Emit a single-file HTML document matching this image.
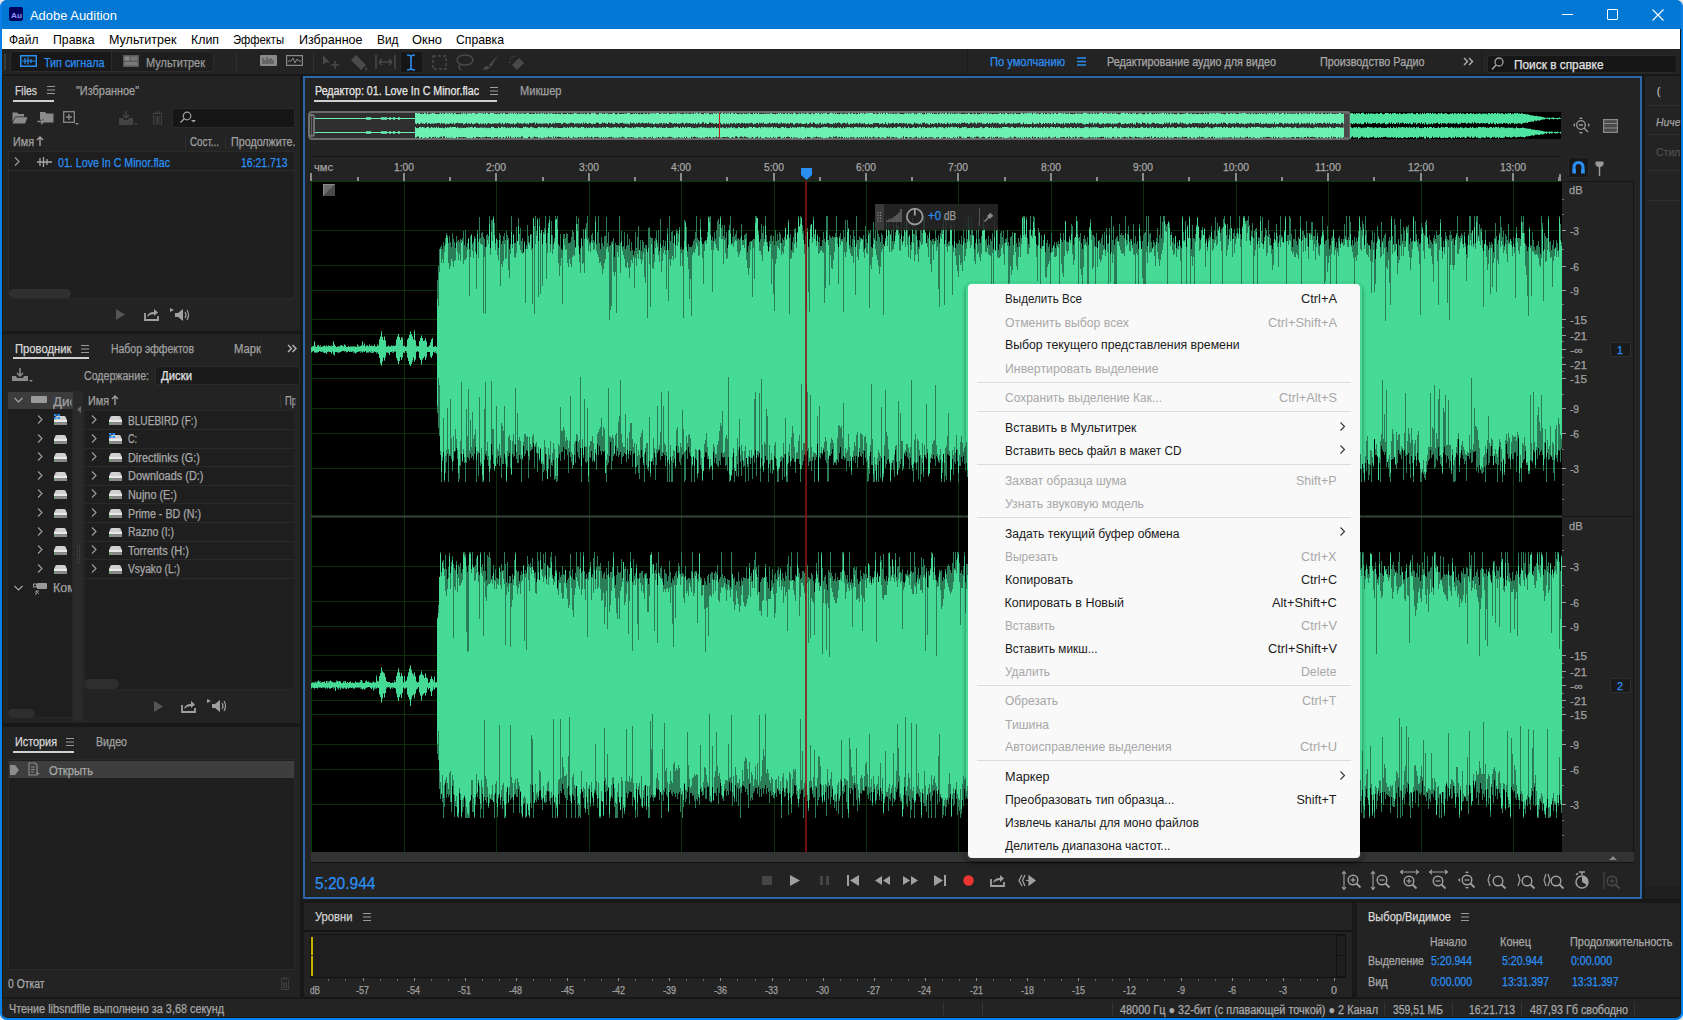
<!DOCTYPE html><html><head><meta charset="utf-8"><style>
*{margin:0;padding:0;box-sizing:border-box}
html,body{width:1683px;height:1020px;overflow:hidden;background:#e6e6e6}
body{font-family:"Liberation Sans",sans-serif;position:relative}
.ab{position:absolute}
.t{position:absolute;white-space:nowrap;line-height:1}
.pan{position:absolute;background:#232323}
.g{color:#a3a3a3}
.w{color:#d4d4d4}
.bl{color:#2b8ff2}
svg{position:absolute;overflow:visible}
</style></head><body>
<div class="ab" style="left:0;top:0;width:1683px;height:1020px;background:#181818;border-radius:7px;overflow:hidden;border:2px solid #0a7fe8">
</div>
<div class="ab" style="left:0;top:0;width:1683px;height:29px;background:#0078d4;border-radius:7px 7px 0 0"></div>
<div class="ab" style="left:2px;top:29px;width:1678px;height:20px;background:#fff"></div>
<div class="ab" style="left:2px;top:49px;width:1678px;height:25px;background:#232323"></div>
<div class="pan" style="left:3px;top:76px;width:297px;height:255px;background:#232323"></div>
<div class="pan" style="left:3px;top:334px;width:297px;height:389px;background:#232323"></div>
<div class="pan" style="left:3px;top:727px;width:297px;height:270px;background:#232323"></div>
<div class="pan" style="left:305px;top:78px;width:1335px;height:820px;background:#232323"></div>
<div class="pan" style="left:1645px;top:76px;width:35px;height:809px;background:#232323"></div>
<div class="pan" style="left:304px;top:903px;width:1048px;height:94px;background:#232323"></div>
<div class="pan" style="left:1357px;top:903px;width:323px;height:94px;background:#232323"></div>
<div class="pan" style="left:2px;top:999px;width:1678px;height:18px;background:#232323"></div>
<div class="ab" style="left:9px;top:7px;width:14px;height:14px;background:#00005b;border-radius:2px"></div>
<div class="t" style="left:10.5px;top:11px;font-size:8px;line-height:9.20px;color:#9999ff;font-weight:bold;transform:scaleX(1.0315);transform-origin:0 0;">Au</div>
<div class="t" style="left:30px;top:8px;font-size:13.5px;line-height:15.52px;color:#ffffff;transform:scaleX(0.9578);transform-origin:0 0;">Adobe Audition</div>
<div class="ab" style="left:1562px;top:14px;width:11px;height:1px;background:#fff"></div>
<div class="ab" style="left:1607px;top:9px;width:11px;height:11px;border:1px solid #fff;border-radius:1px"></div>
<svg style="left:1652px;top:9px" width="12" height="12"><path d="M0.5 0.5L11.5 11.5M11.5 0.5L0.5 11.5" stroke="#fff" stroke-width="1.1"/></svg>
<div class="t" style="left:8.5px;top:33px;font-size:13px;line-height:14.95px;color:#000000;transform:scaleX(0.9230);transform-origin:0 0;">Файл</div>
<div class="t" style="left:52.5px;top:33px;font-size:13px;line-height:14.95px;color:#000000;transform:scaleX(0.9450);transform-origin:0 0;">Правка</div>
<div class="t" style="left:109px;top:33px;font-size:13px;line-height:14.95px;color:#000000;transform:scaleX(0.9663);transform-origin:0 0;">Мультитрек</div>
<div class="t" style="left:190.5px;top:33px;font-size:13px;line-height:14.95px;color:#000000;transform:scaleX(0.9505);transform-origin:0 0;">Клип</div>
<div class="t" style="left:233px;top:33px;font-size:13px;line-height:14.95px;color:#000000;transform:scaleX(0.8630);transform-origin:0 0;">Эффекты</div>
<div class="t" style="left:298.5px;top:33px;font-size:13px;line-height:14.95px;color:#000000;transform:scaleX(0.9638);transform-origin:0 0;">Избранное</div>
<div class="t" style="left:376.5px;top:33px;font-size:13px;line-height:14.95px;color:#000000;transform:scaleX(0.9142);transform-origin:0 0;">Вид</div>
<div class="t" style="left:411.5px;top:33px;font-size:13px;line-height:14.95px;color:#000000;transform:scaleX(0.9931);transform-origin:0 0;">Окно</div>
<div class="t" style="left:455.5px;top:33px;font-size:13px;line-height:14.95px;color:#000000;transform:scaleX(0.9412);transform-origin:0 0;">Справка</div>
<div class="ab" style="left:4px;top:54px;width:2px;height:16px;background:#3a3a3a"></div>
<div class="ab" style="left:10px;top:51px;width:204px;height:21px;border:1px solid #2c2c2c;border-radius:3px;background:#1e1e1e"></div>
<div class="ab" style="left:11px;top:52px;width:100px;height:19px;background:#181818;border-radius:2px 0 0 2px"></div>
<div class="ab" style="left:111px;top:52px;width:1px;height:19px;background:#2c2c2c"></div>
<svg style="left:20px;top:55px" width="17" height="12"><rect x="0.75" y="0.75" width="15.5" height="10.5" fill="none" stroke="#2b8ff2" stroke-width="1.5"/><path d="M2 6H15M5 3V9M8 2.5V9.5M11 4V8" stroke="#2b8ff2" stroke-width="1.2"/></svg>
<div class="t" style="left:44px;top:57px;font-size:12px;line-height:13.80px;color:#2b8ff2;transform:scaleX(0.8977);transform-origin:0 0;-webkit-text-stroke:0.25px #2b8ff2;">Тип сигнала</div>
<svg style="left:123px;top:55px" width="16" height="12"><rect x="0" y="0" width="16" height="12" fill="#5a5a5a"/><rect x="1.5" y="1.5" width="5" height="4" fill="#8a8a8a"/><rect x="8" y="1.5" width="6.5" height="4" fill="#767676"/><rect x="1.5" y="7" width="13" height="3.5" fill="#7a7a7a"/></svg>
<div class="t" style="left:146px;top:57px;font-size:12px;line-height:13.80px;color:#9a9a9a;transform:scaleX(0.9150);transform-origin:0 0;-webkit-text-stroke:0.25px #9a9a9a;">Мультитрек</div>
<div class="ab" style="left:236px;top:52px;width:1px;height:21px;background:#303030"></div>
<svg style="left:260px;top:55px" width="17" height="11"><rect x="0" y="0" width="17" height="11" rx="1" fill="#8a8a8a"/><path d="M3 9V3M5 9V5M7 9V2M9 9V4M11 9V3M13 9V5" stroke="#444" stroke-width="1"/></svg>
<svg style="left:286px;top:55px" width="17" height="11"><rect x="0.6" y="0.6" width="15.8" height="9.8" fill="none" stroke="#8a8a8a" stroke-width="1.2"/><path d="M2 6H5L7 3L9 8L11 4L13 6H15" fill="none" stroke="#8a8a8a" stroke-width="1"/></svg>
<div class="ab" style="left:313px;top:53px;width:1px;height:20px;background:#303030"></div>
<svg style="left:322px;top:54px" width="19" height="16"><path d="M1 1L1 11L4 8L8 9Z" fill="#4a4a4a"/><path d="M13 7V15M9 11H17" stroke="#4a4a4a" stroke-width="1.5"/></svg>
<svg style="left:350px;top:54px" width="18" height="17"><path d="M1 6L6 1L16 11L11 16Z" fill="#4a4a4a"/><path d="M15 15L17 17L17 13Z" fill="#4a4a4a"/></svg>
<svg style="left:375px;top:54px" width="21" height="16"><path d="M1 1V15M20 1V15M4 8H17M4 8L7 5M4 8L7 11M17 8L14 5M17 8L14 11" stroke="#4a4a4a" stroke-width="1.5" fill="none"/></svg>
<div class="ab" style="left:400px;top:51px;width:23px;height:22px;background:#161616;border-radius:2px;border:1px solid #262626"></div>
<svg style="left:405px;top:54px" width="12" height="17"><path d="M2 1Q6 1 6 3V14Q6 16 2 16M10 1Q6 1 6 3V14Q6 16 10 16" stroke="#2b8ff2" stroke-width="1.6" fill="none"/></svg>
<svg style="left:432px;top:55px" width="15" height="15"><rect x="1" y="1" width="13" height="13" fill="none" stroke="#4a4a4a" stroke-width="1.5" stroke-dasharray="3 2"/></svg>
<svg style="left:456px;top:54px" width="18" height="17"><ellipse cx="9" cy="6" rx="8" ry="5" fill="none" stroke="#4a4a4a" stroke-width="1.5"/><path d="M4 10Q2 14 5 16" stroke="#4a4a4a" stroke-width="1.5" fill="none"/></svg>
<svg style="left:482px;top:54px" width="17" height="17"><path d="M16 1L7 11L9 13Z" fill="#4a4a4a"/><path d="M6 12Q2 12 1 16Q5 16 8 14Z" fill="#4a4a4a"/></svg>
<svg style="left:508px;top:54px" width="18" height="17"><path d="M4 11L11 4L16 9L9 16Z" fill="#4a4a4a"/><path d="M2 9Q1 3 8 2" stroke="#4a4a4a" stroke-width="1.2" stroke-dasharray="1.5 1.5" fill="none"/></svg>
<div class="ab" style="left:967px;top:50px;width:1px;height:24px;background:#1a1a1a"></div>
<div class="t" style="left:990px;top:56px;font-size:12px;line-height:13.80px;color:#2b8ff2;transform:scaleX(0.9242);transform-origin:0 0;-webkit-text-stroke:0.25px #2b8ff2;">По умолчанию</div>
<svg style="left:1077px;top:57px" width="9" height="9"><path d="M0 1H9M0 4.5H9M0 8H9" stroke="#2b8ff2" stroke-width="1.3"/></svg>
<div class="t" style="left:1107px;top:56px;font-size:12px;line-height:13.80px;color:#a8a8a8;transform:scaleX(0.8996);transform-origin:0 0;-webkit-text-stroke:0.25px #a8a8a8;">Редактирование аудио для видео</div>
<div class="t" style="left:1319.5px;top:56px;font-size:12px;line-height:13.80px;color:#a8a8a8;transform:scaleX(0.8990);transform-origin:0 0;-webkit-text-stroke:0.25px #a8a8a8;">Производство Радио</div>
<svg style="left:1463px;top:57px" width="11" height="9"><path d="M1 1L4.5 4.5L1 8M6 1L9.5 4.5L6 8" stroke="#b0b0b0" stroke-width="1.4" fill="none"/></svg>
<div class="ab" style="left:1481px;top:50px;width:1px;height:24px;background:#1a1a1a"></div>
<div class="ab" style="left:1487px;top:55px;width:190px;height:18px;background:#161616;border:1px solid #2a2a2a;border-radius:3px"></div>
<svg style="left:1491px;top:57px" width="13" height="14"><circle cx="8" cy="5" r="4" fill="none" stroke="#a0a0a0" stroke-width="1.3"/><path d="M5 8L1 12.5" stroke="#a0a0a0" stroke-width="1.5"/></svg>
<div class="t" style="left:1514px;top:58px;font-size:12.5px;line-height:14.37px;color:#e2e2e2;transform:scaleX(0.9486);transform-origin:0 0;-webkit-text-stroke:0.25px #e2e2e2;">Поиск в справке</div>
<div class="t" style="left:14.5px;top:85px;font-size:12px;line-height:13.80px;color:#d8d8d8;transform:scaleX(0.8683);transform-origin:0 0;-webkit-text-stroke:0.25px #d8d8d8;">Files</div>
<svg style="left:47px;top:86px" width="8" height="8"><path d="M0 0.5H8M0 4H8M0 7.5H8" stroke="#9a9a9a" stroke-width="1"/></svg>
<div class="ab" style="left:13px;top:100px;width:41px;height:2px;background:#d0d0d0;"></div>
<div class="t" style="left:76px;top:85px;font-size:12px;line-height:13.80px;color:#a0a0a0;transform:scaleX(0.9086);transform-origin:0 0;-webkit-text-stroke:0.25px #a0a0a0;">"Избранное"</div>
<svg style="left:12px;top:112px" width="16" height="12"><path d="M0.5 0.5H5L6.5 2H12V4.5H3.2L0.5 10Z" fill="#8a8a8a"/><path d="M3.5 5.2H15.5L13 11.5H0.5Z" fill="#8a8a8a"/></svg>
<svg style="left:37px;top:111px" width="18" height="15"><path d="M3 1H8L9.5 2.5H16.5V11.5H7V8.5H3Z" fill="#8a8a8a"/><path d="M0.5 10.5H6M4 8L6.8 10.5L4 13" stroke="#8a8a8a" stroke-width="1.6" fill="none"/></svg>
<svg style="left:63px;top:111px" width="17" height="15"><rect x="0.7" y="0.7" width="10.6" height="10.6" fill="none" stroke="#8a8a8a" stroke-width="1.3"/><path d="M6 3V9M3 6H9" stroke="#8a8a8a" stroke-width="1.3"/><path d="M12 12H16L14 14Z" fill="#8a8a8a"/></svg>
<svg style="left:118px;top:110px" width="21" height="16"><path d="M1 8H5L6 10H10L11 8H15V15H1Z" fill="#444"/><path d="M8 1V8M5 5L8 8L11 5" stroke="#444" stroke-width="1.5" fill="none"/><path d="M16 13H20L18 15Z" fill="#444"/></svg>
<svg style="left:152px;top:111px" width="11" height="14"><path d="M0.5 2.5H10.5M3.5 2.5V1H7.5V2.5M1.5 4V13H9.5V4M4 5V12M5.5 5V12M7 5V12" stroke="#444" stroke-width="0.9" fill="none"/></svg>
<div class="ab" style="left:172px;top:108px;width:123px;height:20px;background:#161616;border:1px solid #2a2a2a;border-radius:2px"></div>
<svg style="left:179px;top:111px" width="18" height="14"><circle cx="8" cy="5" r="3.8" fill="none" stroke="#a0a0a0" stroke-width="1.2"/><path d="M5.5 7.5L1.5 11.5" stroke="#a0a0a0" stroke-width="1.4"/><path d="M12 9H17L14.5 11.5Z" fill="#a0a0a0"/></svg>
<div class="t" style="left:12.5px;top:136px;font-size:12px;line-height:13.80px;color:#a0a0a0;transform:scaleX(0.8985);transform-origin:0 0;-webkit-text-stroke:0.25px #a0a0a0;">Имя</div>
<svg style="left:36px;top:136px" width="8" height="10"><path d="M4 10V1M1 4L4 1L7 4" stroke="#a0a0a0" stroke-width="1.4" fill="none"/></svg>
<div class="ab" style="left:185px;top:136px;width:1px;height:13px;background:#2e2e2e;"></div>
<div class="ab" style="left:225px;top:136px;width:1px;height:13px;background:#2e2e2e;"></div>
<div class="t" style="left:190px;top:136px;font-size:12px;line-height:13.80px;color:#a0a0a0;transform:scaleX(0.8167);transform-origin:0 0;-webkit-text-stroke:0.25px #a0a0a0;">Сост...</div>
<div class="t" style="left:230.5px;top:136px;font-size:12px;line-height:13.80px;color:#a0a0a0;transform:scaleX(0.8930);transform-origin:0 0;-webkit-text-stroke:0.25px #a0a0a0;">Продолжите.</div>
<div class="ab" style="left:8px;top:151px;width:287px;height:148px;background:#1e1e1e;border:1px solid #2a2a2a"></div>
<div class="ab" style="left:9px;top:170px;width:285px;height:1px;background:#2c2c2c;"></div>
<svg style="left:14px;top:157px" width="6" height="9"><path d="M1 0.5L5 4.5L1 8.5" stroke="#a0a0a0" stroke-width="1.1" fill="none"/></svg>
<svg style="left:37px;top:157px" width="15" height="10"><path d="M0 5H15M3 1V9M6.5 0V10M10 2V8" stroke="#a8a8a8" stroke-width="1.3"/></svg>
<div class="t" style="left:58px;top:157px;font-size:12px;line-height:13.80px;color:#2b8ff2;transform:scaleX(0.8884);transform-origin:0 0;-webkit-text-stroke:0.25px #2b8ff2;">01. Love In C Minor.flac</div>
<div class="t" style="left:241px;top:157px;font-size:12px;line-height:13.80px;color:#2b8ff2;transform:scaleX(0.8710);transform-origin:0 0;-webkit-text-stroke:0.25px #2b8ff2;">16:21.713</div>
<div class="ab" style="left:9px;top:289px;width:62px;height:9px;background:#2f2f2f;border-radius:5px"></div>
<svg style="left:116px;top:309px" width="9" height="11"><path d="M0 0L9 5.5L0 11Z" fill="#555"/></svg>
<svg style="left:144px;top:308px" width="15" height="13"><path d="M1 5V12H14V8" stroke="#a0a0a0" stroke-width="1.8" fill="none"/><path d="M3 9Q4 4 10 4V1L14 4.5L10 8V6Q6 6 3 9Z" fill="#a0a0a0"/></svg>
<svg style="left:170px;top:308px" width="22" height="14"><path d="M0 0L4 2L0 4Z" fill="#a0a0a0"/><path d="M5 5H8L13 1V13L8 9H5Z" fill="#a0a0a0"/><path d="M15 4Q17 7 15 10M17 2Q20 7 17 12" stroke="#a0a0a0" stroke-width="1.2" fill="none"/></svg>
<div class="t" style="left:14.5px;top:343px;font-size:12px;line-height:13.80px;color:#d8d8d8;transform:scaleX(0.9384);transform-origin:0 0;-webkit-text-stroke:0.25px #d8d8d8;">Проводник</div>
<svg style="left:81px;top:345px" width="8" height="8"><path d="M0 0.5H8M0 4H8M0 7.5H8" stroke="#9a9a9a" stroke-width="1"/></svg>
<div class="ab" style="left:13px;top:357px;width:76px;height:2px;background:#d0d0d0;"></div>
<div class="t" style="left:111px;top:343px;font-size:12px;line-height:13.80px;color:#a0a0a0;transform:scaleX(0.8715);transform-origin:0 0;-webkit-text-stroke:0.25px #a0a0a0;">Набор эффектов</div>
<div class="t" style="left:233.5px;top:343px;font-size:12px;line-height:13.80px;color:#a0a0a0;transform:scaleX(0.9398);transform-origin:0 0;-webkit-text-stroke:0.25px #a0a0a0;">Марк</div>
<div class="ab" style="left:261px;top:338px;width:1px;height:22px;background:#2a2a2a;"></div>
<svg style="left:287px;top:344px" width="10" height="9"><path d="M1 1L4.5 4.5L1 8M5.5 1L9 4.5L5.5 8" stroke="#b8b8b8" stroke-width="1.4" fill="none"/></svg>
<svg style="left:12px;top:368px" width="22" height="16"><path d="M8 0V8M5 5L8 8L11 5" stroke="#8a8a8a" stroke-width="1.5" fill="none"/><path d="M0 8H4L5 10H11L12 8H16V13H0Z" fill="#8a8a8a"/><path d="M17 12H21L19 14Z" fill="#8a8a8a"/></svg>
<div class="t" style="left:84px;top:370px;font-size:12px;line-height:13.80px;color:#a0a0a0;transform:scaleX(0.8847);transform-origin:0 0;-webkit-text-stroke:0.25px #a0a0a0;">Содержание:</div>
<div class="ab" style="left:155px;top:366px;width:145px;height:19px;background:#1a1a1a;border:1px solid #2c2c2c;border-radius:2px"></div>
<div class="t" style="left:161px;top:370px;font-size:12px;line-height:13.80px;color:#e0e0e0;transform:scaleX(0.9456);transform-origin:0 0;-webkit-text-stroke:0.25px #e0e0e0;">Диски</div>
<div class="ab" style="left:7px;top:391px;width:66px;height:327px;background:#1e1e1e;border:1px solid #262626"></div>
<div class="ab" style="left:8px;top:392px;width:65px;height:17px;background:#3c3c3c;"></div>
<svg style="left:14px;top:397px" width="9" height="6"><path d="M0.5 1L4.5 5L8.5 1" stroke="#a8a8a8" stroke-width="1.1" fill="none"/></svg>
<svg style="left:31px;top:396px" width="16" height="8"><rect x="0" y="0" width="16" height="7" rx="1" fill="#9a9a9a"/></svg>
<div class="t" style="left:53px;top:396px;font-size:12px;line-height:13.80px;color:#a0a0a0;transform:scaleX(1.1042);transform-origin:0 0;-webkit-text-stroke:0.25px #a0a0a0;clip-path:inset(0 4px 0 0);">Дис</div>
<div class="ab" style="left:73px;top:391px;width:10px;height:330px;background:#2a2a2a;"></div>
<svg style="left:77px;top:406px" width="4" height="7"><path d="M4 0L0 3.5L4 7Z" fill="#666"/></svg>
<svg style="left:77px;top:545px" width="3" height="20"><path d="M0.5 0V20M2.5 0V20" stroke="#444" stroke-width="1" stroke-dasharray="1 1"/></svg>
<div class="ab" style="left:84px;top:410px;width:211px;height:280px;background:#1e1e1e;border:1px solid #262626"></div>
<div class="t" style="left:88px;top:395px;font-size:12px;line-height:13.80px;color:#a0a0a0;transform:scaleX(0.8985);transform-origin:0 0;-webkit-text-stroke:0.25px #a0a0a0;">Имя</div>
<svg style="left:111px;top:395px" width="8" height="10"><path d="M4 10V1M1 4L4 1L7 4" stroke="#a0a0a0" stroke-width="1.4" fill="none"/></svg>
<div class="ab" style="left:280px;top:394px;width:1px;height:14px;background:#2e2e2e;"></div>
<div class="t" style="left:285px;top:395px;font-size:12px;line-height:13.80px;color:#a0a0a0;transform:scaleX(0.7844);transform-origin:0 0;-webkit-text-stroke:0.25px #a0a0a0;clip-path:inset(0 2px 0 0);">Пр</div>
<svg style="left:91px;top:415.0px" width="6" height="9"><path d="M1 0.5L5 4.5L1 8.5" stroke="#a0a0a0" stroke-width="1.1" fill="none"/></svg>
<svg style="left:108px;top:414.0px" width="15" height="12"><path d="M2 4Q2 2 4 2H11Q13 2 13 4L14 6H1Z" fill="#d0d0d0"/><rect x="1" y="6" width="13" height="2.5" fill="#e8e8e8"/><rect x="1" y="8.5" width="13" height="2.5" fill="#8a8a8a"/><rect x="2" y="9.2" width="1.2" height="1" fill="#3c3"/></svg>
<div class="t" style="left:128px;top:415px;font-size:12px;line-height:13.80px;color:#a8a8a8;transform:scaleX(0.8414);transform-origin:0 0;-webkit-text-stroke:0.25px #a8a8a8;">BLUEBIRD (F:)</div>
<div class="ab" style="left:85px;top:429px;width:209px;height:1px;background:#2a2a2a;"></div>
<svg style="left:37px;top:415.0px" width="6" height="9"><path d="M1 0.5L5 4.5L1 8.5" stroke="#a0a0a0" stroke-width="1.1" fill="none"/></svg>
<svg style="left:53px;top:414.0px" width="15" height="12"><path d="M2 4Q2 2 4 2H11Q13 2 13 4L14 6H1Z" fill="#d0d0d0"/><rect x="1" y="6" width="13" height="2.5" fill="#e8e8e8"/><rect x="1" y="8.5" width="13" height="2.5" fill="#8a8a8a"/><rect x="2" y="9.2" width="1.2" height="1" fill="#3c3"/><rect x="1" y="0" width="2.5" height="2" fill="#2b8ff2"/><rect x="4.5" y="0" width="2.5" height="2" fill="#2b8ff2"/><rect x="1" y="3" width="2.5" height="2" fill="#2b8ff2"/><rect x="4.5" y="3" width="2.5" height="2" fill="#2b8ff2"/></svg>
<svg style="left:91px;top:433.6px" width="6" height="9"><path d="M1 0.5L5 4.5L1 8.5" stroke="#a0a0a0" stroke-width="1.1" fill="none"/></svg>
<svg style="left:108px;top:432.6px" width="15" height="12"><path d="M2 4Q2 2 4 2H11Q13 2 13 4L14 6H1Z" fill="#d0d0d0"/><rect x="1" y="6" width="13" height="2.5" fill="#e8e8e8"/><rect x="1" y="8.5" width="13" height="2.5" fill="#8a8a8a"/><rect x="2" y="9.2" width="1.2" height="1" fill="#3c3"/><rect x="1" y="0" width="2.5" height="2" fill="#2b8ff2"/><rect x="4.5" y="0" width="2.5" height="2" fill="#2b8ff2"/><rect x="1" y="3" width="2.5" height="2" fill="#2b8ff2"/><rect x="4.5" y="3" width="2.5" height="2" fill="#2b8ff2"/></svg>
<div class="t" style="left:128px;top:433px;font-size:12px;line-height:13.80px;color:#a8a8a8;transform:scaleX(0.7500);transform-origin:0 0;-webkit-text-stroke:0.25px #a8a8a8;">C:</div>
<div class="ab" style="left:85px;top:448px;width:209px;height:1px;background:#2a2a2a;"></div>
<svg style="left:37px;top:433.6px" width="6" height="9"><path d="M1 0.5L5 4.5L1 8.5" stroke="#a0a0a0" stroke-width="1.1" fill="none"/></svg>
<svg style="left:53px;top:432.6px" width="15" height="12"><path d="M2 4Q2 2 4 2H11Q13 2 13 4L14 6H1Z" fill="#d0d0d0"/><rect x="1" y="6" width="13" height="2.5" fill="#e8e8e8"/><rect x="1" y="8.5" width="13" height="2.5" fill="#8a8a8a"/><rect x="2" y="9.2" width="1.2" height="1" fill="#3c3"/></svg>
<svg style="left:91px;top:452.2px" width="6" height="9"><path d="M1 0.5L5 4.5L1 8.5" stroke="#a0a0a0" stroke-width="1.1" fill="none"/></svg>
<svg style="left:108px;top:451.2px" width="15" height="12"><path d="M2 4Q2 2 4 2H11Q13 2 13 4L14 6H1Z" fill="#d0d0d0"/><rect x="1" y="6" width="13" height="2.5" fill="#e8e8e8"/><rect x="1" y="8.5" width="13" height="2.5" fill="#8a8a8a"/><rect x="2" y="9.2" width="1.2" height="1" fill="#3c3"/></svg>
<div class="t" style="left:128px;top:452px;font-size:12px;line-height:13.80px;color:#a8a8a8;transform:scaleX(0.9075);transform-origin:0 0;-webkit-text-stroke:0.25px #a8a8a8;">Directlinks (G:)</div>
<div class="ab" style="left:85px;top:466px;width:209px;height:1px;background:#2a2a2a;"></div>
<svg style="left:37px;top:452.2px" width="6" height="9"><path d="M1 0.5L5 4.5L1 8.5" stroke="#a0a0a0" stroke-width="1.1" fill="none"/></svg>
<svg style="left:53px;top:451.2px" width="15" height="12"><path d="M2 4Q2 2 4 2H11Q13 2 13 4L14 6H1Z" fill="#d0d0d0"/><rect x="1" y="6" width="13" height="2.5" fill="#e8e8e8"/><rect x="1" y="8.5" width="13" height="2.5" fill="#8a8a8a"/><rect x="2" y="9.2" width="1.2" height="1" fill="#3c3"/></svg>
<svg style="left:91px;top:470.8px" width="6" height="9"><path d="M1 0.5L5 4.5L1 8.5" stroke="#a0a0a0" stroke-width="1.1" fill="none"/></svg>
<svg style="left:108px;top:469.8px" width="15" height="12"><path d="M2 4Q2 2 4 2H11Q13 2 13 4L14 6H1Z" fill="#d0d0d0"/><rect x="1" y="6" width="13" height="2.5" fill="#e8e8e8"/><rect x="1" y="8.5" width="13" height="2.5" fill="#8a8a8a"/><rect x="2" y="9.2" width="1.2" height="1" fill="#3c3"/></svg>
<div class="t" style="left:128px;top:470px;font-size:12px;line-height:13.80px;color:#a8a8a8;transform:scaleX(0.9130);transform-origin:0 0;-webkit-text-stroke:0.25px #a8a8a8;">Downloads (D:)</div>
<div class="ab" style="left:85px;top:485px;width:209px;height:1px;background:#2a2a2a;"></div>
<svg style="left:37px;top:470.8px" width="6" height="9"><path d="M1 0.5L5 4.5L1 8.5" stroke="#a0a0a0" stroke-width="1.1" fill="none"/></svg>
<svg style="left:53px;top:469.8px" width="15" height="12"><path d="M2 4Q2 2 4 2H11Q13 2 13 4L14 6H1Z" fill="#d0d0d0"/><rect x="1" y="6" width="13" height="2.5" fill="#e8e8e8"/><rect x="1" y="8.5" width="13" height="2.5" fill="#8a8a8a"/><rect x="2" y="9.2" width="1.2" height="1" fill="#3c3"/></svg>
<svg style="left:91px;top:489.4px" width="6" height="9"><path d="M1 0.5L5 4.5L1 8.5" stroke="#a0a0a0" stroke-width="1.1" fill="none"/></svg>
<svg style="left:108px;top:488.4px" width="15" height="12"><path d="M2 4Q2 2 4 2H11Q13 2 13 4L14 6H1Z" fill="#d0d0d0"/><rect x="1" y="6" width="13" height="2.5" fill="#e8e8e8"/><rect x="1" y="8.5" width="13" height="2.5" fill="#8a8a8a"/><rect x="2" y="9.2" width="1.2" height="1" fill="#3c3"/></svg>
<div class="t" style="left:128px;top:489px;font-size:12px;line-height:13.80px;color:#a8a8a8;transform:scaleX(0.9071);transform-origin:0 0;-webkit-text-stroke:0.25px #a8a8a8;">Nujno (E:)</div>
<div class="ab" style="left:85px;top:503px;width:209px;height:1px;background:#2a2a2a;"></div>
<svg style="left:37px;top:489.4px" width="6" height="9"><path d="M1 0.5L5 4.5L1 8.5" stroke="#a0a0a0" stroke-width="1.1" fill="none"/></svg>
<svg style="left:53px;top:488.4px" width="15" height="12"><path d="M2 4Q2 2 4 2H11Q13 2 13 4L14 6H1Z" fill="#d0d0d0"/><rect x="1" y="6" width="13" height="2.5" fill="#e8e8e8"/><rect x="1" y="8.5" width="13" height="2.5" fill="#8a8a8a"/><rect x="2" y="9.2" width="1.2" height="1" fill="#3c3"/></svg>
<svg style="left:91px;top:508.0px" width="6" height="9"><path d="M1 0.5L5 4.5L1 8.5" stroke="#a0a0a0" stroke-width="1.1" fill="none"/></svg>
<svg style="left:108px;top:507.0px" width="15" height="12"><path d="M2 4Q2 2 4 2H11Q13 2 13 4L14 6H1Z" fill="#d0d0d0"/><rect x="1" y="6" width="13" height="2.5" fill="#e8e8e8"/><rect x="1" y="8.5" width="13" height="2.5" fill="#8a8a8a"/><rect x="2" y="9.2" width="1.2" height="1" fill="#3c3"/></svg>
<div class="t" style="left:128px;top:508px;font-size:12px;line-height:13.80px;color:#a8a8a8;transform:scaleX(0.8903);transform-origin:0 0;-webkit-text-stroke:0.25px #a8a8a8;">Prime - BD (N:)</div>
<div class="ab" style="left:85px;top:522px;width:209px;height:1px;background:#2a2a2a;"></div>
<svg style="left:37px;top:508.0px" width="6" height="9"><path d="M1 0.5L5 4.5L1 8.5" stroke="#a0a0a0" stroke-width="1.1" fill="none"/></svg>
<svg style="left:53px;top:507.0px" width="15" height="12"><path d="M2 4Q2 2 4 2H11Q13 2 13 4L14 6H1Z" fill="#d0d0d0"/><rect x="1" y="6" width="13" height="2.5" fill="#e8e8e8"/><rect x="1" y="8.5" width="13" height="2.5" fill="#8a8a8a"/><rect x="2" y="9.2" width="1.2" height="1" fill="#3c3"/></svg>
<svg style="left:91px;top:526.6px" width="6" height="9"><path d="M1 0.5L5 4.5L1 8.5" stroke="#a0a0a0" stroke-width="1.1" fill="none"/></svg>
<svg style="left:108px;top:525.6px" width="15" height="12"><path d="M2 4Q2 2 4 2H11Q13 2 13 4L14 6H1Z" fill="#d0d0d0"/><rect x="1" y="6" width="13" height="2.5" fill="#e8e8e8"/><rect x="1" y="8.5" width="13" height="2.5" fill="#8a8a8a"/><rect x="2" y="9.2" width="1.2" height="1" fill="#3c3"/></svg>
<div class="t" style="left:128px;top:526px;font-size:12px;line-height:13.80px;color:#a8a8a8;transform:scaleX(0.8732);transform-origin:0 0;-webkit-text-stroke:0.25px #a8a8a8;">Razno (I:)</div>
<div class="ab" style="left:85px;top:541px;width:209px;height:1px;background:#2a2a2a;"></div>
<svg style="left:37px;top:526.6px" width="6" height="9"><path d="M1 0.5L5 4.5L1 8.5" stroke="#a0a0a0" stroke-width="1.1" fill="none"/></svg>
<svg style="left:53px;top:525.6px" width="15" height="12"><path d="M2 4Q2 2 4 2H11Q13 2 13 4L14 6H1Z" fill="#d0d0d0"/><rect x="1" y="6" width="13" height="2.5" fill="#e8e8e8"/><rect x="1" y="8.5" width="13" height="2.5" fill="#8a8a8a"/><rect x="2" y="9.2" width="1.2" height="1" fill="#3c3"/></svg>
<svg style="left:91px;top:545.2px" width="6" height="9"><path d="M1 0.5L5 4.5L1 8.5" stroke="#a0a0a0" stroke-width="1.1" fill="none"/></svg>
<svg style="left:108px;top:544.2px" width="15" height="12"><path d="M2 4Q2 2 4 2H11Q13 2 13 4L14 6H1Z" fill="#d0d0d0"/><rect x="1" y="6" width="13" height="2.5" fill="#e8e8e8"/><rect x="1" y="8.5" width="13" height="2.5" fill="#8a8a8a"/><rect x="2" y="9.2" width="1.2" height="1" fill="#3c3"/></svg>
<div class="t" style="left:128px;top:545px;font-size:12px;line-height:13.80px;color:#a8a8a8;transform:scaleX(0.9149);transform-origin:0 0;-webkit-text-stroke:0.25px #a8a8a8;">Torrents (H:)</div>
<div class="ab" style="left:85px;top:559px;width:209px;height:1px;background:#2a2a2a;"></div>
<svg style="left:37px;top:545.2px" width="6" height="9"><path d="M1 0.5L5 4.5L1 8.5" stroke="#a0a0a0" stroke-width="1.1" fill="none"/></svg>
<svg style="left:53px;top:544.2px" width="15" height="12"><path d="M2 4Q2 2 4 2H11Q13 2 13 4L14 6H1Z" fill="#d0d0d0"/><rect x="1" y="6" width="13" height="2.5" fill="#e8e8e8"/><rect x="1" y="8.5" width="13" height="2.5" fill="#8a8a8a"/><rect x="2" y="9.2" width="1.2" height="1" fill="#3c3"/></svg>
<svg style="left:91px;top:563.8px" width="6" height="9"><path d="M1 0.5L5 4.5L1 8.5" stroke="#a0a0a0" stroke-width="1.1" fill="none"/></svg>
<svg style="left:108px;top:562.8px" width="15" height="12"><path d="M2 4Q2 2 4 2H11Q13 2 13 4L14 6H1Z" fill="#d0d0d0"/><rect x="1" y="6" width="13" height="2.5" fill="#e8e8e8"/><rect x="1" y="8.5" width="13" height="2.5" fill="#8a8a8a"/><rect x="2" y="9.2" width="1.2" height="1" fill="#3c3"/></svg>
<div class="t" style="left:128px;top:563px;font-size:12px;line-height:13.80px;color:#a8a8a8;transform:scaleX(0.8569);transform-origin:0 0;-webkit-text-stroke:0.25px #a8a8a8;">Vsyako (L:)</div>
<div class="ab" style="left:85px;top:578px;width:209px;height:1px;background:#2a2a2a;"></div>
<svg style="left:37px;top:563.8px" width="6" height="9"><path d="M1 0.5L5 4.5L1 8.5" stroke="#a0a0a0" stroke-width="1.1" fill="none"/></svg>
<svg style="left:53px;top:562.8px" width="15" height="12"><path d="M2 4Q2 2 4 2H11Q13 2 13 4L14 6H1Z" fill="#d0d0d0"/><rect x="1" y="6" width="13" height="2.5" fill="#e8e8e8"/><rect x="1" y="8.5" width="13" height="2.5" fill="#8a8a8a"/><rect x="2" y="9.2" width="1.2" height="1" fill="#3c3"/></svg>
<svg style="left:14px;top:585px" width="9" height="6"><path d="M0.5 1L4.5 5L8.5 1" stroke="#a8a8a8" stroke-width="1.1" fill="none"/></svg>
<svg style="left:32px;top:582px" width="15" height="13"><rect x="5" y="1" width="10" height="6" rx="1" fill="#9a9a9a"/><rect x="1.5" y="2" width="3" height="3" fill="none" stroke="#9a9a9a" stroke-width="1"/><path d="M4 13V9H7M4 9L7 12" stroke="#9a9a9a" stroke-width="1" fill="none"/></svg>
<div class="t" style="left:53px;top:582px;font-size:12px;line-height:13.80px;color:#a0a0a0;transform:scaleX(1.0496);transform-origin:0 0;-webkit-text-stroke:0.25px #a0a0a0;clip-path:inset(0 4px 0 0);">Ком</div>
<div class="ab" style="left:84px;top:679px;width:35px;height:10px;background:#2e2e2e;border-radius:5px"></div>
<div class="ab" style="left:8px;top:709px;width:27px;height:9px;background:#2e2e2e;border-radius:5px"></div>
<svg style="left:154px;top:701px" width="9" height="11"><path d="M0 0L9 5.5L0 11Z" fill="#555"/></svg>
<svg style="left:181px;top:700px" width="15" height="13"><path d="M1 5V12H14V8" stroke="#a0a0a0" stroke-width="1.8" fill="none"/><path d="M3 9Q4 4 10 4V1L14 4.5L10 8V6Q6 6 3 9Z" fill="#a0a0a0"/></svg>
<svg style="left:207px;top:699px" width="22" height="14"><path d="M0 0L4 2L0 4Z" fill="#a0a0a0"/><path d="M5 5H8L13 1V13L8 9H5Z" fill="#a0a0a0"/><path d="M15 4Q17 7 15 10M17 2Q20 7 17 12" stroke="#a0a0a0" stroke-width="1.2" fill="none"/></svg>
<div class="t" style="left:14.5px;top:736px;font-size:12px;line-height:13.80px;color:#d8d8d8;transform:scaleX(0.9025);transform-origin:0 0;-webkit-text-stroke:0.25px #d8d8d8;">История</div>
<svg style="left:66px;top:738px" width="8" height="8"><path d="M0 0.5H8M0 4H8M0 7.5H8" stroke="#9a9a9a" stroke-width="1"/></svg>
<div class="ab" style="left:13px;top:751px;width:61px;height:2px;background:#d0d0d0;"></div>
<div class="t" style="left:96px;top:736px;font-size:12px;line-height:13.80px;color:#a0a0a0;transform:scaleX(0.8843);transform-origin:0 0;-webkit-text-stroke:0.25px #a0a0a0;">Видео</div>
<div class="ab" style="left:8px;top:759px;width:287px;height:211px;background:#1e1e1e;border:1px solid #2a2a2a"></div>
<div class="ab" style="left:9px;top:761px;width:285px;height:17px;background:#3e3e3e;"></div>
<svg style="left:10px;top:765px" width="9" height="10"><path d="M0 0H5L9 5L5 10H0Z" fill="#8c8c8c"/></svg>
<svg style="left:28px;top:762px" width="12" height="15"><path d="M1 1H7L9 3V13H1Z" fill="none" stroke="#8c8c8c" stroke-width="1.2"/><path d="M3 5H7M3 7.5H7M3 10H6" stroke="#8c8c8c" stroke-width="1"/><path d="M8 9L12 12L9.5 12.5L10.5 15Z" fill="#8c8c8c"/></svg>
<div class="t" style="left:49px;top:765px;font-size:12px;line-height:13.80px;color:#a8a8a8;transform:scaleX(0.9336);transform-origin:0 0;-webkit-text-stroke:0.25px #a8a8a8;">Открыть</div>
<div class="t" style="left:8px;top:978px;font-size:12px;line-height:13.80px;color:#a8a8a8;transform:scaleX(0.8637);transform-origin:0 0;-webkit-text-stroke:0.25px #a8a8a8;">0 Откат</div>
<svg style="left:280px;top:977px" width="10" height="13"><path d="M0 2H10M3.5 2V0.5H6.5V2M1.5 3.5V12.5H8.5V3.5M3.5 5V11M5 5V11M6.5 5V11" stroke="#3e3e3e" stroke-width="1" fill="none"/></svg>
<div class="t" style="left:9px;top:1003px;font-size:12px;line-height:13.80px;color:#a4a4a4;transform:scaleX(0.9028);transform-origin:0 0;-webkit-text-stroke:0.25px #a4a4a4;">Чтение libsndfile выполнено за 3,68 секунд</div>
<div class="ab" style="left:303px;top:76px;width:1339px;height:823px;border:2px solid #2b66a8"></div>
<div class="t" style="left:315px;top:85px;font-size:12px;line-height:13.80px;color:#e6e6e6;transform:scaleX(0.8894);transform-origin:0 0;-webkit-text-stroke:0.25px #e6e6e6;">Редактор: 01. Love In C Minor.flac</div>
<svg style="left:489.5px;top:87px" width="8" height="8"><path d="M0 0.5H8M0 4H8M0 7.5H8" stroke="#a0a0a0" stroke-width="1"/></svg>
<div class="ab" style="left:314px;top:100px;width:183px;height:2px;background:#d0d0d0;"></div>
<div class="t" style="left:519.5px;top:85px;font-size:12px;line-height:13.80px;color:#a0a0a0;transform:scaleX(0.9238);transform-origin:0 0;-webkit-text-stroke:0.25px #a0a0a0;">Микшер</div>
<div class="ab" style="left:308px;top:112px;width:1253px;height:27px;background:#000;"></div>
<div class="ab" style="left:308px;top:111px;width:1043px;height:29px;border:2px solid #6a6a6a;border-radius:4px;background:#2f2f2f"></div>
<div class="ab" style="left:308px;top:114px;width:7px;height:23px;background:#2f2f2f;border:2px solid #707070;border-radius:3px"></div>
<div class="ab" style="left:311px;top:116px;width:1px;height:19px;background:#606060"></div>
<div class="ab" style="left:1343px;top:113px;width:7px;height:25px;background:#4a4a4a;border:1px solid #666;border-radius:2px"></div>
<svg style="left:1573px;top:117px" width="18" height="18"><circle cx="8" cy="8" r="4.3" fill="none" stroke="#9a9a9a" stroke-width="1.3"/><path d="M6 8H10M11 11L15 15" stroke="#9a9a9a" stroke-width="1.4"/><path d="M8 0L6 2H10ZM8 17L6 15H10ZM0 8L2 6V10ZM17 8L15 6V10Z" fill="#9a9a9a"/></svg>
<svg style="left:1603px;top:119px" width="15" height="14"><rect x="0.6" y="0.6" width="13.8" height="12.8" fill="#4a4a4a" stroke="#8a8a8a" stroke-width="1.2"/><path d="M1 4.5H14M1 9H14" stroke="#8a8a8a" stroke-width="1"/></svg>
<div class="ab" style="left:311px;top:156px;width:1251px;height:25px;background:#232323;border-top:1px solid #161616"></div>
<div class="t" style="left:314px;top:161px;font-size:11px;line-height:12.65px;color:#a0a0a0;transform:scaleX(1.0110);transform-origin:0 0;-webkit-text-stroke:0.25px #a0a0a0;">чмс</div>
<div class="ab" style="left:310px;top:173px;width:2px;height:8px;background:#8c8c8c;"></div>
<div class="ab" style="left:357px;top:177px;width:2px;height:4px;background:#8c8c8c;"></div>
<div class="t" style="left:393.92px;top:161px;font-size:11.5px;line-height:13.22px;color:#a8a8a8;transform:scaleX(0.8935);transform-origin:0 0;-webkit-text-stroke:0.25px #a8a8a8;">1:00</div>
<div class="ab" style="left:403px;top:173px;width:2px;height:8px;background:#8c8c8c;"></div>
<div class="ab" style="left:449px;top:177px;width:2px;height:4px;background:#8c8c8c;"></div>
<div class="t" style="left:486.34000000000003px;top:161px;font-size:11.5px;line-height:13.22px;color:#a8a8a8;transform:scaleX(0.8935);transform-origin:0 0;-webkit-text-stroke:0.25px #a8a8a8;">2:00</div>
<div class="ab" style="left:495px;top:173px;width:2px;height:8px;background:#8c8c8c;"></div>
<div class="ab" style="left:542px;top:177px;width:2px;height:4px;background:#8c8c8c;"></div>
<div class="t" style="left:578.76px;top:161px;font-size:11.5px;line-height:13.22px;color:#a8a8a8;transform:scaleX(0.8935);transform-origin:0 0;-webkit-text-stroke:0.25px #a8a8a8;">3:00</div>
<div class="ab" style="left:588px;top:173px;width:2px;height:8px;background:#8c8c8c;"></div>
<div class="ab" style="left:634px;top:177px;width:2px;height:4px;background:#8c8c8c;"></div>
<div class="t" style="left:671.1800000000001px;top:161px;font-size:11.5px;line-height:13.22px;color:#a8a8a8;transform:scaleX(0.8935);transform-origin:0 0;-webkit-text-stroke:0.25px #a8a8a8;">4:00</div>
<div class="ab" style="left:680px;top:173px;width:2px;height:8px;background:#8c8c8c;"></div>
<div class="ab" style="left:726px;top:177px;width:2px;height:4px;background:#8c8c8c;"></div>
<div class="t" style="left:763.6px;top:161px;font-size:11.5px;line-height:13.22px;color:#a8a8a8;transform:scaleX(0.8935);transform-origin:0 0;-webkit-text-stroke:0.25px #a8a8a8;">5:00</div>
<div class="ab" style="left:773px;top:173px;width:2px;height:8px;background:#8c8c8c;"></div>
<div class="ab" style="left:819px;top:177px;width:2px;height:4px;background:#8c8c8c;"></div>
<div class="t" style="left:856.02px;top:161px;font-size:11.5px;line-height:13.22px;color:#a8a8a8;transform:scaleX(0.8935);transform-origin:0 0;-webkit-text-stroke:0.25px #a8a8a8;">6:00</div>
<div class="ab" style="left:865px;top:173px;width:2px;height:8px;background:#8c8c8c;"></div>
<div class="ab" style="left:911px;top:177px;width:2px;height:4px;background:#8c8c8c;"></div>
<div class="t" style="left:948.44px;top:161px;font-size:11.5px;line-height:13.22px;color:#a8a8a8;transform:scaleX(0.8935);transform-origin:0 0;-webkit-text-stroke:0.25px #a8a8a8;">7:00</div>
<div class="ab" style="left:957px;top:173px;width:2px;height:8px;background:#8c8c8c;"></div>
<div class="ab" style="left:1004px;top:177px;width:2px;height:4px;background:#8c8c8c;"></div>
<div class="t" style="left:1040.8600000000001px;top:161px;font-size:11.5px;line-height:13.22px;color:#a8a8a8;transform:scaleX(0.8935);transform-origin:0 0;-webkit-text-stroke:0.25px #a8a8a8;">8:00</div>
<div class="ab" style="left:1050px;top:173px;width:2px;height:8px;background:#8c8c8c;"></div>
<div class="ab" style="left:1096px;top:177px;width:2px;height:4px;background:#8c8c8c;"></div>
<div class="t" style="left:1133.28px;top:161px;font-size:11.5px;line-height:13.22px;color:#a8a8a8;transform:scaleX(0.8935);transform-origin:0 0;-webkit-text-stroke:0.25px #a8a8a8;">9:00</div>
<div class="ab" style="left:1142px;top:173px;width:2px;height:8px;background:#8c8c8c;"></div>
<div class="ab" style="left:1188px;top:177px;width:2px;height:4px;background:#8c8c8c;"></div>
<div class="t" style="left:1222.7px;top:161px;font-size:11.5px;line-height:13.22px;color:#a8a8a8;transform:scaleX(0.9034);transform-origin:0 0;-webkit-text-stroke:0.25px #a8a8a8;">10:00</div>
<div class="ab" style="left:1235px;top:173px;width:2px;height:8px;background:#8c8c8c;"></div>
<div class="ab" style="left:1281px;top:177px;width:2px;height:4px;background:#8c8c8c;"></div>
<div class="t" style="left:1315.12px;top:161px;font-size:11.5px;line-height:13.22px;color:#a8a8a8;transform:scaleX(0.9311);transform-origin:0 0;-webkit-text-stroke:0.25px #a8a8a8;">11:00</div>
<div class="ab" style="left:1327px;top:173px;width:2px;height:8px;background:#8c8c8c;"></div>
<div class="ab" style="left:1373px;top:177px;width:2px;height:4px;background:#8c8c8c;"></div>
<div class="t" style="left:1407.54px;top:161px;font-size:11.5px;line-height:13.22px;color:#a8a8a8;transform:scaleX(0.9034);transform-origin:0 0;-webkit-text-stroke:0.25px #a8a8a8;">12:00</div>
<div class="ab" style="left:1420px;top:173px;width:2px;height:8px;background:#8c8c8c;"></div>
<div class="ab" style="left:1466px;top:177px;width:2px;height:4px;background:#8c8c8c;"></div>
<div class="t" style="left:1499.96px;top:161px;font-size:11.5px;line-height:13.22px;color:#a8a8a8;transform:scaleX(0.9034);transform-origin:0 0;-webkit-text-stroke:0.25px #a8a8a8;">13:00</div>
<div class="ab" style="left:1512px;top:173px;width:2px;height:8px;background:#8c8c8c;"></div>
<div class="ab" style="left:1558px;top:177px;width:2px;height:4px;background:#8c8c8c;"></div>
<div class="ab" style="left:1559px;top:174px;width:2px;height:7px;background:#8c8c8c;"></div>
<div class="ab" style="left:1568px;top:157px;width:21px;height:21px;background:#181818;border:1px solid #2a2a2a;border-radius:2px"></div>
<svg style="left:1572px;top:161px" width="13" height="13"><path d="M2 12V6.5Q2 1.5 6.5 1.5Q11 1.5 11 6.5V12" fill="none" stroke="#2b8ff2" stroke-width="3"/><rect x="0.5" y="8" width="3.5" height="4.5" fill="#2b8ff2"/><rect x="9" y="8" width="3.5" height="4.5" fill="#2b8ff2"/></svg>
<svg style="left:1595px;top:161px" width="9" height="15"><path d="M0.5 0.5H8.5V4L6 6H3L0.5 4Z" fill="#9a9a9a"/><path d="M4.5 6V15" stroke="#9a9a9a" stroke-width="1.5"/></svg>
<div class="ab" style="left:311px;top:181px;width:1251px;height:672px;background:#000;"></div>
<svg style="left:0;top:0" width="1683" height="200">
<path d="M315 118.5V118.0h1V118.0h1V118.0h1V118.0h1V118.0h1V118.0h1V118.0h1V118.0h1V118.0h1V118.0h1V118.0h1V118.0h1V118.0h1V118.0h1V118.0h1V118.0h1V118.0h1V118.0h1V118.0h1V118.0h1V118.0h1V118.0h1V118.0h1V118.0h1V118.0h1V118.0h1V118.0h1V118.0h1V118.0h1V118.0h1V118.0h1V118.0h1V118.0h1V118.0h1V118.0h1V118.0h1V118.0h1V118.0h1V118.0h1V118.0h1V118.0h1V118.0h1V118.0h1V118.0h1V118.0h1V118.0h1V118.0h1V118.0h1V118.0h1V118.0h1V118.0h1V117.2h1V117.2h1V117.2h1V117.2h1V117.2h1V118.0h1V118.0h1V118.0h1V118.0h1V118.0h1V118.0h1V118.0h1V118.0h1V118.0h1V118.0h1V117.2h1V117.2h1V117.2h1V117.2h1V117.2h1V117.2h1V118.0h1V118.0h1V117.2h1V117.2h1V118.0h1V118.0h1V117.2h1V117.2h1V118.0h1V118.0h1V118.0h1V117.2h1V117.2h1V118.0h1V118.0h1V118.0h1V118.0h1V118.0h1V118.0h1V118.0h1V118.0h1V118.0h1V118.0h1V118.0h1V118.0h1V118.0h1V118.0h1V118.0h1V113.0h1V112.9h1V113.5h1V113.0h1V113.0h1V114.1h1V114.0h1V113.4h1V113.9h1V112.7h1V113.3h1V114.3h1V112.7h1V114.0h1V114.0h1V113.4h1V113.6h1V113.1h1V113.3h1V113.1h1V114.1h1V113.9h1V113.9h1V114.2h1V113.6h1V112.8h1V114.0h1V113.0h1V113.5h1V113.9h1V112.9h1V112.7h1V113.5h1V113.4h1V112.7h1V113.7h1V113.1h1V113.3h1V114.2h1V113.0h1V113.3h1V114.2h1V114.1h1V114.1h1V113.7h1V114.2h1V113.3h1V113.8h1V112.7h1V113.4h1V113.3h1V114.2h1V112.9h1V113.6h1V113.3h1V113.0h1V113.7h1V113.1h1V113.0h1V113.1h1V113.7h1V113.8h1V113.7h1V113.1h1V113.0h1V113.2h1V113.1h1V113.3h1V113.8h1V112.7h1V114.0h1V112.8h1V113.1h1V113.9h1V113.7h1V112.9h1V112.9h1V113.1h1V113.1h1V114.1h1V113.6h1V114.0h1V113.7h1V113.6h1V114.2h1V113.3h1V112.9h1V113.9h1V112.9h1V112.9h1V114.1h1V114.0h1V114.1h1V113.3h1V113.4h1V112.8h1V113.6h1V112.9h1V113.9h1V112.8h1V113.5h1V113.2h1V114.3h1V113.2h1V113.4h1V113.8h1V113.2h1V113.6h1V113.3h1V114.1h1V113.8h1V113.3h1V112.9h1V113.1h1V113.9h1V114.0h1V114.0h1V113.6h1V113.9h1V113.9h1V112.8h1V113.9h1V113.6h1V113.3h1V113.7h1V113.5h1V113.1h1V113.7h1V113.1h1V114.1h1V113.3h1V114.2h1V113.6h1V112.7h1V113.8h1V113.5h1V112.9h1V113.5h1V114.1h1V113.5h1V114.0h1V113.9h1V113.6h1V113.8h1V113.9h1V114.2h1V112.9h1V113.4h1V114.2h1V114.0h1V114.0h1V114.0h1V113.1h1V113.9h1V113.7h1V114.3h1V114.1h1V113.5h1V114.0h1V112.9h1V113.0h1V113.5h1V113.7h1V113.7h1V114.0h1V113.5h1V113.8h1V113.2h1V114.1h1V113.2h1V114.2h1V113.9h1V112.9h1V113.2h1V114.2h1V114.0h1V113.1h1V112.9h1V113.5h1V112.8h1V113.3h1V114.2h1V114.3h1V114.3h1V113.0h1V113.2h1V113.1h1V114.0h1V113.4h1V114.1h1V113.2h1V113.2h1V113.4h1V114.3h1V113.5h1V114.0h1V114.1h1V113.6h1V112.8h1V113.3h1V114.2h1V114.2h1V113.7h1V112.7h1V114.0h1V114.1h1V113.9h1V113.8h1V114.1h1V113.4h1V113.5h1V113.7h1V113.1h1V113.0h1V113.0h1V114.2h1V114.1h1V113.7h1V113.8h1V113.7h1V113.2h1V114.1h1V113.1h1V114.1h1V114.2h1V113.6h1V113.9h1V114.3h1V113.5h1V113.2h1V114.0h1V114.0h1V113.0h1V114.2h1V113.4h1V113.5h1V113.1h1V113.6h1V113.2h1V113.2h1V113.6h1V113.0h1V112.9h1V112.9h1V113.9h1V113.8h1V113.5h1V112.8h1V113.8h1V113.8h1V113.6h1V113.8h1V113.0h1V112.9h1V114.3h1V114.1h1V113.8h1V113.5h1V113.4h1V113.6h1V113.9h1V113.6h1V112.7h1V113.5h1V113.3h1V113.8h1V113.8h1V114.0h1V114.2h1V112.9h1V113.4h1V113.8h1V113.2h1V113.4h1V114.1h1V113.8h1V113.6h1V113.6h1V114.0h1V112.8h1V113.5h1V112.8h1V112.8h1V114.1h1V113.3h1V112.8h1V114.0h1V114.1h1V114.2h1V112.9h1V113.5h1V113.2h1V113.2h1V112.9h1V114.2h1V114.2h1V113.7h1V114.2h1V112.9h1V113.5h1V113.2h1V113.7h1V112.7h1V113.5h1V113.4h1V114.1h1V113.0h1V112.8h1V113.8h1V113.5h1V113.0h1V114.0h1V113.3h1V113.6h1V112.8h1V113.9h1V112.9h1V112.8h1V113.6h1V114.1h1V112.9h1V113.6h1V114.1h1V114.2h1V113.8h1V113.6h1V114.2h1V113.8h1V113.3h1V114.1h1V113.5h1V114.0h1V113.6h1V113.4h1V113.1h1V113.8h1V113.9h1V114.2h1V112.9h1V113.9h1V112.9h1V113.6h1V114.0h1V112.8h1V113.9h1V114.0h1V114.1h1V113.7h1V114.1h1V113.4h1V113.9h1V113.5h1V113.7h1V113.5h1V114.1h1V113.0h1V113.2h1V113.8h1V114.0h1V114.1h1V114.2h1V113.5h1V114.0h1V113.0h1V113.5h1V112.9h1V114.1h1V113.2h1V113.9h1V113.9h1V113.3h1V113.2h1V114.3h1V113.0h1V113.6h1V113.9h1V113.6h1V114.3h1V112.9h1V112.8h1V113.5h1V114.3h1V114.1h1V113.8h1V113.2h1V114.0h1V112.9h1V113.5h1V113.5h1V113.3h1V113.9h1V113.6h1V112.8h1V113.4h1V113.8h1V114.3h1V113.6h1V113.1h1V114.3h1V113.7h1V113.1h1V112.9h1V113.4h1V112.8h1V113.4h1V114.2h1V113.1h1V113.8h1V113.2h1V113.2h1V113.3h1V112.8h1V114.2h1V113.9h1V113.6h1V113.1h1V112.8h1V113.2h1V113.7h1V112.8h1V114.3h1V113.0h1V114.1h1V114.0h1V114.2h1V113.6h1V113.2h1V113.7h1V114.0h1V113.7h1V113.4h1V113.5h1V114.3h1V113.1h1V112.9h1V114.0h1V113.4h1V112.9h1V114.0h1V113.7h1V113.6h1V114.2h1V113.9h1V112.9h1V114.1h1V113.0h1V112.9h1V113.6h1V113.1h1V114.1h1V113.2h1V113.2h1V112.7h1V113.3h1V112.9h1V113.1h1V113.1h1V112.9h1V114.0h1V113.7h1V113.2h1V113.7h1V114.2h1V113.6h1V112.8h1V113.8h1V112.9h1V114.0h1V113.1h1V113.1h1V114.2h1V112.8h1V112.9h1V114.1h1V113.2h1V113.4h1V113.4h1V113.6h1V114.0h1V113.4h1V113.8h1V113.7h1V113.3h1V113.1h1V113.7h1V113.9h1V114.1h1V114.0h1V114.2h1V113.5h1V113.0h1V113.7h1V112.8h1V113.8h1V113.6h1V113.6h1V113.2h1V112.9h1V112.9h1V114.2h1V113.4h1V114.2h1V113.2h1V113.0h1V113.0h1V113.4h1V112.8h1V114.0h1V114.2h1V114.2h1V112.8h1V114.3h1V112.9h1V113.2h1V112.7h1V113.6h1V112.7h1V113.9h1V113.3h1V114.1h1V113.8h1V114.0h1V112.8h1V114.2h1V113.8h1V112.7h1V113.7h1V113.3h1V113.6h1V113.9h1V112.8h1V113.1h1V114.2h1V113.4h1V113.0h1V114.2h1V112.9h1V113.7h1V113.2h1V114.1h1V113.8h1V113.4h1V113.5h1V113.3h1V113.6h1V113.5h1V114.1h1V113.9h1V113.9h1V114.0h1V113.8h1V113.6h1V114.1h1V112.9h1V113.5h1V114.0h1V114.2h1V113.4h1V113.5h1V114.2h1V113.8h1V112.9h1V114.2h1V114.2h1V114.0h1V113.5h1V114.0h1V112.9h1V113.9h1V113.3h1V112.9h1V113.3h1V114.2h1V112.9h1V113.9h1V113.4h1V113.8h1V114.2h1V113.9h1V113.8h1V114.1h1V113.8h1V114.1h1V113.8h1V113.2h1V113.1h1V114.0h1V113.4h1V113.6h1V114.2h1V113.1h1V113.1h1V113.8h1V114.2h1V113.4h1V113.7h1V113.6h1V113.3h1V114.2h1V113.6h1V112.9h1V113.9h1V114.0h1V113.7h1V114.2h1V113.7h1V112.8h1V113.0h1V113.9h1V113.2h1V113.2h1V113.4h1V113.0h1V113.3h1V112.7h1V113.2h1V112.8h1V114.2h1V113.1h1V113.3h1V112.7h1V113.7h1V113.5h1V113.6h1V114.2h1V113.7h1V112.8h1V113.1h1V114.2h1V113.0h1V114.1h1V113.9h1V113.2h1V113.6h1V113.6h1V114.3h1V112.8h1V113.6h1V114.0h1V113.0h1V113.1h1V114.1h1V114.1h1V113.1h1V113.1h1V113.0h1V113.4h1V113.0h1V113.8h1V112.8h1V113.8h1V113.7h1V113.5h1V114.0h1V112.8h1V113.9h1V114.1h1V114.3h1V113.7h1V114.2h1V113.4h1V112.9h1V114.0h1V113.4h1V113.4h1V113.6h1V113.9h1V113.7h1V113.1h1V112.8h1V112.8h1V112.9h1V113.6h1V113.5h1V114.1h1V113.3h1V113.2h1V114.1h1V112.8h1V113.4h1V113.7h1V113.0h1V114.0h1V114.0h1V112.9h1V112.7h1V112.7h1V113.1h1V114.1h1V113.0h1V113.2h1V113.0h1V113.7h1V113.7h1V113.3h1V113.4h1V112.8h1V114.1h1V113.2h1V113.4h1V113.1h1V113.7h1V113.7h1V114.2h1V114.2h1V113.8h1V112.7h1V113.1h1V112.8h1V112.8h1V113.7h1V113.1h1V113.1h1V113.9h1V113.1h1V113.8h1V114.0h1V113.6h1V112.9h1V113.4h1V112.7h1V114.3h1V113.9h1V113.6h1V113.4h1V113.3h1V113.2h1V114.3h1V114.2h1V114.3h1V113.2h1V112.7h1V113.9h1V114.0h1V112.8h1V112.7h1V113.4h1V114.3h1V113.7h1V114.1h1V112.9h1V113.9h1V113.5h1V113.6h1V113.5h1V113.3h1V113.4h1V112.8h1V112.8h1V114.0h1V112.8h1V114.2h1V113.1h1V113.7h1V114.3h1V112.7h1V113.4h1V114.0h1V113.6h1V114.2h1V114.0h1V114.2h1V113.6h1V112.7h1V113.9h1V114.2h1V113.9h1V114.1h1V113.7h1V113.6h1V113.7h1V112.9h1V112.8h1V113.4h1V114.1h1V113.6h1V113.3h1V113.9h1V114.2h1V113.5h1V113.8h1V114.0h1V114.2h1V113.9h1V113.6h1V113.8h1V114.0h1V114.2h1V114.0h1V112.7h1V113.9h1V113.6h1V113.8h1V114.3h1V113.3h1V112.7h1V113.5h1V113.3h1V113.0h1V113.5h1V113.5h1V113.0h1V112.8h1V113.2h1V113.6h1V112.9h1V113.9h1V113.7h1V114.1h1V114.2h1V114.2h1V112.9h1V112.8h1V113.9h1V113.9h1V113.3h1V113.3h1V113.7h1V113.3h1V113.3h1V113.4h1V114.0h1V114.0h1V114.0h1V112.8h1V113.2h1V113.5h1V113.0h1V113.0h1V112.8h1V113.5h1V113.2h1V114.1h1V113.4h1V113.4h1V114.3h1V113.2h1V112.9h1V114.2h1V113.1h1V114.1h1V114.2h1V113.5h1V113.7h1V113.1h1V114.0h1V113.1h1V113.4h1V113.9h1V113.2h1V113.6h1V114.2h1V113.2h1V113.4h1V112.9h1V113.6h1V112.9h1V113.8h1V112.9h1V114.2h1V112.9h1V113.3h1V113.0h1V112.7h1V114.3h1V113.8h1V113.6h1V113.1h1V113.0h1V114.2h1V113.6h1V112.8h1V114.0h1V113.6h1V113.4h1V113.4h1V113.8h1V113.8h1V113.4h1V113.7h1V113.5h1V113.0h1V113.9h1V114.2h1V113.0h1V112.9h1V114.3h1V113.3h1V113.4h1V113.6h1V113.3h1V113.3h1V113.8h1V113.6h1V114.1h1V112.8h1V113.2h1V113.7h1V113.0h1V112.8h1V114.1h1V113.6h1V114.0h1V113.3h1V113.7h1V114.0h1V113.2h1V112.9h1V113.9h1V114.2h1V113.4h1V113.4h1V113.9h1V113.2h1V114.1h1V113.1h1V113.2h1V114.0h1V113.7h1V113.9h1V113.8h1V113.4h1V113.7h1V113.5h1V112.9h1V113.1h1V113.8h1V113.9h1V113.4h1V118.5V123.7h-1V122.8h-1V122.8h-1V124.4h-1V124.0h-1V123.6h-1V123.5h-1V123.9h-1V123.0h-1V123.2h-1V123.5h-1V122.9h-1V124.0h-1V123.9h-1V122.6h-1V123.7h-1V122.8h-1V124.1h-1V123.5h-1V122.4h-1V122.9h-1V123.9h-1V123.5h-1V123.1h-1V123.1h-1V123.2h-1V123.0h-1V123.9h-1V122.7h-1V124.5h-1V124.3h-1V122.9h-1V123.5h-1V124.4h-1V122.4h-1V123.7h-1V122.7h-1V123.4h-1V123.7h-1V123.3h-1V123.4h-1V123.7h-1V122.8h-1V124.0h-1V124.4h-1V122.5h-1V123.3h-1V123.5h-1V123.6h-1V122.8h-1V124.1h-1V123.7h-1V122.9h-1V123.8h-1V123.8h-1V123.8h-1V123.0h-1V123.8h-1V123.2h-1V123.2h-1V124.5h-1V123.8h-1V123.1h-1V122.7h-1V122.7h-1V123.9h-1V124.0h-1V123.7h-1V124.4h-1V122.3h-1V124.0h-1V123.4h-1V123.8h-1V123.5h-1V123.9h-1V123.5h-1V124.0h-1V123.2h-1V123.3h-1V123.9h-1V123.5h-1V123.9h-1V124.2h-1V122.6h-1V124.1h-1V123.0h-1V123.0h-1V122.9h-1V122.8h-1V124.3h-1V123.2h-1V124.1h-1V123.3h-1V122.8h-1V123.4h-1V123.4h-1V123.3h-1V123.8h-1V123.7h-1V124.5h-1V123.7h-1V123.7h-1V123.3h-1V123.7h-1V123.9h-1V122.9h-1V123.0h-1V122.6h-1V124.0h-1V123.2h-1V123.6h-1V123.4h-1V123.8h-1V123.4h-1V122.7h-1V123.4h-1V124.5h-1V124.0h-1V122.9h-1V122.7h-1V122.5h-1V123.7h-1V122.6h-1V123.7h-1V123.4h-1V123.4h-1V124.1h-1V124.3h-1V123.1h-1V123.8h-1V124.3h-1V123.9h-1V123.1h-1V123.8h-1V124.2h-1V122.3h-1V122.7h-1V123.9h-1V122.8h-1V123.8h-1V123.3h-1V122.5h-1V123.2h-1V123.6h-1V123.2h-1V123.6h-1V122.9h-1V122.9h-1V123.0h-1V123.3h-1V122.9h-1V122.9h-1V124.0h-1V123.7h-1V122.9h-1V123.7h-1V124.5h-1V124.2h-1V123.4h-1V123.8h-1V123.2h-1V122.8h-1V123.5h-1V122.3h-1V123.4h-1V123.9h-1V123.5h-1V122.4h-1V123.0h-1V122.8h-1V123.4h-1V122.7h-1V123.5h-1V124.7h-1V122.3h-1V123.2h-1V123.4h-1V122.5h-1V123.7h-1V122.8h-1V124.1h-1V124.5h-1V123.8h-1V124.1h-1V123.9h-1V123.6h-1V123.3h-1V123.5h-1V124.1h-1V123.0h-1V122.8h-1V122.7h-1V123.6h-1V124.3h-1V124.2h-1V123.4h-1V122.7h-1V124.4h-1V123.6h-1V123.1h-1V122.9h-1V122.3h-1V124.0h-1V124.0h-1V123.2h-1V123.6h-1V122.7h-1V122.2h-1V124.7h-1V123.4h-1V124.5h-1V122.9h-1V123.4h-1V123.0h-1V124.1h-1V123.4h-1V123.9h-1V124.1h-1V122.9h-1V123.8h-1V124.0h-1V123.9h-1V124.4h-1V123.0h-1V122.6h-1V123.0h-1V123.6h-1V123.8h-1V123.7h-1V123.4h-1V124.2h-1V123.2h-1V124.3h-1V123.6h-1V123.6h-1V123.4h-1V122.9h-1V123.6h-1V123.7h-1V124.2h-1V123.2h-1V123.4h-1V123.8h-1V124.6h-1V124.1h-1V122.7h-1V122.7h-1V123.7h-1V123.6h-1V123.2h-1V124.7h-1V122.5h-1V123.5h-1V123.6h-1V122.5h-1V124.0h-1V123.9h-1V123.8h-1V124.3h-1V124.6h-1V124.2h-1V123.8h-1V123.2h-1V123.1h-1V123.3h-1V123.6h-1V122.7h-1V123.9h-1V123.6h-1V122.5h-1V123.6h-1V122.9h-1V123.2h-1V122.8h-1V123.9h-1V123.3h-1V123.2h-1V123.3h-1V123.3h-1V124.4h-1V122.8h-1V123.9h-1V123.4h-1V124.0h-1V123.4h-1V123.5h-1V123.3h-1V122.7h-1V124.2h-1V124.0h-1V122.6h-1V123.6h-1V124.4h-1V123.0h-1V123.7h-1V123.0h-1V123.8h-1V123.3h-1V123.0h-1V123.9h-1V123.1h-1V124.0h-1V124.5h-1V123.0h-1V122.4h-1V123.9h-1V123.6h-1V123.4h-1V124.0h-1V124.2h-1V123.5h-1V122.6h-1V124.3h-1V124.1h-1V123.9h-1V124.0h-1V124.2h-1V123.4h-1V124.0h-1V124.2h-1V122.6h-1V124.2h-1V124.3h-1V123.8h-1V122.5h-1V123.3h-1V123.1h-1V123.5h-1V123.6h-1V123.5h-1V122.7h-1V123.9h-1V123.5h-1V123.7h-1V123.2h-1V122.9h-1V123.2h-1V124.0h-1V124.2h-1V122.5h-1V123.6h-1V123.8h-1V123.1h-1V124.3h-1V124.1h-1V123.3h-1V122.7h-1V123.6h-1V123.1h-1V123.0h-1V123.4h-1V122.5h-1V123.5h-1V123.8h-1V122.7h-1V123.9h-1V123.0h-1V123.2h-1V124.0h-1V123.8h-1V123.4h-1V123.9h-1V122.5h-1V123.2h-1V122.6h-1V123.1h-1V122.4h-1V124.3h-1V123.2h-1V122.3h-1V123.2h-1V123.5h-1V122.8h-1V122.6h-1V123.7h-1V123.9h-1V123.1h-1V123.3h-1V123.2h-1V122.6h-1V122.9h-1V122.7h-1V122.8h-1V124.0h-1V123.0h-1V123.7h-1V123.2h-1V124.0h-1V122.9h-1V123.2h-1V123.4h-1V122.9h-1V124.2h-1V123.1h-1V124.2h-1V123.6h-1V122.4h-1V123.9h-1V124.1h-1V123.3h-1V123.7h-1V123.8h-1V123.0h-1V124.2h-1V123.0h-1V122.5h-1V124.3h-1V123.1h-1V123.2h-1V123.4h-1V124.0h-1V123.5h-1V124.1h-1V123.0h-1V124.7h-1V124.2h-1V123.8h-1V122.9h-1V123.9h-1V122.5h-1V122.8h-1V122.7h-1V124.6h-1V123.5h-1V124.2h-1V123.7h-1V123.7h-1V123.2h-1V123.4h-1V122.4h-1V124.2h-1V124.6h-1V124.1h-1V123.5h-1V123.6h-1V123.4h-1V124.4h-1V122.9h-1V123.8h-1V123.2h-1V123.0h-1V123.5h-1V123.2h-1V122.9h-1V123.1h-1V123.9h-1V123.3h-1V122.9h-1V123.3h-1V124.0h-1V122.7h-1V122.9h-1V123.4h-1V123.4h-1V123.8h-1V122.7h-1V124.6h-1V124.2h-1V122.3h-1V124.0h-1V124.2h-1V123.0h-1V123.8h-1V123.7h-1V124.3h-1V122.9h-1V123.0h-1V122.9h-1V123.3h-1V123.1h-1V123.1h-1V124.4h-1V124.0h-1V124.0h-1V124.6h-1V123.3h-1V124.2h-1V124.2h-1V124.3h-1V123.1h-1V123.7h-1V123.2h-1V123.8h-1V123.6h-1V122.5h-1V124.0h-1V123.2h-1V123.0h-1V123.6h-1V123.7h-1V123.0h-1V124.1h-1V123.6h-1V123.4h-1V124.5h-1V124.2h-1V122.5h-1V123.4h-1V123.4h-1V123.1h-1V122.7h-1V123.3h-1V124.2h-1V123.5h-1V122.8h-1V122.6h-1V122.9h-1V123.6h-1V122.8h-1V123.8h-1V123.0h-1V124.2h-1V124.1h-1V123.8h-1V123.7h-1V122.9h-1V122.7h-1V123.8h-1V123.8h-1V123.5h-1V124.2h-1V123.6h-1V124.4h-1V122.8h-1V123.2h-1V124.4h-1V123.5h-1V124.3h-1V123.9h-1V122.9h-1V122.3h-1V123.4h-1V123.9h-1V122.5h-1V123.3h-1V123.9h-1V124.6h-1V123.0h-1V123.5h-1V124.1h-1V123.9h-1V123.9h-1V123.7h-1V122.9h-1V123.4h-1V123.7h-1V123.1h-1V123.1h-1V123.4h-1V124.5h-1V124.4h-1V122.9h-1V123.2h-1V122.8h-1V123.8h-1V123.7h-1V123.0h-1V124.1h-1V123.3h-1V123.4h-1V123.1h-1V123.8h-1V122.6h-1V123.6h-1V123.5h-1V123.9h-1V122.8h-1V123.2h-1V123.3h-1V122.9h-1V123.2h-1V123.0h-1V123.6h-1V123.6h-1V122.6h-1V123.5h-1V123.4h-1V124.0h-1V123.6h-1V124.1h-1V122.5h-1V123.6h-1V122.7h-1V123.4h-1V122.8h-1V124.2h-1V122.8h-1V123.1h-1V123.9h-1V123.5h-1V124.4h-1V123.2h-1V122.7h-1V123.1h-1V123.6h-1V123.5h-1V123.2h-1V123.3h-1V123.7h-1V123.0h-1V123.4h-1V122.9h-1V122.7h-1V123.9h-1V123.2h-1V123.1h-1V123.4h-1V123.2h-1V124.2h-1V123.2h-1V122.9h-1V123.8h-1V123.6h-1V122.9h-1V124.6h-1V123.4h-1V124.0h-1V123.2h-1V124.4h-1V123.6h-1V123.5h-1V124.5h-1V124.2h-1V122.7h-1V123.2h-1V123.6h-1V123.9h-1V123.0h-1V123.4h-1V123.8h-1V123.7h-1V123.0h-1V123.2h-1V122.4h-1V122.4h-1V123.9h-1V123.9h-1V123.6h-1V123.1h-1V123.9h-1V122.3h-1V122.6h-1V123.4h-1V124.0h-1V123.7h-1V122.6h-1V123.8h-1V124.2h-1V123.0h-1V123.9h-1V123.2h-1V123.6h-1V123.8h-1V123.3h-1V122.9h-1V123.5h-1V123.3h-1V122.7h-1V123.2h-1V124.5h-1V123.2h-1V122.6h-1V123.2h-1V123.6h-1V123.8h-1V123.6h-1V123.9h-1V123.1h-1V123.4h-1V122.9h-1V123.7h-1V123.8h-1V123.1h-1V122.6h-1V122.5h-1V123.7h-1V124.1h-1V122.9h-1V123.7h-1V123.3h-1V123.1h-1V124.5h-1V123.1h-1V123.2h-1V123.3h-1V124.3h-1V123.6h-1V123.8h-1V123.3h-1V124.2h-1V124.2h-1V123.6h-1V123.5h-1V123.5h-1V123.5h-1V122.4h-1V123.6h-1V123.0h-1V123.0h-1V123.4h-1V123.2h-1V122.4h-1V123.2h-1V123.5h-1V122.7h-1V122.7h-1V123.7h-1V123.0h-1V124.0h-1V123.5h-1V122.8h-1V123.3h-1V123.3h-1V122.6h-1V124.4h-1V124.0h-1V123.4h-1V123.7h-1V123.7h-1V123.5h-1V123.4h-1V122.8h-1V122.9h-1V123.0h-1V123.5h-1V124.1h-1V122.9h-1V123.1h-1V122.6h-1V123.9h-1V124.0h-1V123.4h-1V122.8h-1V123.5h-1V123.0h-1V122.3h-1V123.9h-1V123.7h-1V123.3h-1V122.7h-1V123.3h-1V122.6h-1V123.4h-1V124.0h-1V124.1h-1V123.1h-1V122.4h-1V122.8h-1V123.6h-1V124.1h-1V123.5h-1V124.3h-1V123.9h-1V123.3h-1V123.0h-1V123.5h-1V124.0h-1V123.2h-1V122.8h-1V123.8h-1V122.4h-1V124.2h-1V123.0h-1V123.7h-1V123.5h-1V123.5h-1V123.2h-1V123.6h-1V123.6h-1V124.2h-1V122.9h-1V123.0h-1V122.8h-1V122.7h-1V123.6h-1V123.5h-1V123.9h-1V123.4h-1V123.3h-1V122.7h-1V122.8h-1V123.7h-1V124.2h-1V122.9h-1V122.9h-1V122.9h-1V123.1h-1V123.2h-1V122.6h-1V123.7h-1V123.3h-1V123.6h-1V124.3h-1V123.2h-1V123.1h-1V124.5h-1V123.8h-1V123.3h-1V123.6h-1V123.4h-1V123.5h-1V123.7h-1V123.7h-1V123.6h-1V123.6h-1V123.7h-1V123.6h-1V122.8h-1V124.5h-1V122.6h-1V122.7h-1V123.0h-1V123.5h-1V123.1h-1V122.8h-1V124.2h-1V123.6h-1V123.7h-1V123.6h-1V122.7h-1V123.5h-1V123.8h-1V123.6h-1V123.3h-1V123.6h-1V123.3h-1V122.5h-1V123.4h-1V124.0h-1V124.4h-1V122.9h-1V123.9h-1V123.7h-1V124.1h-1V123.5h-1V123.3h-1V123.0h-1V123.4h-1V122.8h-1V123.9h-1V124.3h-1V122.8h-1V124.2h-1V123.6h-1V122.5h-1V123.5h-1V123.6h-1V123.4h-1V123.6h-1V123.2h-1V123.7h-1V123.6h-1V124.1h-1V123.7h-1V123.4h-1V122.9h-1V123.5h-1V124.6h-1V123.2h-1V124.5h-1V123.2h-1V123.7h-1V124.2h-1V123.3h-1V124.2h-1V123.7h-1V123.1h-1V122.8h-1V123.6h-1V123.7h-1V124.0h-1V124.3h-1V122.8h-1V123.9h-1V123.5h-1V123.3h-1V124.0h-1V122.7h-1V123.4h-1V124.1h-1V124.6h-1V123.1h-1V123.3h-1V123.2h-1V123.3h-1V123.2h-1V122.8h-1V123.1h-1V123.5h-1V124.4h-1V122.7h-1V124.1h-1V123.5h-1V123.1h-1V123.8h-1V124.0h-1V123.8h-1V123.8h-1V124.5h-1V123.2h-1V123.3h-1V123.7h-1V122.7h-1V124.2h-1V123.0h-1V123.0h-1V123.1h-1V123.4h-1V123.2h-1V123.6h-1V123.7h-1V123.5h-1V123.6h-1V124.0h-1V123.3h-1V123.2h-1V124.3h-1V122.4h-1V123.3h-1V124.0h-1V123.5h-1V123.8h-1V122.8h-1V123.4h-1V124.3h-1V123.8h-1V123.1h-1V124.2h-1V123.5h-1V119.0h-1V119.0h-1V119.0h-1V119.0h-1V119.0h-1V119.0h-1V119.0h-1V119.0h-1V119.0h-1V119.0h-1V119.0h-1V119.0h-1V119.0h-1V119.0h-1V119.0h-1V119.8h-1V119.8h-1V119.0h-1V119.0h-1V119.0h-1V119.8h-1V119.8h-1V119.0h-1V119.0h-1V119.8h-1V119.8h-1V119.0h-1V119.0h-1V119.8h-1V119.8h-1V119.8h-1V119.8h-1V119.8h-1V119.8h-1V119.0h-1V119.0h-1V119.0h-1V119.0h-1V119.0h-1V119.0h-1V119.0h-1V119.0h-1V119.0h-1V119.0h-1V119.8h-1V119.8h-1V119.8h-1V119.8h-1V119.8h-1V119.0h-1V119.0h-1V119.0h-1V119.0h-1V119.0h-1V119.0h-1V119.0h-1V119.0h-1V119.0h-1V119.0h-1V119.0h-1V119.0h-1V119.0h-1V119.0h-1V119.0h-1V119.0h-1V119.0h-1V119.0h-1V119.0h-1V119.0h-1V119.0h-1V119.0h-1V119.0h-1V119.0h-1V119.0h-1V119.0h-1V119.0h-1V119.0h-1V119.0h-1V119.0h-1V119.0h-1V119.0h-1V119.0h-1V119.0h-1V119.0h-1V119.0h-1V119.0h-1V119.0h-1V119.0h-1V119.0h-1V119.0h-1V119.0h-1V119.0h-1V119.0h-1V119.0h-1V119.0h-1V119.0h-1V119.0h-1V119.0h-1V119.0h-1V119.0h-1Z" fill="#6cf0b4"/>
<path d="M1350 118.5V113.8h1V113.0h1V113.1h1V113.9h1V113.3h1V114.2h1V113.0h1V113.4h1V113.3h1V113.3h1V113.9h1V113.0h1V112.7h1V112.7h1V114.1h1V114.2h1V113.3h1V114.3h1V113.1h1V113.9h1V113.6h1V113.2h1V113.8h1V113.5h1V114.0h1V113.8h1V113.3h1V113.2h1V113.9h1V113.8h1V113.1h1V112.7h1V114.0h1V114.2h1V113.9h1V113.0h1V113.0h1V113.1h1V113.3h1V113.9h1V112.9h1V114.2h1V112.9h1V113.6h1V113.0h1V113.0h1V114.0h1V113.5h1V114.2h1V112.9h1V113.5h1V114.2h1V114.1h1V113.3h1V113.3h1V114.1h1V113.4h1V113.6h1V113.2h1V113.3h1V113.4h1V113.0h1V112.8h1V114.0h1V113.7h1V114.3h1V113.1h1V113.1h1V114.2h1V114.0h1V113.2h1V114.2h1V112.7h1V113.9h1V112.8h1V113.9h1V113.2h1V112.8h1V113.0h1V113.4h1V112.8h1V114.0h1V112.7h1V113.8h1V113.3h1V113.4h1V114.2h1V114.1h1V113.1h1V113.4h1V113.6h1V112.8h1V113.5h1V113.9h1V113.5h1V113.3h1V113.2h1V113.9h1V114.3h1V114.0h1V113.7h1V113.6h1V113.1h1V114.2h1V112.9h1V113.3h1V113.8h1V113.4h1V113.1h1V113.7h1V112.8h1V113.9h1V113.4h1V113.6h1V113.9h1V114.2h1V113.2h1V113.1h1V114.0h1V113.7h1V113.0h1V113.5h1V113.9h1V113.1h1V114.3h1V113.9h1V113.5h1V113.8h1V113.6h1V113.2h1V113.5h1V114.3h1V113.5h1V113.5h1V113.5h1V113.8h1V113.5h1V114.3h1V112.9h1V113.2h1V114.1h1V113.0h1V113.3h1V114.1h1V113.1h1V113.0h1V113.7h1V112.8h1V113.4h1V113.3h1V113.8h1V113.3h1V113.2h1V113.9h1V114.3h1V113.2h1V113.8h1V113.8h1V112.9h1V113.6h1V113.1h1V114.3h1V113.5h1V114.2h1V113.0h1V113.1h1V113.5h1V112.8h1V113.7h1V113.3h1V114.0h1V112.9h1V113.4h1V113.9h1V113.9h1V114.0h1V114.5h1V114.3h1V114.6h1V114.9h1V115.2h1V115.3h1V115.5h1V115.4h1V115.9h1V116.1h1V115.8h1V116.3h1V116.3h1V116.4h1V116.4h1V116.8h1V116.9h1V117.3h1V117.5h1V117.8h1V117.8h1V117.7h1V117.8h1V117.6h1V118.0h1V117.7h1V117.6h1V117.6h1V118.1h1V117.9h1V117.9h1V117.9h1V118.0h1V117.6h1V118.0h1V118.5V118.8h-1V119.0h-1V119.0h-1V119.5h-1V119.1h-1V118.8h-1V119.1h-1V119.5h-1V119.1h-1V119.0h-1V118.8h-1V119.7h-1V119.1h-1V118.9h-1V118.8h-1V118.8h-1V119.4h-1V119.4h-1V119.6h-1V119.8h-1V120.2h-1V120.5h-1V120.4h-1V120.3h-1V121.1h-1V120.8h-1V120.6h-1V121.8h-1V121.6h-1V121.6h-1V121.7h-1V122.0h-1V122.0h-1V122.9h-1V122.6h-1V122.8h-1V123.0h-1V122.9h-1V123.5h-1V124.2h-1V123.4h-1V123.6h-1V123.1h-1V123.7h-1V123.7h-1V123.5h-1V124.3h-1V122.8h-1V123.2h-1V123.1h-1V124.2h-1V123.3h-1V124.2h-1V123.5h-1V123.1h-1V123.5h-1V123.1h-1V123.1h-1V124.0h-1V123.6h-1V123.6h-1V123.6h-1V123.7h-1V124.1h-1V123.0h-1V124.4h-1V124.0h-1V122.6h-1V123.5h-1V124.0h-1V122.8h-1V124.0h-1V123.9h-1V123.1h-1V123.1h-1V123.6h-1V123.4h-1V123.1h-1V123.5h-1V122.9h-1V123.3h-1V123.8h-1V123.1h-1V123.0h-1V123.4h-1V122.7h-1V122.2h-1V123.7h-1V122.6h-1V123.6h-1V123.6h-1V123.2h-1V122.8h-1V123.5h-1V123.7h-1V123.0h-1V122.7h-1V123.0h-1V123.1h-1V122.8h-1V123.8h-1V123.6h-1V124.3h-1V123.7h-1V122.8h-1V123.5h-1V123.7h-1V122.9h-1V123.8h-1V123.6h-1V123.2h-1V123.4h-1V122.7h-1V123.4h-1V124.2h-1V123.4h-1V123.2h-1V123.6h-1V123.0h-1V124.4h-1V122.9h-1V123.9h-1V124.0h-1V122.5h-1V123.1h-1V123.6h-1V123.4h-1V123.2h-1V124.6h-1V123.3h-1V124.2h-1V123.7h-1V123.7h-1V124.6h-1V124.2h-1V122.6h-1V124.4h-1V123.2h-1V124.2h-1V122.5h-1V124.1h-1V123.1h-1V123.1h-1V123.6h-1V124.4h-1V122.7h-1V123.4h-1V122.6h-1V124.2h-1V124.4h-1V123.4h-1V123.3h-1V124.0h-1V123.2h-1V124.0h-1V123.0h-1V124.1h-1V123.2h-1V122.5h-1V123.2h-1V123.0h-1V124.3h-1V122.6h-1V123.5h-1V122.8h-1V124.0h-1V124.1h-1V123.0h-1V124.0h-1V122.5h-1V124.1h-1V122.8h-1V123.6h-1V123.9h-1V124.5h-1V124.2h-1V122.7h-1V123.2h-1V123.3h-1V123.8h-1V124.1h-1V122.9h-1V123.3h-1V123.6h-1V123.9h-1V122.7h-1V123.2h-1V123.0h-1V123.1h-1V123.9h-1V123.4h-1V123.5h-1V123.5h-1V122.4h-1V123.9h-1V122.5h-1V122.6h-1V123.9h-1V124.3h-1V124.3h-1V123.2h-1V124.0h-1V123.4h-1V123.9h-1V123.6h-1V122.9h-1V124.0h-1V123.4h-1V124.2h-1V123.6h-1V123.1h-1Z" fill="#4fe3a1"/>
<path d="M315 132.5V131.9h1V131.9h1V131.9h1V131.9h1V131.9h1V131.9h1V131.9h1V131.9h1V131.9h1V131.9h1V131.9h1V131.9h1V131.9h1V131.9h1V131.9h1V131.9h1V131.9h1V131.9h1V131.9h1V131.9h1V131.9h1V131.9h1V131.9h1V131.9h1V131.9h1V131.9h1V131.9h1V131.9h1V131.9h1V131.9h1V131.9h1V131.9h1V131.9h1V131.9h1V131.9h1V131.9h1V131.9h1V131.9h1V131.9h1V131.9h1V131.9h1V131.9h1V131.9h1V131.9h1V131.9h1V131.9h1V131.9h1V131.9h1V131.9h1V131.9h1V131.9h1V131.2h1V131.2h1V131.2h1V131.2h1V131.2h1V131.9h1V131.9h1V131.9h1V131.9h1V131.9h1V131.9h1V131.9h1V131.9h1V131.9h1V131.9h1V131.2h1V131.2h1V131.2h1V131.2h1V131.2h1V131.2h1V131.9h1V131.9h1V131.2h1V131.2h1V131.9h1V131.9h1V131.2h1V131.2h1V131.9h1V131.9h1V131.9h1V131.2h1V131.2h1V131.9h1V131.9h1V131.9h1V131.9h1V131.9h1V131.9h1V131.9h1V131.9h1V131.9h1V131.9h1V131.9h1V131.9h1V131.9h1V131.9h1V131.9h1V126.9h1V128.0h1V128.2h1V128.0h1V126.9h1V127.1h1V127.5h1V126.9h1V127.2h1V127.4h1V127.9h1V127.4h1V126.8h1V127.0h1V128.2h1V127.7h1V127.0h1V127.6h1V127.8h1V127.2h1V128.0h1V126.7h1V128.0h1V126.7h1V128.0h1V127.8h1V128.1h1V127.4h1V128.3h1V128.2h1V127.1h1V127.9h1V127.3h1V127.8h1V127.3h1V126.8h1V127.6h1V127.1h1V126.9h1V126.9h1V126.9h1V127.9h1V127.1h1V127.7h1V128.3h1V127.5h1V127.8h1V127.7h1V128.1h1V127.7h1V128.1h1V127.4h1V127.4h1V127.3h1V127.5h1V127.2h1V126.8h1V127.3h1V128.1h1V126.9h1V127.1h1V127.9h1V127.6h1V128.0h1V127.7h1V127.6h1V127.5h1V127.7h1V127.8h1V127.5h1V127.6h1V128.2h1V127.8h1V127.7h1V127.7h1V128.3h1V126.8h1V127.0h1V127.1h1V127.9h1V128.0h1V128.2h1V128.0h1V126.8h1V127.7h1V128.0h1V126.8h1V126.8h1V127.5h1V127.0h1V127.4h1V128.3h1V127.2h1V128.0h1V127.6h1V128.2h1V126.9h1V127.4h1V127.7h1V126.9h1V128.1h1V126.9h1V127.8h1V127.4h1V127.9h1V128.0h1V128.2h1V128.1h1V126.8h1V127.3h1V126.7h1V127.2h1V127.3h1V127.7h1V128.1h1V127.0h1V126.8h1V127.4h1V127.5h1V128.3h1V127.9h1V128.2h1V127.7h1V127.1h1V126.8h1V127.8h1V127.3h1V126.8h1V127.5h1V127.8h1V126.9h1V127.5h1V127.5h1V128.3h1V127.5h1V127.6h1V126.9h1V127.0h1V128.2h1V127.4h1V128.1h1V127.6h1V127.6h1V128.0h1V128.0h1V128.1h1V128.1h1V127.9h1V127.2h1V127.3h1V127.6h1V128.1h1V127.0h1V128.0h1V126.8h1V127.7h1V126.8h1V127.2h1V127.9h1V127.2h1V126.8h1V127.2h1V127.6h1V128.1h1V127.6h1V127.8h1V127.0h1V127.1h1V126.9h1V127.8h1V128.2h1V127.3h1V128.0h1V127.4h1V128.0h1V127.1h1V128.0h1V127.7h1V127.0h1V127.4h1V128.0h1V127.6h1V127.9h1V127.6h1V127.5h1V127.5h1V128.1h1V126.9h1V127.5h1V127.3h1V127.9h1V126.8h1V127.0h1V127.3h1V127.8h1V127.8h1V127.8h1V127.5h1V127.5h1V127.3h1V127.1h1V127.7h1V127.3h1V127.2h1V128.1h1V127.3h1V127.1h1V128.2h1V128.1h1V127.7h1V127.1h1V126.9h1V127.5h1V127.8h1V127.4h1V128.1h1V127.8h1V127.1h1V128.2h1V127.5h1V127.6h1V127.1h1V127.3h1V127.1h1V127.5h1V127.5h1V127.0h1V126.9h1V127.5h1V128.1h1V127.5h1V127.4h1V127.0h1V127.0h1V127.3h1V127.7h1V127.3h1V128.0h1V127.2h1V126.7h1V127.0h1V127.7h1V127.7h1V127.8h1V127.2h1V127.4h1V127.2h1V128.0h1V127.8h1V128.0h1V127.8h1V127.0h1V127.7h1V127.9h1V127.8h1V128.1h1V127.4h1V127.8h1V127.4h1V126.8h1V127.6h1V127.1h1V126.8h1V127.8h1V127.9h1V126.8h1V127.9h1V127.1h1V126.9h1V128.1h1V126.7h1V127.8h1V127.3h1V127.0h1V127.3h1V126.9h1V128.3h1V127.5h1V127.9h1V128.2h1V127.7h1V127.6h1V128.3h1V127.3h1V127.6h1V127.1h1V126.8h1V128.1h1V127.3h1V127.4h1V127.8h1V127.4h1V127.9h1V127.8h1V127.8h1V128.2h1V127.3h1V127.4h1V128.0h1V127.2h1V127.2h1V128.2h1V127.4h1V128.0h1V127.4h1V127.4h1V128.0h1V127.3h1V127.6h1V128.3h1V128.2h1V127.0h1V128.2h1V127.6h1V127.8h1V127.5h1V126.8h1V127.9h1V127.6h1V127.3h1V128.2h1V128.2h1V128.2h1V126.9h1V127.3h1V128.1h1V128.1h1V127.7h1V127.0h1V128.2h1V128.3h1V127.4h1V127.7h1V127.4h1V126.7h1V127.1h1V127.1h1V127.9h1V127.0h1V127.0h1V127.4h1V127.7h1V128.1h1V127.5h1V126.9h1V128.2h1V126.8h1V127.3h1V127.5h1V126.8h1V127.2h1V127.6h1V127.3h1V127.6h1V127.3h1V127.4h1V126.9h1V126.7h1V128.2h1V126.9h1V127.6h1V127.0h1V128.0h1V127.9h1V128.2h1V127.7h1V127.0h1V127.0h1V127.1h1V128.0h1V126.8h1V127.8h1V128.2h1V128.0h1V128.1h1V126.7h1V127.9h1V126.9h1V127.5h1V127.5h1V127.2h1V127.9h1V126.9h1V127.3h1V127.0h1V127.4h1V126.9h1V126.8h1V127.0h1V127.2h1V128.3h1V127.2h1V127.8h1V127.7h1V127.5h1V127.5h1V126.8h1V127.1h1V127.5h1V127.8h1V127.3h1V128.2h1V127.7h1V127.5h1V127.8h1V128.0h1V127.2h1V127.5h1V126.9h1V126.8h1V127.2h1V126.9h1V126.9h1V127.7h1V127.8h1V127.2h1V127.7h1V126.9h1V128.3h1V127.4h1V128.1h1V128.1h1V127.3h1V127.3h1V127.9h1V127.1h1V128.2h1V128.3h1V126.9h1V128.2h1V127.4h1V127.4h1V127.1h1V127.3h1V127.1h1V127.7h1V127.5h1V127.4h1V128.2h1V127.1h1V126.9h1V127.0h1V127.6h1V127.2h1V127.4h1V126.9h1V127.7h1V127.2h1V127.3h1V127.3h1V128.1h1V127.0h1V127.7h1V127.0h1V127.3h1V128.1h1V127.4h1V127.3h1V128.2h1V127.6h1V127.1h1V126.8h1V127.1h1V128.2h1V127.7h1V127.0h1V127.6h1V127.4h1V127.5h1V127.3h1V127.2h1V127.8h1V128.0h1V127.3h1V128.2h1V127.2h1V127.4h1V128.0h1V127.7h1V127.0h1V127.4h1V127.9h1V126.9h1V126.7h1V126.8h1V127.0h1V128.0h1V127.3h1V128.3h1V126.8h1V127.5h1V127.9h1V128.2h1V126.8h1V127.8h1V127.9h1V127.9h1V127.4h1V127.1h1V127.6h1V128.0h1V127.9h1V127.0h1V127.7h1V126.8h1V127.0h1V128.2h1V127.0h1V127.6h1V126.9h1V128.1h1V127.9h1V127.6h1V127.5h1V127.4h1V128.0h1V127.6h1V127.3h1V127.7h1V126.8h1V127.2h1V128.2h1V127.6h1V127.5h1V126.9h1V126.9h1V127.6h1V127.0h1V127.7h1V128.2h1V127.2h1V127.0h1V128.1h1V126.7h1V127.5h1V127.3h1V126.8h1V126.8h1V127.5h1V127.2h1V126.9h1V127.0h1V127.9h1V127.0h1V128.2h1V128.0h1V127.7h1V127.1h1V127.4h1V126.9h1V127.1h1V127.2h1V128.3h1V127.9h1V127.9h1V127.4h1V128.0h1V127.5h1V127.0h1V128.2h1V127.7h1V128.1h1V128.1h1V127.7h1V127.7h1V127.0h1V127.1h1V127.7h1V128.2h1V127.7h1V127.0h1V126.7h1V126.9h1V127.7h1V128.1h1V127.1h1V128.1h1V126.8h1V127.9h1V127.4h1V128.1h1V127.5h1V128.2h1V127.5h1V127.9h1V127.6h1V128.2h1V127.1h1V127.1h1V127.1h1V127.1h1V127.1h1V127.1h1V127.5h1V127.6h1V127.8h1V126.8h1V126.7h1V127.4h1V127.9h1V127.9h1V127.0h1V127.7h1V127.3h1V127.3h1V127.8h1V126.7h1V127.6h1V126.7h1V128.1h1V127.0h1V127.7h1V127.3h1V127.5h1V127.7h1V127.0h1V126.8h1V128.1h1V127.8h1V127.0h1V127.8h1V126.9h1V127.6h1V127.8h1V127.4h1V127.7h1V126.9h1V128.2h1V127.2h1V126.8h1V128.0h1V127.3h1V127.0h1V127.6h1V128.2h1V127.0h1V126.8h1V127.0h1V127.6h1V127.1h1V128.1h1V126.9h1V127.6h1V127.1h1V127.1h1V127.8h1V128.0h1V127.7h1V128.2h1V127.6h1V127.0h1V127.5h1V128.1h1V127.3h1V128.3h1V127.1h1V127.2h1V128.0h1V127.9h1V127.0h1V128.2h1V128.0h1V127.1h1V127.6h1V127.4h1V128.1h1V128.2h1V128.0h1V127.8h1V127.4h1V126.8h1V127.2h1V126.9h1V127.2h1V128.2h1V127.2h1V127.4h1V127.3h1V127.6h1V126.7h1V127.5h1V126.9h1V127.5h1V127.5h1V127.9h1V127.9h1V128.0h1V127.5h1V127.9h1V126.7h1V127.8h1V127.0h1V127.5h1V127.7h1V127.0h1V127.1h1V126.7h1V128.2h1V128.1h1V127.0h1V126.8h1V126.8h1V128.2h1V127.5h1V128.2h1V126.8h1V127.6h1V127.9h1V127.7h1V127.9h1V127.9h1V127.5h1V127.8h1V127.0h1V128.3h1V127.9h1V127.1h1V128.2h1V127.2h1V127.4h1V128.3h1V128.1h1V127.4h1V128.0h1V128.0h1V127.4h1V126.7h1V126.9h1V127.7h1V127.8h1V127.9h1V127.0h1V127.7h1V128.2h1V127.8h1V126.8h1V128.3h1V127.0h1V127.4h1V128.2h1V127.9h1V127.0h1V128.1h1V127.9h1V127.4h1V127.8h1V128.2h1V127.9h1V127.0h1V128.1h1V126.9h1V127.1h1V128.3h1V127.8h1V126.9h1V127.8h1V127.3h1V127.3h1V127.0h1V128.0h1V128.1h1V128.0h1V127.0h1V127.3h1V127.3h1V127.0h1V127.5h1V128.2h1V127.8h1V127.8h1V127.6h1V128.1h1V127.3h1V126.9h1V127.3h1V128.1h1V127.4h1V127.1h1V127.6h1V127.7h1V126.9h1V126.9h1V128.1h1V127.2h1V128.2h1V127.2h1V127.9h1V128.3h1V127.6h1V127.9h1V127.0h1V127.2h1V126.7h1V127.6h1V127.6h1V127.4h1V128.2h1V128.2h1V127.3h1V127.6h1V127.0h1V126.8h1V127.4h1V127.0h1V127.3h1V126.9h1V127.0h1V128.0h1V127.3h1V127.1h1V127.7h1V127.1h1V127.0h1V128.1h1V127.5h1V128.1h1V127.4h1V126.8h1V126.9h1V127.9h1V127.2h1V126.8h1V127.6h1V127.2h1V127.6h1V127.9h1V127.0h1V127.2h1V127.5h1V127.2h1V127.6h1V128.3h1V128.0h1V127.0h1V127.3h1V127.9h1V126.8h1V126.9h1V127.6h1V126.8h1V127.4h1V126.9h1V126.8h1V126.9h1V126.9h1V127.4h1V127.4h1V127.5h1V128.1h1V127.2h1V127.2h1V127.5h1V127.7h1V127.7h1V128.0h1V127.7h1V127.6h1V127.1h1V128.2h1V126.9h1V127.8h1V126.7h1V126.7h1V127.5h1V126.9h1V127.4h1V126.8h1V127.4h1V127.8h1V127.7h1V127.3h1V127.2h1V127.1h1V127.5h1V127.1h1V127.3h1V127.8h1V128.2h1V127.6h1V127.6h1V126.7h1V127.7h1V128.0h1V128.2h1V127.5h1V127.7h1V127.6h1V127.5h1V127.2h1V127.8h1V127.7h1V127.3h1V128.3h1V127.8h1V127.2h1V127.7h1V128.1h1V128.2h1V127.7h1V127.6h1V126.9h1V127.8h1V126.8h1V127.7h1V127.6h1V127.4h1V127.5h1V127.9h1V127.3h1V127.5h1V127.7h1V127.5h1V127.2h1V128.1h1V126.8h1V126.9h1V128.0h1V127.4h1V128.2h1V128.0h1V127.6h1V126.9h1V126.9h1V127.7h1V127.0h1V127.7h1V127.5h1V127.4h1V127.7h1V132.5V137.3h-1V138.0h-1V137.7h-1V137.5h-1V138.2h-1V137.0h-1V138.0h-1V138.4h-1V137.1h-1V137.3h-1V136.7h-1V137.9h-1V136.6h-1V138.5h-1V137.8h-1V136.9h-1V138.1h-1V137.3h-1V137.8h-1V137.9h-1V138.0h-1V137.3h-1V137.6h-1V137.7h-1V137.0h-1V137.6h-1V138.3h-1V137.4h-1V137.6h-1V137.0h-1V137.2h-1V136.8h-1V137.0h-1V136.9h-1V137.7h-1V137.0h-1V136.3h-1V137.9h-1V137.1h-1V137.0h-1V137.7h-1V138.0h-1V137.3h-1V137.7h-1V137.5h-1V137.1h-1V137.1h-1V136.9h-1V138.6h-1V137.5h-1V137.1h-1V137.1h-1V137.4h-1V137.6h-1V137.9h-1V137.6h-1V137.7h-1V138.0h-1V137.6h-1V137.2h-1V137.4h-1V137.8h-1V138.0h-1V137.8h-1V137.8h-1V137.1h-1V137.9h-1V137.8h-1V136.9h-1V138.0h-1V136.4h-1V138.2h-1V137.7h-1V137.3h-1V136.9h-1V137.1h-1V136.8h-1V137.1h-1V137.3h-1V137.6h-1V137.0h-1V137.9h-1V137.7h-1V137.3h-1V138.2h-1V138.3h-1V137.7h-1V138.2h-1V137.9h-1V137.7h-1V137.5h-1V137.8h-1V138.2h-1V137.2h-1V137.3h-1V138.0h-1V136.6h-1V137.1h-1V137.3h-1V137.8h-1V137.9h-1V137.6h-1V138.0h-1V136.7h-1V137.7h-1V138.1h-1V137.4h-1V137.8h-1V138.0h-1V136.8h-1V138.4h-1V138.1h-1V137.4h-1V137.1h-1V137.7h-1V137.2h-1V137.7h-1V137.7h-1V137.8h-1V137.5h-1V137.7h-1V137.3h-1V138.4h-1V138.0h-1V137.6h-1V138.4h-1V137.7h-1V138.1h-1V138.4h-1V137.1h-1V138.1h-1V136.5h-1V136.9h-1V137.9h-1V137.2h-1V137.3h-1V137.8h-1V138.0h-1V138.4h-1V137.4h-1V137.4h-1V136.8h-1V136.9h-1V137.8h-1V136.4h-1V137.7h-1V136.9h-1V137.9h-1V138.6h-1V137.4h-1V137.5h-1V138.3h-1V137.9h-1V137.3h-1V137.2h-1V138.6h-1V137.8h-1V136.8h-1V137.0h-1V137.1h-1V137.3h-1V136.5h-1V137.7h-1V137.7h-1V137.6h-1V137.3h-1V137.9h-1V136.9h-1V137.1h-1V137.1h-1V137.8h-1V138.0h-1V137.4h-1V137.4h-1V138.5h-1V137.4h-1V136.4h-1V138.1h-1V138.0h-1V136.7h-1V138.0h-1V137.5h-1V137.2h-1V137.6h-1V138.1h-1V137.1h-1V137.4h-1V138.1h-1V136.8h-1V137.1h-1V137.9h-1V138.1h-1V136.2h-1V137.9h-1V136.8h-1V137.1h-1V136.9h-1V137.8h-1V136.8h-1V137.3h-1V137.6h-1V138.0h-1V137.8h-1V137.7h-1V137.2h-1V137.1h-1V137.8h-1V136.9h-1V136.4h-1V137.4h-1V138.2h-1V137.3h-1V137.4h-1V136.8h-1V136.4h-1V138.2h-1V137.3h-1V137.7h-1V137.1h-1V136.7h-1V137.3h-1V137.4h-1V137.8h-1V138.5h-1V137.2h-1V137.5h-1V136.7h-1V138.4h-1V137.8h-1V137.7h-1V136.8h-1V137.1h-1V138.0h-1V138.2h-1V137.8h-1V137.7h-1V137.4h-1V138.4h-1V137.3h-1V138.3h-1V136.7h-1V137.1h-1V136.8h-1V136.9h-1V137.3h-1V137.7h-1V137.1h-1V138.3h-1V137.2h-1V138.4h-1V137.3h-1V137.5h-1V137.7h-1V137.6h-1V136.7h-1V137.6h-1V137.8h-1V137.8h-1V138.2h-1V138.0h-1V137.4h-1V137.3h-1V136.7h-1V137.1h-1V137.5h-1V137.4h-1V138.4h-1V137.1h-1V136.5h-1V138.2h-1V136.9h-1V137.4h-1V138.2h-1V137.5h-1V136.6h-1V138.2h-1V136.8h-1V137.6h-1V138.1h-1V137.1h-1V137.1h-1V136.9h-1V137.5h-1V137.0h-1V138.2h-1V138.2h-1V137.7h-1V138.0h-1V136.8h-1V137.5h-1V137.4h-1V137.8h-1V138.2h-1V137.7h-1V136.5h-1V137.1h-1V138.3h-1V137.4h-1V137.3h-1V137.8h-1V138.1h-1V136.9h-1V138.4h-1V137.5h-1V137.9h-1V137.0h-1V137.6h-1V138.5h-1V137.0h-1V137.6h-1V137.6h-1V136.6h-1V138.5h-1V137.8h-1V137.3h-1V137.5h-1V138.1h-1V137.0h-1V138.2h-1V137.1h-1V138.7h-1V137.6h-1V138.4h-1V137.3h-1V137.9h-1V137.4h-1V137.7h-1V137.7h-1V136.8h-1V136.7h-1V137.6h-1V137.9h-1V137.8h-1V136.8h-1V137.8h-1V137.8h-1V138.1h-1V138.0h-1V138.3h-1V138.1h-1V137.5h-1V138.3h-1V137.2h-1V137.3h-1V137.4h-1V137.9h-1V136.6h-1V137.1h-1V136.9h-1V137.9h-1V136.9h-1V138.2h-1V136.8h-1V138.4h-1V136.7h-1V137.2h-1V137.7h-1V138.3h-1V138.2h-1V137.1h-1V136.8h-1V137.0h-1V137.6h-1V137.9h-1V137.7h-1V136.8h-1V136.7h-1V136.6h-1V137.4h-1V137.0h-1V138.5h-1V138.0h-1V137.3h-1V137.8h-1V136.6h-1V137.0h-1V136.8h-1V137.9h-1V137.9h-1V138.2h-1V137.6h-1V138.0h-1V137.6h-1V136.5h-1V136.4h-1V138.3h-1V136.8h-1V138.3h-1V137.8h-1V137.7h-1V137.1h-1V138.3h-1V138.0h-1V138.1h-1V137.5h-1V138.1h-1V137.2h-1V138.2h-1V137.6h-1V136.9h-1V136.9h-1V137.9h-1V137.5h-1V138.6h-1V138.4h-1V137.0h-1V137.4h-1V137.3h-1V138.3h-1V138.6h-1V137.7h-1V137.5h-1V137.3h-1V137.2h-1V137.6h-1V137.6h-1V137.9h-1V137.0h-1V136.9h-1V137.7h-1V137.6h-1V138.0h-1V136.4h-1V138.1h-1V137.9h-1V137.5h-1V138.3h-1V136.6h-1V136.9h-1V137.6h-1V137.7h-1V137.9h-1V137.4h-1V137.0h-1V137.5h-1V138.2h-1V137.2h-1V137.1h-1V137.1h-1V138.7h-1V136.3h-1V138.1h-1V137.4h-1V138.0h-1V138.6h-1V138.1h-1V138.0h-1V137.3h-1V137.6h-1V137.7h-1V137.1h-1V136.9h-1V137.6h-1V137.9h-1V136.5h-1V137.3h-1V136.6h-1V137.6h-1V137.9h-1V138.1h-1V137.6h-1V137.4h-1V137.4h-1V138.2h-1V137.3h-1V137.1h-1V137.5h-1V137.8h-1V137.7h-1V137.2h-1V136.5h-1V137.4h-1V137.9h-1V137.1h-1V137.3h-1V138.4h-1V136.8h-1V137.8h-1V136.4h-1V138.1h-1V137.2h-1V137.8h-1V137.1h-1V137.7h-1V137.3h-1V138.3h-1V137.1h-1V137.8h-1V138.6h-1V137.8h-1V137.1h-1V137.5h-1V137.3h-1V137.2h-1V138.2h-1V137.6h-1V137.9h-1V137.3h-1V138.0h-1V137.2h-1V138.1h-1V137.0h-1V136.7h-1V137.8h-1V136.7h-1V137.3h-1V137.7h-1V136.6h-1V136.5h-1V137.2h-1V136.4h-1V138.1h-1V137.4h-1V137.3h-1V136.8h-1V137.7h-1V138.0h-1V137.7h-1V138.0h-1V138.2h-1V138.4h-1V137.6h-1V137.9h-1V137.3h-1V137.4h-1V137.2h-1V137.3h-1V136.4h-1V137.3h-1V137.5h-1V137.2h-1V137.9h-1V138.4h-1V137.4h-1V137.1h-1V137.0h-1V136.7h-1V137.9h-1V136.9h-1V138.0h-1V138.5h-1V138.7h-1V138.0h-1V137.7h-1V138.3h-1V138.0h-1V137.8h-1V137.4h-1V137.7h-1V137.5h-1V137.4h-1V138.6h-1V137.3h-1V137.9h-1V137.0h-1V136.8h-1V136.8h-1V136.9h-1V138.2h-1V137.1h-1V137.9h-1V137.7h-1V138.4h-1V137.6h-1V136.4h-1V137.0h-1V137.2h-1V138.4h-1V137.4h-1V138.1h-1V136.7h-1V137.9h-1V138.1h-1V137.2h-1V137.7h-1V137.8h-1V137.7h-1V137.2h-1V137.3h-1V138.5h-1V137.9h-1V138.0h-1V138.2h-1V136.7h-1V137.7h-1V137.9h-1V136.5h-1V136.9h-1V137.5h-1V138.5h-1V137.7h-1V137.0h-1V137.5h-1V138.0h-1V138.2h-1V137.4h-1V137.5h-1V137.3h-1V136.7h-1V136.5h-1V137.5h-1V137.0h-1V136.5h-1V136.6h-1V137.4h-1V138.2h-1V137.0h-1V136.3h-1V136.6h-1V138.0h-1V137.4h-1V136.9h-1V137.7h-1V137.9h-1V137.7h-1V137.2h-1V136.7h-1V137.5h-1V137.0h-1V137.0h-1V137.0h-1V137.2h-1V137.5h-1V137.8h-1V137.9h-1V137.1h-1V137.4h-1V136.5h-1V137.5h-1V137.6h-1V136.9h-1V137.8h-1V138.0h-1V137.3h-1V136.7h-1V137.7h-1V136.8h-1V137.2h-1V137.2h-1V137.8h-1V138.1h-1V137.2h-1V138.0h-1V137.9h-1V137.5h-1V138.0h-1V137.2h-1V137.5h-1V137.1h-1V136.6h-1V136.9h-1V137.6h-1V136.8h-1V138.3h-1V137.8h-1V138.3h-1V138.0h-1V136.8h-1V138.1h-1V137.1h-1V138.2h-1V137.7h-1V137.4h-1V138.3h-1V137.4h-1V137.0h-1V137.9h-1V137.5h-1V137.9h-1V138.3h-1V137.8h-1V137.7h-1V137.3h-1V136.8h-1V136.8h-1V137.3h-1V137.0h-1V138.1h-1V137.4h-1V137.5h-1V137.3h-1V136.8h-1V138.1h-1V137.5h-1V137.8h-1V136.9h-1V137.7h-1V137.4h-1V138.1h-1V138.5h-1V138.1h-1V136.7h-1V138.1h-1V137.3h-1V137.3h-1V137.6h-1V138.2h-1V137.8h-1V137.2h-1V137.1h-1V137.4h-1V138.4h-1V137.7h-1V137.4h-1V137.3h-1V137.6h-1V138.1h-1V138.3h-1V137.7h-1V137.9h-1V137.0h-1V137.8h-1V137.0h-1V137.4h-1V137.3h-1V137.3h-1V137.3h-1V138.6h-1V138.0h-1V137.5h-1V137.3h-1V136.4h-1V137.5h-1V137.5h-1V137.2h-1V137.8h-1V138.0h-1V137.4h-1V137.8h-1V138.0h-1V137.5h-1V137.7h-1V136.7h-1V137.3h-1V137.1h-1V137.3h-1V137.7h-1V137.8h-1V137.2h-1V137.7h-1V137.2h-1V138.3h-1V137.0h-1V138.0h-1V137.7h-1V137.3h-1V136.8h-1V137.2h-1V137.0h-1V137.2h-1V138.2h-1V137.4h-1V136.8h-1V137.5h-1V137.4h-1V137.6h-1V136.6h-1V137.8h-1V136.9h-1V137.2h-1V138.5h-1V137.5h-1V137.5h-1V137.0h-1V137.7h-1V137.1h-1V137.5h-1V137.9h-1V137.8h-1V137.8h-1V136.7h-1V138.3h-1V137.9h-1V137.8h-1V137.8h-1V136.6h-1V137.9h-1V137.1h-1V137.5h-1V137.5h-1V137.7h-1V137.4h-1V137.4h-1V137.1h-1V137.0h-1V136.5h-1V137.0h-1V137.6h-1V136.6h-1V137.9h-1V136.5h-1V138.5h-1V137.6h-1V137.2h-1V137.4h-1V136.6h-1V137.6h-1V137.6h-1V138.0h-1V137.2h-1V137.7h-1V138.3h-1V138.0h-1V137.6h-1V137.7h-1V138.3h-1V137.0h-1V137.2h-1V137.1h-1V136.5h-1V137.4h-1V137.5h-1V138.4h-1V137.8h-1V136.6h-1V137.0h-1V138.2h-1V138.0h-1V138.3h-1V137.9h-1V138.2h-1V136.5h-1V136.6h-1V137.4h-1V137.4h-1V137.4h-1V136.9h-1V138.2h-1V137.1h-1V137.7h-1V137.7h-1V137.8h-1V137.7h-1V136.5h-1V137.9h-1V136.6h-1V137.9h-1V136.5h-1V137.5h-1V138.3h-1V137.1h-1V137.7h-1V138.4h-1V136.9h-1V137.4h-1V138.0h-1V136.8h-1V137.1h-1V137.3h-1V137.1h-1V137.9h-1V137.6h-1V138.3h-1V136.9h-1V136.9h-1V137.3h-1V137.3h-1V136.6h-1V137.0h-1V137.3h-1V137.5h-1V137.3h-1V137.8h-1V137.6h-1V137.0h-1V137.0h-1V137.1h-1V136.7h-1V137.9h-1V137.9h-1V137.0h-1V138.0h-1V138.5h-1V137.8h-1V138.0h-1V138.0h-1V138.0h-1V137.8h-1V137.2h-1V137.2h-1V137.1h-1V137.2h-1V137.2h-1V137.3h-1V137.0h-1V137.2h-1V138.2h-1V136.9h-1V138.0h-1V138.2h-1V138.2h-1V137.7h-1V137.4h-1V138.5h-1V137.8h-1V137.7h-1V137.9h-1V137.3h-1V138.3h-1V136.5h-1V136.2h-1V138.0h-1V136.8h-1V136.8h-1V137.2h-1V138.0h-1V137.5h-1V138.0h-1V136.7h-1V137.4h-1V137.2h-1V137.0h-1V138.2h-1V137.3h-1V136.8h-1V138.0h-1V138.1h-1V137.9h-1V137.4h-1V137.7h-1V138.0h-1V138.4h-1V137.0h-1V138.3h-1V138.2h-1V136.6h-1V136.5h-1V137.2h-1V137.8h-1V133.1h-1V133.1h-1V133.1h-1V133.1h-1V133.1h-1V133.1h-1V133.1h-1V133.1h-1V133.1h-1V133.1h-1V133.1h-1V133.1h-1V133.1h-1V133.1h-1V133.1h-1V133.8h-1V133.8h-1V133.1h-1V133.1h-1V133.1h-1V133.8h-1V133.8h-1V133.1h-1V133.1h-1V133.8h-1V133.8h-1V133.1h-1V133.1h-1V133.8h-1V133.8h-1V133.8h-1V133.8h-1V133.8h-1V133.8h-1V133.1h-1V133.1h-1V133.1h-1V133.1h-1V133.1h-1V133.1h-1V133.1h-1V133.1h-1V133.1h-1V133.1h-1V133.8h-1V133.8h-1V133.8h-1V133.8h-1V133.8h-1V133.1h-1V133.1h-1V133.1h-1V133.1h-1V133.1h-1V133.1h-1V133.1h-1V133.1h-1V133.1h-1V133.1h-1V133.1h-1V133.1h-1V133.1h-1V133.1h-1V133.1h-1V133.1h-1V133.1h-1V133.1h-1V133.1h-1V133.1h-1V133.1h-1V133.1h-1V133.1h-1V133.1h-1V133.1h-1V133.1h-1V133.1h-1V133.1h-1V133.1h-1V133.1h-1V133.1h-1V133.1h-1V133.1h-1V133.1h-1V133.1h-1V133.1h-1V133.1h-1V133.1h-1V133.1h-1V133.1h-1V133.1h-1V133.1h-1V133.1h-1V133.1h-1V133.1h-1V133.1h-1V133.1h-1V133.1h-1V133.1h-1V133.1h-1V133.1h-1Z" fill="#6cf0b4"/>
<path d="M1350 132.5V126.9h1V127.4h1V128.3h1V127.4h1V127.2h1V127.4h1V126.9h1V128.3h1V126.8h1V127.2h1V127.5h1V128.3h1V127.7h1V127.6h1V127.7h1V127.5h1V127.8h1V126.8h1V126.9h1V127.2h1V127.4h1V127.3h1V127.4h1V128.3h1V127.6h1V127.3h1V127.5h1V128.1h1V127.5h1V127.5h1V127.1h1V127.9h1V127.8h1V127.7h1V128.0h1V128.1h1V127.9h1V127.2h1V127.6h1V128.0h1V126.7h1V128.1h1V127.9h1V126.7h1V127.7h1V128.0h1V126.8h1V128.2h1V126.9h1V127.3h1V127.5h1V127.3h1V126.9h1V127.2h1V127.6h1V127.8h1V126.9h1V127.5h1V127.8h1V126.8h1V127.7h1V127.3h1V127.8h1V127.3h1V127.0h1V128.2h1V127.0h1V127.4h1V126.8h1V128.1h1V128.0h1V128.3h1V127.4h1V128.0h1V126.9h1V126.9h1V128.0h1V126.8h1V127.9h1V126.9h1V126.7h1V126.9h1V128.1h1V126.9h1V127.7h1V128.0h1V127.9h1V127.8h1V126.8h1V127.9h1V127.8h1V126.8h1V127.3h1V127.2h1V127.4h1V127.1h1V126.8h1V127.0h1V127.9h1V127.7h1V127.5h1V126.9h1V127.4h1V128.0h1V127.2h1V128.2h1V127.2h1V128.3h1V127.6h1V128.0h1V126.9h1V127.6h1V127.6h1V128.3h1V127.7h1V127.3h1V127.5h1V128.0h1V128.1h1V127.7h1V127.0h1V128.1h1V127.1h1V127.5h1V128.0h1V128.2h1V127.2h1V127.9h1V126.7h1V127.0h1V126.9h1V127.4h1V127.2h1V126.9h1V127.2h1V127.3h1V128.0h1V127.5h1V127.9h1V127.2h1V126.9h1V127.0h1V128.0h1V127.0h1V127.8h1V126.7h1V127.1h1V127.6h1V126.8h1V128.2h1V127.5h1V127.1h1V127.4h1V127.3h1V127.6h1V128.3h1V127.7h1V127.8h1V127.6h1V127.8h1V127.8h1V127.7h1V127.5h1V128.3h1V128.2h1V128.2h1V126.8h1V128.1h1V128.1h1V128.3h1V128.1h1V128.1h1V127.6h1V127.7h1V127.9h1V128.3h1V128.6h1V128.5h1V128.7h1V128.7h1V128.8h1V129.4h1V129.6h1V129.6h1V129.7h1V130.1h1V130.0h1V130.3h1V130.2h1V130.3h1V130.8h1V130.7h1V131.0h1V131.3h1V131.4h1V131.8h1V131.4h1V131.9h1V131.7h1V131.5h1V131.8h1V131.6h1V131.8h1V131.9h1V131.9h1V131.7h1V131.9h1V131.6h1V132.1h1V132.1h1V131.7h1V132.5V133.6h-1V132.6h-1V132.7h-1V133.2h-1V133.3h-1V133.6h-1V133.0h-1V132.6h-1V133.3h-1V133.6h-1V133.3h-1V133.7h-1V132.8h-1V132.9h-1V134.1h-1V133.0h-1V133.8h-1V134.2h-1V134.5h-1V134.2h-1V134.2h-1V135.0h-1V135.0h-1V134.4h-1V134.7h-1V134.6h-1V135.3h-1V135.7h-1V135.2h-1V135.4h-1V135.7h-1V136.1h-1V136.3h-1V136.6h-1V136.0h-1V137.0h-1V137.4h-1V136.9h-1V137.0h-1V137.1h-1V136.6h-1V137.0h-1V136.8h-1V137.1h-1V137.7h-1V137.3h-1V136.5h-1V136.8h-1V137.3h-1V137.7h-1V137.6h-1V136.7h-1V137.4h-1V136.9h-1V137.2h-1V136.3h-1V137.4h-1V137.8h-1V138.1h-1V138.1h-1V137.8h-1V137.3h-1V138.6h-1V136.9h-1V137.8h-1V138.1h-1V136.8h-1V137.5h-1V137.0h-1V137.7h-1V138.4h-1V137.4h-1V137.2h-1V137.6h-1V136.6h-1V137.7h-1V137.9h-1V137.6h-1V137.5h-1V137.6h-1V138.5h-1V138.2h-1V138.2h-1V137.2h-1V138.0h-1V136.4h-1V137.2h-1V137.8h-1V137.9h-1V136.4h-1V138.0h-1V137.2h-1V136.8h-1V136.6h-1V137.5h-1V138.2h-1V137.5h-1V137.1h-1V137.2h-1V137.6h-1V138.0h-1V137.2h-1V137.6h-1V136.9h-1V138.0h-1V136.6h-1V137.9h-1V137.4h-1V137.8h-1V138.6h-1V137.6h-1V136.9h-1V137.4h-1V138.0h-1V138.0h-1V137.9h-1V137.2h-1V138.0h-1V138.0h-1V138.2h-1V137.7h-1V136.7h-1V138.1h-1V137.4h-1V137.5h-1V137.4h-1V137.4h-1V138.0h-1V136.6h-1V137.9h-1V138.2h-1V138.4h-1V137.1h-1V137.8h-1V136.6h-1V138.5h-1V138.5h-1V136.7h-1V137.6h-1V136.8h-1V137.3h-1V136.5h-1V138.0h-1V137.6h-1V138.5h-1V137.1h-1V137.6h-1V138.1h-1V137.0h-1V137.6h-1V137.0h-1V137.8h-1V137.3h-1V137.7h-1V137.9h-1V137.4h-1V137.1h-1V137.8h-1V138.2h-1V138.1h-1V137.5h-1V137.8h-1V138.1h-1V137.3h-1V138.6h-1V137.5h-1V137.3h-1V138.1h-1V137.3h-1V136.9h-1V138.0h-1V137.4h-1V137.5h-1V137.4h-1V137.3h-1V136.5h-1V137.0h-1V137.1h-1V137.6h-1V137.0h-1V137.8h-1V137.2h-1V137.9h-1V136.9h-1V138.0h-1V137.9h-1V137.7h-1V136.4h-1V137.3h-1V137.5h-1V137.2h-1V137.4h-1V138.2h-1V137.9h-1V137.0h-1V138.0h-1V137.4h-1V137.4h-1V136.8h-1V136.5h-1V137.8h-1V138.0h-1V138.7h-1V137.0h-1V137.8h-1V137.3h-1V137.4h-1V137.7h-1V136.2h-1V137.2h-1V138.4h-1Z" fill="#4fe3a1"/>
<path d="M719.5 113V138" stroke="#c02020" stroke-width="1"/>
</svg>
<svg style="left:0;top:0" width="1683" height="1020"><path d="M404.5 181V852M496.5 181V852M589.5 181V852M681.5 181V852M774.5 181V852M866.5 181V852M958.5 181V852M1051.5 181V852M1143.5 181V852M1236.5 181V852M1328.5 181V852M1421.5 181V852M1513.5 181V852M311 230.5H1562M311 265.5H1562M311 290.5H1562M311 319.5H1562M311 334.5H1562M311 364.5H1562M311 378.5H1562M311 408.5H1562M311 433.5H1562M311 468.5H1562M311 566.5H1562M311 601.5H1562M311 626.5H1562M311 655.5H1562M311 670.5H1562M311 700.5H1562M311 714.5H1562M311 744.5H1562M311 769.5H1562M311 804.5H1562" stroke="#0a300a" stroke-width="1" fill="none"/>
<path d="M311 181.5H1562M311.5 181V852" stroke="#0c3a0c" stroke-width="1"/>
<path d="M311 516.5H1562" stroke="#3a463a" stroke-width="2"/>
<path d="M311 349V347h1V346h1V346h1V341h1V345h1V347h1V345h1V345h1V346h1V345h1V347h1V346h1V346h1V345h1V346h1V345h1V346h1V345h1V346h1V346h1V345h1V346h1V341h1V344h1V346h1V347h1V346h1V346h1V346h1V345h1V345h1V346h1V346h1V344h1V345h1V347h1V347h1V346h1V347h1V346h1V346h1V346h1V346h1V346h1V346h1V347h1V344h1V345h1V346h1V346h1V345h1V341h1V345h1V343h1V346h1V345h1V345h1V346h1V344h1V346h1V345h1V346h1V346h1V344h1V346h1V346h1V344h1V345h1V339h1V336h1V331h1V337h1V340h1V336h1V340h1V346h1V346h1V345h1V346h1V346h1V345h1V346h1V345h1V346h1V345h1V339h1V336h1V334h1V337h1V340h1V337h1V337h1V346h1V345h1V347h1V346h1V339h1V338h1V335h1V331h1V334h1V336h1V339h1V330h1V340h1V345h1V346h1V346h1V341h1V338h1V335h1V338h1V341h1V340h1V338h1V341h1V347h1V346h1V345h1V342h1V339h1V338h1V347h1V346h1V346h1V347h1V280h1V266h1V249h1V247h1V245h1V249h1V242h1V246h1V238h1V233h1V235h1V243h1V236h1V242h1V247h1V233h1V239h1V242h1V248h1V236h1V241h1V240h1V242h1V239h1V240h1V238h1V231h1V245h1V230h1V247h1V243h1V238h1V249h1V236h1V234h1V244h1V242h1V236h1V238h1V254h1V230h1V242h1V217h1V238h1V233h1V232h1V237h1V239h1V247h1V235h1V234h1V236h1V216h1V248h1V220h1V220h1V216h1V223h1V243h1V238h1V240h1V248h1V233h1V235h1V244h1V241h1V236h1V233h1V240h1V231h1V235h1V238h1V249h1V244h1V216h1V244h1V234h1V243h1V243h1V227h1V241h1V218h1V234h1V228h1V241h1V238h1V252h1V241h1V249h1V245h1V225h1V236h1V242h1V234h1V234h1V248h1V218h1V226h1V216h1V231h1V218h1V241h1V218h1V233h1V230h1V244h1V232h1V228h1V216h1V243h1V233h1V223h1V216h1V244h1V221h1V235h1V244h1V238h1V216h1V219h1V216h1V244h1V246h1V234h1V249h1V250h1V234h1V234h1V238h1V233h1V234h1V243h1V243h1V242h1V237h1V230h1V232h1V240h1V247h1V216h1V224h1V218h1V254h1V248h1V238h1V246h1V229h1V239h1V228h1V223h1V216h1V238h1V242h1V243h1V235h1V233h1V240h1V242h1V216h1V244h1V232h1V216h1V243h1V249h1V237h1V243h1V246h1V236h1V236h1V217h1V243h1V232h1V246h1V245h1V242h1V241h1V238h1V257h1V243h1V245h1V245h1V245h1V216h1V243h1V231h1V247h1V246h1V232h1V249h1V246h1V234h1V245h1V239h1V251h1V242h1V250h1V255h1V251h1V232h1V248h1V237h1V226h1V250h1V240h1V251h1V240h1V242h1V248h1V245h1V245h1V252h1V228h1V227h1V237h1V238h1V238h1V254h1V241h1V238h1V231h1V243h1V230h1V251h1V219h1V248h1V246h1V240h1V246h1V241h1V250h1V228h1V250h1V216h1V241h1V232h1V231h1V243h1V235h1V245h1V229h1V231h1V234h1V227h1V249h1V247h1V250h1V249h1V220h1V221h1V227h1V251h1V244h1V247h1V247h1V247h1V245h1V241h1V239h1V232h1V216h1V238h1V240h1V241h1V219h1V237h1V244h1V244h1V241h1V240h1V240h1V232h1V216h1V217h1V216h1V240h1V237h1V241h1V232h1V239h1V230h1V221h1V219h1V224h1V216h1V228h1V225h1V236h1V225h1V238h1V232h1V248h1V230h1V225h1V216h1V243h1V237h1V228h1V236h1V234h1V231h1V239h1V238h1V240h1V238h1V224h1V240h1V240h1V235h1V234h1V233h1V252h1V246h1V242h1V241h1V241h1V240h1V239h1V239h1V216h1V216h1V218h1V231h1V242h1V239h1V224h1V233h1V226h1V239h1V216h1V235h1V242h1V251h1V241h1V236h1V235h1V241h1V236h1V245h1V230h1V241h1V234h1V240h1V232h1V234h1V243h1V238h1V240h1V237h1V228h1V239h1V234h1V220h1V238h1V234h1V250h1V242h1V237h1V229h1V228h1V242h1V232h1V216h1V226h1V216h1V217h1V225h1V231h1V244h1V236h1V249h1V228h1V247h1V239h1V225h1V224h1V237h1V217h1V234h1V229h1V241h1V234h1V242h1V237h1V246h1V246h1V240h1V232h1V239h1V242h1V216h1V216h1V240h1V235h1V237h1V238h1V236h1V237h1V237h1V233h1V216h1V237h1V247h1V236h1V233h1V239h1V239h1V230h1V237h1V220h1V242h1V220h1V228h1V245h1V235h1V247h1V239h1V230h1V236h1V247h1V216h1V240h1V240h1V236h1V238h1V238h1V239h1V235h1V249h1V226h1V239h1V243h1V231h1V233h1V230h1V247h1V248h1V222h1V238h1V216h1V241h1V227h1V234h1V237h1V242h1V233h1V235h1V244h1V246h1V238h1V216h1V236h1V216h1V231h1V234h1V229h1V241h1V221h1V241h1V232h1V217h1V226h1V225h1V233h1V239h1V220h1V242h1V236h1V222h1V232h1V218h1V223h1V237h1V235h1V245h1V242h1V217h1V234h1V234h1V223h1V229h1V240h1V247h1V240h1V230h1V230h1V233h1V216h1V216h1V232h1V243h1V235h1V238h1V231h1V240h1V241h1V239h1V239h1V241h1V230h1V238h1V240h1V235h1V243h1V233h1V228h1V224h1V216h1V244h1V216h1V216h1V244h1V242h1V241h1V216h1V224h1V245h1V247h1V218h1V248h1V243h1V244h1V243h1V240h1V244h1V236h1V245h1V226h1V238h1V243h1V219h1V239h1V216h1V226h1V235h1V216h1V229h1V235h1V249h1V243h1V230h1V244h1V222h1V239h1V243h1V236h1V230h1V217h1V226h1V240h1V239h1V245h1V236h1V245h1V239h1V241h1V233h1V249h1V216h1V250h1V229h1V226h1V250h1V244h1V233h1V231h1V237h1V231h1V243h1V239h1V238h1V230h1V242h1V246h1V237h1V236h1V232h1V245h1V233h1V233h1V243h1V247h1V238h1V242h1V235h1V238h1V217h1V216h1V216h1V234h1V217h1V238h1V244h1V230h1V216h1V235h1V230h1V216h1V217h1V236h1V244h1V246h1V228h1V232h1V248h1V235h1V246h1V240h1V234h1V252h1V243h1V240h1V247h1V244h1V253h1V233h1V248h1V245h1V242h1V248h1V242h1V244h1V241h1V244h1V233h1V240h1V242h1V233h1V240h1V221h1V241h1V242h1V242h1V236h1V240h1V224h1V226h1V245h1V238h1V237h1V216h1V221h1V238h1V237h1V233h1V243h1V249h1V239h1V235h1V239h1V242h1V237h1V245h1V227h1V219h1V231h1V235h1V235h1V237h1V246h1V233h1V248h1V241h1V240h1V243h1V238h1V234h1V245h1V232h1V250h1V228h1V244h1V243h1V228h1V254h1V216h1V240h1V226h1V245h1V239h1V237h1V236h1V241h1V224h1V235h1V233h1V235h1V235h1V238h1V216h1V240h1V234h1V226h1V242h1V239h1V239h1V245h1V224h1V243h1V236h1V244h1V241h1V249h1V224h1V236h1V249h1V241h1V235h1V233h1V232h1V216h1V246h1V216h1V234h1V233h1V242h1V248h1V240h1V242h1V245h1V238h1V228h1V243h1V235h1V216h1V238h1V222h1V216h1V216h1V224h1V226h1V224h1V221h1V223h1V235h1V232h1V242h1V238h1V244h1V236h1V248h1V242h1V246h1V240h1V246h1V248h1V216h1V232h1V240h1V221h1V247h1V225h1V238h1V216h1V238h1V249h1V225h1V238h1V239h1V234h1V225h1V217h1V226h1V238h1V240h1V230h1V227h1V235h1V228h1V243h1V239h1V247h1V238h1V235h1V237h1V226h1V239h1V239h1V231h1V217h1V236h1V223h1V229h1V226h1V233h1V229h1V228h1V219h1V216h1V224h1V235h1V224h1V239h1V229h1V216h1V228h1V239h1V233h1V229h1V236h1V233h1V228h1V234h1V216h1V234h1V239h1V226h1V216h1V216h1V221h1V221h1V220h1V216h1V225h1V241h1V231h1V223h1V238h1V231h1V229h1V228h1V244h1V237h1V238h1V216h1V231h1V217h1V244h1V237h1V228h1V230h1V236h1V220h1V234h1V238h1V245h1V249h1V243h1V232h1V240h1V224h1V236h1V243h1V235h1V216h1V235h1V237h1V242h1V230h1V216h1V241h1V235h1V235h1V216h1V218h1V234h1V247h1V239h1V239h1V229h1V241h1V245h1V237h1V239h1V216h1V241h1V231h1V231h1V235h1V238h1V221h1V233h1V247h1V233h1V233h1V222h1V222h1V236h1V236h1V229h1V240h1V233h1V243h1V246h1V244h1V236h1V216h1V230h1V244h1V241h1V240h1V226h1V239h1V249h1V245h1V238h1V236h1V229h1V238h1V247h1V242h1V248h1V238h1V236h1V244h1V239h1V242h1V239h1V224h1V236h1V216h1V240h1V237h1V216h1V222h1V245h1V240h1V245h1V237h1V242h1V238h1V241h1V231h1V216h1V227h1V230h1V221h1V224h1V245h1V216h1V230h1V243h1V245h1V245h1V249h1V240h1V231h1V242h1V233h1V259h1V243h1V226h1V236h1V239h1V247h1V222h1V241h1V238h1V235h1V233h1V247h1V252h1V241h1V237h1V240h1V216h1V236h1V244h1V219h1V225h1V244h1V256h1V239h1V245h1V219h1V234h1V241h1V227h1V231h1V241h1V226h1V227h1V225h1V244h1V238h1V242h1V241h1V216h1V241h1V221h1V234h1V242h1V239h1V244h1V243h1V223h1V227h1V233h1V235h1V222h1V220h1V237h1V244h1V235h1V240h1V242h1V244h1V238h1V235h1V239h1V231h1V235h1V235h1V234h1V219h1V237h1V251h1V241h1V247h1V232h1V236h1V239h1V240h1V235h1V231h1V235h1V239h1V238h1V245h1V237h1V233h1V216h1V236h1V238h1V236h1V233h1V235h1V244h1V232h1V243h1V254h1V245h1V234h1V216h1V216h1V233h1V230h1V244h1V216h1V243h1V216h1V216h1V235h1V224h1V229h1V228h1V240h1V251h1V244h1V230h1V245h1V246h1V250h1V242h1V245h1V242h1V244h1V252h1V238h1V223h1V236h1V244h1V240h1V233h1V216h1V227h1V237h1V231h1V246h1V234h1V236h1V240h1V224h1V242h1V239h1V241h1V247h1V237h1V247h1V238h1V227h1V238h1V238h1V238h1V239h1V216h1V222h1V216h1V233h1V244h1V246h1V251h1V247h1V227h1V245h1V246h1V232h1V240h1V247h1V250h1V246h1V245h1V241h1V247h1V254h1V216h1V223h1V251h1V233h1V236h1V238h1V238h1V216h1V242h1V241h1V250h1V245h1V240h1V249h1V247h1V240h1V243h1V250h1V216h1V224h1V242h1V349V449h-1V462h-1V451h-1V450h-1V462h-1V458h-1V455h-1V481h-1V473h-1V460h-1V457h-1V455h-1V459h-1V460h-1V453h-1V482h-1V443h-1V459h-1V471h-1V455h-1V450h-1V452h-1V455h-1V448h-1V459h-1V450h-1V468h-1V452h-1V450h-1V463h-1V461h-1V460h-1V474h-1V474h-1V465h-1V465h-1V451h-1V459h-1V460h-1V463h-1V482h-1V468h-1V482h-1V438h-1V456h-1V472h-1V452h-1V453h-1V460h-1V459h-1V454h-1V469h-1V458h-1V459h-1V454h-1V444h-1V464h-1V475h-1V460h-1V482h-1V462h-1V471h-1V447h-1V465h-1V482h-1V464h-1V463h-1V456h-1V465h-1V456h-1V446h-1V456h-1V463h-1V465h-1V449h-1V465h-1V482h-1V467h-1V472h-1V474h-1V473h-1V470h-1V465h-1V473h-1V467h-1V471h-1V451h-1V452h-1V452h-1V462h-1V463h-1V453h-1V459h-1V456h-1V456h-1V481h-1V461h-1V464h-1V459h-1V455h-1V450h-1V458h-1V472h-1V439h-1V455h-1V453h-1V481h-1V482h-1V482h-1V455h-1V474h-1V461h-1V468h-1V459h-1V456h-1V463h-1V455h-1V447h-1V453h-1V474h-1V466h-1V464h-1V456h-1V447h-1V461h-1V459h-1V467h-1V469h-1V454h-1V455h-1V458h-1V450h-1V459h-1V461h-1V465h-1V472h-1V480h-1V478h-1V474h-1V472h-1V482h-1V482h-1V463h-1V460h-1V453h-1V466h-1V456h-1V460h-1V482h-1V463h-1V456h-1V478h-1V464h-1V453h-1V455h-1V473h-1V456h-1V450h-1V480h-1V450h-1V459h-1V455h-1V454h-1V450h-1V463h-1V469h-1V465h-1V457h-1V459h-1V459h-1V460h-1V482h-1V477h-1V468h-1V462h-1V467h-1V452h-1V455h-1V452h-1V450h-1V446h-1V482h-1V463h-1V480h-1V457h-1V455h-1V455h-1V439h-1V467h-1V463h-1V482h-1V465h-1V475h-1V480h-1V460h-1V471h-1V463h-1V482h-1V473h-1V464h-1V482h-1V469h-1V459h-1V456h-1V463h-1V466h-1V462h-1V465h-1V468h-1V465h-1V470h-1V462h-1V464h-1V458h-1V466h-1V459h-1V465h-1V461h-1V460h-1V462h-1V449h-1V461h-1V482h-1V461h-1V455h-1V455h-1V456h-1V470h-1V482h-1V468h-1V467h-1V481h-1V478h-1V458h-1V476h-1V459h-1V462h-1V459h-1V481h-1V464h-1V458h-1V462h-1V480h-1V467h-1V466h-1V467h-1V482h-1V482h-1V471h-1V468h-1V481h-1V470h-1V465h-1V471h-1V472h-1V469h-1V458h-1V462h-1V470h-1V458h-1V452h-1V458h-1V482h-1V460h-1V461h-1V458h-1V469h-1V456h-1V459h-1V466h-1V475h-1V463h-1V481h-1V476h-1V482h-1V481h-1V462h-1V465h-1V455h-1V468h-1V460h-1V456h-1V461h-1V467h-1V468h-1V455h-1V449h-1V462h-1V482h-1V460h-1V467h-1V465h-1V450h-1V482h-1V459h-1V462h-1V470h-1V465h-1V464h-1V462h-1V481h-1V475h-1V482h-1V479h-1V479h-1V482h-1V482h-1V469h-1V459h-1V466h-1V469h-1V458h-1V464h-1V464h-1V482h-1V482h-1V475h-1V482h-1V465h-1V462h-1V461h-1V470h-1V473h-1V482h-1V462h-1V467h-1V467h-1V482h-1V482h-1V472h-1V482h-1V482h-1V477h-1V470h-1V466h-1V458h-1V474h-1V466h-1V467h-1V482h-1V460h-1V453h-1V463h-1V456h-1V460h-1V468h-1V469h-1V461h-1V461h-1V466h-1V455h-1V464h-1V469h-1V469h-1V469h-1V463h-1V466h-1V458h-1V469h-1V482h-1V482h-1V476h-1V455h-1V457h-1V459h-1V460h-1V470h-1V448h-1V459h-1V464h-1V482h-1V457h-1V482h-1V465h-1V482h-1V482h-1V461h-1V477h-1V451h-1V462h-1V470h-1V482h-1V463h-1V468h-1V460h-1V462h-1V464h-1V470h-1V456h-1V463h-1V482h-1V460h-1V455h-1V473h-1V474h-1V465h-1V474h-1V481h-1V465h-1V465h-1V449h-1V456h-1V480h-1V467h-1V459h-1V450h-1V454h-1V482h-1V470h-1V456h-1V471h-1V463h-1V463h-1V447h-1V476h-1V453h-1V462h-1V466h-1V462h-1V458h-1V482h-1V467h-1V468h-1V460h-1V460h-1V471h-1V469h-1V459h-1V482h-1V456h-1V462h-1V456h-1V465h-1V451h-1V459h-1V446h-1V456h-1V454h-1V469h-1V452h-1V478h-1V469h-1V467h-1V447h-1V455h-1V466h-1V477h-1V475h-1V452h-1V456h-1V456h-1V462h-1V451h-1V447h-1V460h-1V465h-1V470h-1V450h-1V472h-1V480h-1V455h-1V444h-1V461h-1V472h-1V456h-1V458h-1V477h-1V462h-1V462h-1V462h-1V482h-1V453h-1V455h-1V456h-1V462h-1V457h-1V466h-1V462h-1V460h-1V467h-1V450h-1V454h-1V450h-1V458h-1V460h-1V454h-1V473h-1V450h-1V467h-1V463h-1V455h-1V452h-1V469h-1V446h-1V453h-1V452h-1V459h-1V461h-1V451h-1V458h-1V452h-1V453h-1V480h-1V458h-1V451h-1V450h-1V454h-1V458h-1V455h-1V460h-1V457h-1V455h-1V481h-1V475h-1V454h-1V457h-1V452h-1V459h-1V482h-1V456h-1V467h-1V461h-1V459h-1V454h-1V451h-1V475h-1V459h-1V454h-1V457h-1V447h-1V452h-1V481h-1V469h-1V456h-1V456h-1V452h-1V463h-1V464h-1V465h-1V473h-1V458h-1V482h-1V482h-1V477h-1V468h-1V460h-1V453h-1V463h-1V462h-1V454h-1V469h-1V449h-1V452h-1V455h-1V466h-1V454h-1V463h-1V461h-1V466h-1V462h-1V451h-1V470h-1V464h-1V457h-1V449h-1V464h-1V454h-1V454h-1V462h-1V467h-1V459h-1V459h-1V482h-1V463h-1V452h-1V476h-1V458h-1V461h-1V462h-1V457h-1V456h-1V481h-1V464h-1V450h-1V464h-1V454h-1V463h-1V451h-1V461h-1V457h-1V455h-1V482h-1V466h-1V482h-1V477h-1V463h-1V471h-1V464h-1V456h-1V462h-1V457h-1V466h-1V466h-1V482h-1V461h-1V450h-1V464h-1V462h-1V475h-1V459h-1V470h-1V482h-1V456h-1V455h-1V454h-1V480h-1V476h-1V482h-1V454h-1V473h-1V482h-1V460h-1V463h-1V462h-1V458h-1V456h-1V466h-1V459h-1V455h-1V459h-1V458h-1V463h-1V474h-1V477h-1V453h-1V459h-1V457h-1V455h-1V477h-1V463h-1V474h-1V482h-1V456h-1V479h-1V462h-1V470h-1V463h-1V462h-1V482h-1V471h-1V465h-1V458h-1V469h-1V459h-1V457h-1V452h-1V456h-1V454h-1V469h-1V471h-1V459h-1V464h-1V468h-1V470h-1V475h-1V462h-1V450h-1V477h-1V470h-1V463h-1V470h-1V482h-1V464h-1V459h-1V460h-1V464h-1V468h-1V456h-1V477h-1V482h-1V458h-1V478h-1V461h-1V482h-1V465h-1V482h-1V471h-1V482h-1V482h-1V465h-1V465h-1V452h-1V474h-1V481h-1V482h-1V462h-1V458h-1V451h-1V465h-1V454h-1V457h-1V456h-1V452h-1V457h-1V468h-1V456h-1V463h-1V456h-1V461h-1V457h-1V475h-1V461h-1V467h-1V461h-1V461h-1V471h-1V458h-1V460h-1V456h-1V459h-1V459h-1V447h-1V453h-1V462h-1V460h-1V465h-1V463h-1V463h-1V465h-1V449h-1V454h-1V456h-1V456h-1V481h-1V482h-1V463h-1V460h-1V452h-1V450h-1V455h-1V453h-1V459h-1V457h-1V482h-1V444h-1V457h-1V460h-1V482h-1V457h-1V461h-1V471h-1V461h-1V462h-1V466h-1V451h-1V456h-1V454h-1V455h-1V461h-1V465h-1V469h-1V482h-1V464h-1V459h-1V459h-1V459h-1V473h-1V462h-1V459h-1V458h-1V461h-1V466h-1V456h-1V463h-1V482h-1V482h-1V454h-1V477h-1V458h-1V480h-1V461h-1V462h-1V469h-1V482h-1V482h-1V466h-1V458h-1V456h-1V470h-1V474h-1V460h-1V473h-1V464h-1V482h-1V460h-1V460h-1V456h-1V463h-1V472h-1V466h-1V458h-1V482h-1V453h-1V457h-1V455h-1V476h-1V450h-1V463h-1V456h-1V479h-1V458h-1V464h-1V457h-1V481h-1V467h-1V458h-1V482h-1V466h-1V467h-1V460h-1V476h-1V462h-1V447h-1V477h-1V464h-1V476h-1V471h-1V482h-1V453h-1V470h-1V476h-1V481h-1V482h-1V457h-1V471h-1V465h-1V466h-1V457h-1V458h-1V457h-1V453h-1V465h-1V461h-1V467h-1V466h-1V464h-1V458h-1V463h-1V452h-1V480h-1V466h-1V467h-1V470h-1V459h-1V459h-1V453h-1V452h-1V457h-1V471h-1V481h-1V469h-1V465h-1V450h-1V473h-1V478h-1V460h-1V458h-1V482h-1V457h-1V466h-1V482h-1V456h-1V453h-1V447h-1V459h-1V450h-1V480h-1V482h-1V454h-1V455h-1V458h-1V465h-1V462h-1V453h-1V453h-1V446h-1V468h-1V459h-1V463h-1V482h-1V482h-1V457h-1V482h-1V460h-1V482h-1V456h-1V466h-1V455h-1V453h-1V456h-1V456h-1V460h-1V450h-1V451h-1V453h-1V465h-1V480h-1V453h-1V465h-1V461h-1V462h-1V477h-1V461h-1V471h-1V469h-1V465h-1V452h-1V482h-1V465h-1V457h-1V450h-1V458h-1V479h-1V473h-1V465h-1V467h-1V474h-1V453h-1V454h-1V467h-1V451h-1V455h-1V451h-1V459h-1V450h-1V462h-1V454h-1V453h-1V456h-1V457h-1V464h-1V452h-1V455h-1V457h-1V451h-1V456h-1V446h-1V454h-1V456h-1V461h-1V470h-1V442h-1V456h-1V463h-1V465h-1V482h-1V473h-1V451h-1V452h-1V451h-1V455h-1V451h-1V446h-1V455h-1V444h-1V470h-1V453h-1V462h-1V460h-1V462h-1V451h-1V458h-1V457h-1V482h-1V461h-1V463h-1V462h-1V447h-1V458h-1V448h-1V482h-1V448h-1V459h-1V457h-1V452h-1V441h-1V463h-1V455h-1V465h-1V469h-1V462h-1V457h-1V452h-1V473h-1V455h-1V450h-1V449h-1V460h-1V447h-1V452h-1V452h-1V461h-1V454h-1V458h-1V481h-1V482h-1V479h-1V480h-1V460h-1V466h-1V465h-1V477h-1V459h-1V469h-1V479h-1V471h-1V454h-1V470h-1V472h-1V481h-1V464h-1V449h-1V461h-1V454h-1V472h-1V453h-1V447h-1V468h-1V443h-1V449h-1V450h-1V451h-1V460h-1V478h-1V451h-1V450h-1V454h-1V456h-1V446h-1V460h-1V482h-1V459h-1V455h-1V463h-1V463h-1V459h-1V445h-1V456h-1V457h-1V454h-1V475h-1V468h-1V453h-1V456h-1V467h-1V482h-1V464h-1V454h-1V464h-1V464h-1V478h-1V458h-1V466h-1V456h-1V464h-1V458h-1V466h-1V471h-1V464h-1V455h-1V444h-1V469h-1V482h-1V466h-1V460h-1V456h-1V454h-1V460h-1V482h-1V482h-1V464h-1V466h-1V453h-1V476h-1V454h-1V482h-1V447h-1V454h-1V460h-1V456h-1V458h-1V454h-1V460h-1V458h-1V457h-1V463h-1V482h-1V463h-1V454h-1V462h-1V454h-1V466h-1V479h-1V482h-1V459h-1V448h-1V451h-1V452h-1V461h-1V471h-1V459h-1V456h-1V456h-1V482h-1V454h-1V462h-1V473h-1V482h-1V452h-1V461h-1V482h-1V455h-1V436h-1V428h-1V413h-1V354h-1V353h-1V353h-1V352h-1V356h-1V358h-1V357h-1V352h-1V352h-1V352h-1V358h-1V360h-1V357h-1V358h-1V360h-1V365h-1V360h-1V358h-1V352h-1V351h-1V352h-1V360h-1V362h-1V358h-1V362h-1V364h-1V366h-1V365h-1V361h-1V358h-1V353h-1V351h-1V353h-1V353h-1V358h-1V360h-1V357h-1V361h-1V364h-1V361h-1V358h-1V352h-1V352h-1V353h-1V353h-1V352h-1V352h-1V355h-1V353h-1V353h-1V353h-1V358h-1V361h-1V358h-1V362h-1V366h-1V364h-1V358h-1V354h-1V353h-1V354h-1V352h-1V352h-1V353h-1V353h-1V353h-1V353h-1V352h-1V353h-1V353h-1V353h-1V351h-1V352h-1V352h-1V353h-1V352h-1V353h-1V352h-1V352h-1V352h-1V353h-1V354h-1V353h-1V353h-1V352h-1V352h-1V352h-1V352h-1V351h-1V352h-1V353h-1V351h-1V352h-1V351h-1V351h-1V352h-1V352h-1V353h-1V353h-1V353h-1V352h-1V352h-1V356h-1V355h-1V352h-1V354h-1V352h-1V352h-1V352h-1V352h-1V354h-1V353h-1V353h-1V353h-1V352h-1V352h-1V352h-1V351h-1V352h-1V353h-1V353h-1V353h-1V353h-1V351h-1V352h-1V353h-1Z" fill="#2a7d57"/>
<path d="M311 349V347h1V347h1V346h1V342h1V347h1V347h1V346h1V345h1V347h1V347h1V347h1V347h1V346h1V346h1V347h1V346h1V347h1V346h1V346h1V346h1V347h1V346h1V342h1V345h1V346h1V347h1V347h1V347h1V347h1V346h1V345h1V346h1V347h1V345h1V346h1V347h1V347h1V346h1V347h1V347h1V347h1V347h1V347h1V347h1V347h1V347h1V345h1V347h1V347h1V346h1V346h1V342h1V346h1V344h1V347h1V346h1V346h1V347h1V345h1V346h1V346h1V346h1V346h1V345h1V347h1V347h1V346h1V346h1V340h1V337h1V332h1V337h1V340h1V337h1V341h1V347h1V347h1V346h1V347h1V347h1V346h1V346h1V346h1V346h1V346h1V340h1V337h1V334h1V337h1V340h1V338h1V339h1V346h1V346h1V347h1V347h1V340h1V338h1V335h1V332h1V334h1V337h1V340h1V332h1V341h1V347h1V346h1V347h1V341h1V338h1V336h1V338h1V341h1V341h1V339h1V342h1V347h1V347h1V346h1V343h1V340h1V338h1V347h1V347h1V346h1V347h1V299h1V306h1V272h1V249h1V263h1V259h1V263h1V252h1V244h1V236h1V238h1V263h1V269h1V266h1V259h1V261h1V267h1V261h1V260h1V243h1V252h1V260h1V254h1V261h1V243h1V241h1V264h1V260h1V260h1V258h1V250h1V239h1V296h1V257h1V235h1V251h1V258h1V239h1V252h1V289h1V234h1V258h1V239h1V244h1V244h1V245h1V313h1V257h1V314h1V247h1V240h1V244h1V224h1V255h1V232h1V241h1V218h1V235h1V250h1V239h1V255h1V260h1V240h1V286h1V264h1V267h1V261h1V244h1V259h1V258h1V240h1V270h1V278h1V254h1V232h1V248h1V235h1V257h1V258h1V253h1V241h1V226h1V245h1V250h1V253h1V254h1V253h1V243h1V303h1V249h1V249h1V243h1V245h1V235h1V250h1V304h1V218h1V314h1V244h1V236h1V220h1V297h1V226h1V294h1V230h1V286h1V234h1V234h1V230h1V279h1V253h1V228h1V220h1V252h1V235h1V254h1V249h1V242h1V220h1V219h1V229h1V263h1V276h1V266h1V258h1V304h1V239h1V245h1V250h1V249h1V263h1V267h1V259h1V264h1V267h1V257h1V255h1V256h1V248h1V224h1V231h1V246h1V262h1V273h1V239h1V264h1V263h1V273h1V230h1V238h1V240h1V251h1V245h1V252h1V241h1V243h1V250h1V249h1V222h1V251h1V254h1V257h1V263h1V262h1V266h1V274h1V269h1V263h1V259h1V249h1V247h1V252h1V320h1V310h1V306h1V244h1V272h1V276h1V272h1V313h1V252h1V257h1V246h1V273h1V241h1V251h1V255h1V259h1V267h1V268h1V262h1V268h1V278h1V267h1V260h1V263h1V257h1V288h1V258h1V266h1V254h1V259h1V250h1V259h1V264h1V260h1V253h1V277h1V283h1V249h1V318h1V248h1V264h1V307h1V244h1V268h1V269h1V262h1V248h1V240h1V247h1V255h1V262h1V244h1V272h1V261h1V253h1V250h1V255h1V289h1V234h1V301h1V259h1V266h1V259h1V256h1V260h1V236h1V258h1V233h1V246h1V242h1V230h1V266h1V253h1V266h1V318h1V241h1V223h1V247h1V257h1V269h1V299h1V279h1V316h1V255h1V252h1V253h1V249h1V243h1V246h1V256h1V255h1V229h1V242h1V258h1V284h1V251h1V242h1V244h1V237h1V218h1V222h1V235h1V250h1V292h1V250h1V241h1V244h1V248h1V250h1V251h1V237h1V218h1V239h1V239h1V264h1V240h1V253h1V259h1V258h1V245h1V230h1V234h1V245h1V244h1V247h1V242h1V240h1V241h1V252h1V257h1V254h1V251h1V236h1V245h1V245h1V248h1V239h1V260h1V268h1V275h1V268h1V250h1V242h1V297h1V248h1V279h1V223h1V218h1V218h1V235h1V251h1V251h1V255h1V261h1V246h1V242h1V226h1V242h1V246h1V252h1V247h1V244h1V284h1V259h1V294h1V311h1V264h1V259h1V246h1V248h1V250h1V243h1V255h1V252h1V254h1V246h1V228h1V240h1V235h1V223h1V314h1V259h1V258h1V252h1V253h1V244h1V233h1V248h1V233h1V218h1V227h1V224h1V218h1V234h1V240h1V254h1V244h1V310h1V232h1V292h1V312h1V229h1V224h1V243h1V220h1V239h1V230h1V246h1V236h1V254h1V253h1V251h1V250h1V252h1V253h1V303h1V288h1V231h1V240h1V245h1V285h1V255h1V268h1V269h1V260h1V252h1V238h1V237h1V244h1V284h1V238h1V245h1V241h1V242h1V312h1V252h1V257h1V252h1V232h1V229h1V249h1V253h1V256h1V256h1V263h1V240h1V295h1V244h1V257h1V260h1V249h1V242h1V239h1V240h1V252h1V258h1V248h1V253h1V254h1V235h1V308h1V265h1V269h1V257h1V244h1V240h1V249h1V255h1V260h1V266h1V274h1V267h1V252h1V249h1V315h1V246h1V241h1V218h1V246h1V228h1V252h1V235h1V252h1V250h1V249h1V244h1V236h1V225h1V226h1V235h1V250h1V251h1V235h1V245h1V241h1V230h1V247h1V218h1V245h1V257h1V236h1V259h1V250h1V218h1V243h1V261h1V255h1V236h1V254h1V262h1V249h1V242h1V245h1V244h1V218h1V218h1V233h1V243h1V247h1V257h1V233h1V264h1V272h1V245h1V260h1V244h1V241h1V251h1V247h1V289h1V307h1V237h1V239h1V234h1V218h1V305h1V240h1V247h1V252h1V246h1V246h1V228h1V226h1V295h1V252h1V241h1V256h1V265h1V271h1V277h1V255h1V265h1V263h1V271h1V242h1V261h1V256h1V249h1V242h1V218h1V241h1V248h1V245h1V235h1V236h1V261h1V264h1V239h1V254h1V252h1V257h1V261h1V254h1V231h1V218h1V228h1V252h1V252h1V248h1V254h1V255h1V256h1V308h1V253h1V292h1V237h1V251h1V231h1V257h1V258h1V258h1V256h1V248h1V245h1V254h1V265h1V243h1V242h1V246h1V300h1V283h1V266h1V275h1V270h1V255h1V233h1V252h1V266h1V270h1V257h1V247h1V257h1V244h1V218h1V235h1V218h1V237h1V220h1V254h1V254h1V248h1V229h1V236h1V238h1V222h1V228h1V236h1V257h1V281h1V245h1V233h1V313h1V249h1V246h1V246h1V235h1V277h1V278h1V267h1V264h1V261h1V285h1V252h1V252h1V246h1V257h1V257h1V256h1V246h1V248h1V314h1V238h1V264h1V273h1V277h1V256h1V221h1V251h1V254h1V251h1V239h1V243h1V234h1V254h1V265h1V260h1V237h1V221h1V234h1V300h1V241h1V269h1V275h1V313h1V267h1V245h1V244h1V246h1V296h1V299h1V229h1V223h1V240h1V269h1V267h1V247h1V293h1V247h1V267h1V241h1V259h1V262h1V260h1V255h1V250h1V249h1V256h1V235h1V252h1V302h1V235h1V282h1V252h1V263h1V254h1V300h1V318h1V301h1V241h1V242h1V246h1V250h1V253h1V254h1V253h1V256h1V233h1V246h1V244h1V235h1V251h1V251h1V241h1V248h1V254h1V255h1V294h1V253h1V255h1V311h1V228h1V241h1V249h1V278h1V303h1V310h1V304h1V252h1V263h1V242h1V253h1V252h1V252h1V249h1V247h1V256h1V266h1V242h1V252h1V259h1V266h1V260h1V254h1V250h1V243h1V221h1V231h1V232h1V321h1V222h1V228h1V246h1V235h1V250h1V255h1V254h1V236h1V257h1V249h1V250h1V240h1V261h1V307h1V218h1V241h1V242h1V230h1V287h1V227h1V238h1V218h1V318h1V256h1V266h1V257h1V291h1V242h1V227h1V218h1V227h1V251h1V249h1V238h1V230h1V235h1V229h1V267h1V241h1V251h1V242h1V240h1V303h1V232h1V251h1V249h1V243h1V240h1V246h1V244h1V231h1V227h1V241h1V251h1V289h1V227h1V223h1V225h1V256h1V250h1V245h1V235h1V241h1V228h1V257h1V239h1V253h1V244h1V239h1V233h1V238h1V228h1V247h1V309h1V228h1V218h1V218h1V224h1V241h1V233h1V227h1V240h1V245h1V236h1V237h1V307h1V256h1V250h1V232h1V314h1V241h1V248h1V221h1V243h1V244h1V249h1V241h1V235h1V256h1V253h1V237h1V245h1V246h1V254h1V270h1V265h1V239h1V242h1V233h1V247h1V267h1V241h1V247h1V238h1V242h1V243h1V232h1V218h1V302h1V241h1V245h1V240h1V241h1V251h1V254h1V252h1V257h1V257h1V253h1V255h1V259h1V239h1V228h1V297h1V240h1V252h1V237h1V251h1V238h1V246h1V259h1V234h1V240h1V235h1V240h1V251h1V244h1V260h1V247h1V236h1V254h1V256h1V245h1V238h1V232h1V235h1V317h1V281h1V256h1V272h1V263h1V256h1V319h1V254h1V241h1V231h1V255h1V250h1V320h1V252h1V256h1V241h1V248h1V243h1V244h1V246h1V245h1V239h1V240h1V247h1V247h1V240h1V234h1V247h1V252h1V258h1V318h1V257h1V261h1V255h1V237h1V218h1V249h1V251h1V236h1V229h1V249h1V235h1V254h1V255h1V257h1V246h1V261h1V293h1V262h1V250h1V292h1V284h1V249h1V241h1V238h1V240h1V258h1V256h1V243h1V254h1V248h1V321h1V267h1V269h1V260h1V283h1V305h1V219h1V254h1V245h1V252h1V250h1V244h1V274h1V263h1V260h1V246h1V256h1V244h1V256h1V247h1V247h1V229h1V233h1V251h1V257h1V270h1V258h1V249h1V218h1V242h1V242h1V240h1V247h1V251h1V264h1V315h1V234h1V229h1V251h1V259h1V236h1V225h1V238h1V248h1V249h1V248h1V256h1V264h1V282h1V241h1V244h1V243h1V261h1V305h1V250h1V223h1V247h1V259h1V247h1V254h1V239h1V241h1V303h1V247h1V320h1V265h1V241h1V265h1V270h1V265h1V240h1V235h1V254h1V254h1V249h1V242h1V238h1V244h1V248h1V236h1V247h1V281h1V258h1V236h1V245h1V240h1V246h1V231h1V247h1V227h1V249h1V222h1V241h1V237h1V241h1V245h1V232h1V248h1V307h1V244h1V240h1V257h1V270h1V264h1V248h1V294h1V248h1V287h1V263h1V258h1V239h1V292h1V260h1V264h1V235h1V247h1V241h1V245h1V253h1V250h1V244h1V254h1V262h1V244h1V244h1V239h1V245h1V256h1V244h1V253h1V298h1V233h1V242h1V251h1V254h1V246h1V222h1V233h1V233h1V243h1V266h1V275h1V296h1V316h1V229h1V248h1V296h1V251h1V252h1V254h1V255h1V254h1V255h1V258h1V265h1V267h1V258h1V229h1V301h1V249h1V262h1V261h1V250h1V219h1V252h1V258h1V257h1V287h1V261h1V256h1V248h1V257h1V251h1V257h1V218h1V240h1V246h1V349V439h-1V435h-1V424h-1V418h-1V455h-1V425h-1V429h-1V460h-1V444h-1V442h-1V456h-1V426h-1V446h-1V449h-1V440h-1V457h-1V429h-1V442h-1V465h-1V428h-1V395h-1V431h-1V422h-1V407h-1V415h-1V447h-1V465h-1V442h-1V392h-1V461h-1V443h-1V395h-1V470h-1V471h-1V462h-1V463h-1V446h-1V437h-1V445h-1V443h-1V468h-1V455h-1V473h-1V435h-1V432h-1V441h-1V436h-1V437h-1V437h-1V435h-1V442h-1V460h-1V438h-1V433h-1V441h-1V434h-1V440h-1V472h-1V458h-1V474h-1V449h-1V442h-1V439h-1V450h-1V457h-1V454h-1V449h-1V454h-1V465h-1V440h-1V438h-1V446h-1V443h-1V416h-1V440h-1V453h-1V446h-1V455h-1V457h-1V468h-1V466h-1V469h-1V448h-1V440h-1V430h-1V427h-1V426h-1V408h-1V444h-1V450h-1V378h-1V449h-1V435h-1V453h-1V452h-1V455h-1V454h-1V450h-1V447h-1V441h-1V445h-1V453h-1V465h-1V433h-1V439h-1V447h-1V457h-1V460h-1V465h-1V449h-1V471h-1V445h-1V445h-1V400h-1V445h-1V445h-1V395h-1V412h-1V408h-1V472h-1V457h-1V455h-1V389h-1V399h-1V439h-1V433h-1V448h-1V385h-1V429h-1V427h-1V447h-1V393h-1V447h-1V447h-1V455h-1V461h-1V474h-1V472h-1V460h-1V469h-1V473h-1V469h-1V462h-1V431h-1V435h-1V460h-1V440h-1V444h-1V476h-1V440h-1V428h-1V443h-1V434h-1V428h-1V441h-1V454h-1V393h-1V433h-1V451h-1V448h-1V446h-1V452h-1V434h-1V435h-1V440h-1V432h-1V464h-1V457h-1V434h-1V429h-1V441h-1V473h-1V455h-1V459h-1V462h-1V390h-1V442h-1V414h-1V439h-1V380h-1V434h-1V441h-1V458h-1V480h-1V456h-1V444h-1V449h-1V439h-1V465h-1V457h-1V451h-1V450h-1V464h-1V464h-1V436h-1V441h-1V456h-1V480h-1V468h-1V464h-1V469h-1V454h-1V445h-1V448h-1V456h-1V450h-1V458h-1V461h-1V463h-1V461h-1V455h-1V439h-1V433h-1V441h-1V452h-1V413h-1V455h-1V377h-1V457h-1V460h-1V444h-1V457h-1V457h-1V453h-1V448h-1V453h-1V454h-1V469h-1V475h-1V461h-1V463h-1V480h-1V477h-1V405h-1V463h-1V452h-1V436h-1V449h-1V474h-1V402h-1V446h-1V457h-1V462h-1V459h-1V452h-1V463h-1V455h-1V478h-1V471h-1V457h-1V480h-1V468h-1V449h-1V452h-1V458h-1V467h-1V444h-1V387h-1V461h-1V438h-1V442h-1V455h-1V460h-1V454h-1V459h-1V455h-1V462h-1V446h-1V458h-1V465h-1V418h-1V445h-1V472h-1V464h-1V480h-1V458h-1V460h-1V464h-1V449h-1V437h-1V447h-1V452h-1V449h-1V452h-1V465h-1V451h-1V410h-1V413h-1V444h-1V451h-1V451h-1V445h-1V448h-1V468h-1V449h-1V453h-1V460h-1V413h-1V440h-1V441h-1V446h-1V457h-1V471h-1V469h-1V477h-1V474h-1V466h-1V460h-1V456h-1V457h-1V460h-1V389h-1V459h-1V455h-1V472h-1V450h-1V474h-1V472h-1V463h-1V451h-1V450h-1V469h-1V457h-1V468h-1V456h-1V462h-1V464h-1V466h-1V464h-1V470h-1V473h-1V465h-1V460h-1V466h-1V463h-1V447h-1V470h-1V457h-1V466h-1V453h-1V455h-1V452h-1V441h-1V439h-1V437h-1V466h-1V451h-1V455h-1V388h-1V455h-1V431h-1V384h-1V449h-1V448h-1V448h-1V453h-1V465h-1V457h-1V467h-1V478h-1V475h-1V468h-1V397h-1V387h-1V449h-1V443h-1V459h-1V434h-1V402h-1V447h-1V454h-1V446h-1V455h-1V464h-1V460h-1V457h-1V454h-1V473h-1V441h-1V439h-1V461h-1V453h-1V458h-1V458h-1V451h-1V449h-1V454h-1V458h-1V437h-1V449h-1V480h-1V408h-1V377h-1V467h-1V473h-1V457h-1V461h-1V459h-1V445h-1V458h-1V434h-1V453h-1V479h-1V465h-1V391h-1V443h-1V451h-1V462h-1V461h-1V454h-1V459h-1V393h-1V458h-1V439h-1V451h-1V447h-1V454h-1V464h-1V446h-1V451h-1V455h-1V455h-1V465h-1V427h-1V427h-1V439h-1V464h-1V455h-1V462h-1V446h-1V436h-1V452h-1V465h-1V432h-1V448h-1V392h-1V443h-1V449h-1V467h-1V447h-1V444h-1V444h-1V443h-1V442h-1V440h-1V464h-1V450h-1V452h-1V441h-1V427h-1V432h-1V441h-1V439h-1V442h-1V446h-1V450h-1V459h-1V449h-1V452h-1V477h-1V443h-1V428h-1V404h-1V468h-1V437h-1V440h-1V455h-1V429h-1V430h-1V443h-1V474h-1V388h-1V416h-1V453h-1V454h-1V454h-1V445h-1V429h-1V436h-1V463h-1V447h-1V397h-1V403h-1V425h-1V449h-1V438h-1V438h-1V433h-1V443h-1V462h-1V449h-1V444h-1V444h-1V432h-1V433h-1V421h-1V431h-1V436h-1V438h-1V448h-1V449h-1V436h-1V444h-1V393h-1V423h-1V420h-1V420h-1V454h-1V429h-1V437h-1V444h-1V454h-1V480h-1V474h-1V442h-1V395h-1V450h-1V398h-1V471h-1V450h-1V466h-1V457h-1V452h-1V450h-1V443h-1V470h-1V451h-1V439h-1V448h-1V443h-1V447h-1V473h-1V467h-1V446h-1V436h-1V413h-1V452h-1V456h-1V460h-1V470h-1V453h-1V468h-1V455h-1V473h-1V459h-1V407h-1V411h-1V451h-1V444h-1V432h-1V463h-1V440h-1V438h-1V452h-1V462h-1V451h-1V384h-1V457h-1V464h-1V461h-1V447h-1V462h-1V450h-1V442h-1V431h-1V438h-1V441h-1V442h-1V440h-1V459h-1V444h-1V453h-1V462h-1V462h-1V420h-1V446h-1V452h-1V455h-1V449h-1V445h-1V448h-1V475h-1V390h-1V387h-1V442h-1V435h-1V438h-1V445h-1V406h-1V429h-1V448h-1V465h-1V464h-1V473h-1V470h-1V442h-1V446h-1V448h-1V452h-1V443h-1V436h-1V442h-1V455h-1V473h-1V449h-1V435h-1V453h-1V447h-1V455h-1V450h-1V469h-1V480h-1V451h-1V413h-1V436h-1V446h-1V448h-1V463h-1V454h-1V462h-1V479h-1V449h-1V455h-1V460h-1V454h-1V445h-1V385h-1V440h-1V441h-1V444h-1V454h-1V458h-1V473h-1V475h-1V449h-1V404h-1V455h-1V445h-1V471h-1V443h-1V458h-1V455h-1V450h-1V441h-1V439h-1V463h-1V434h-1V440h-1V464h-1V468h-1V380h-1V447h-1V453h-1V448h-1V444h-1V444h-1V450h-1V452h-1V466h-1V441h-1V441h-1V413h-1V461h-1V401h-1V475h-1V445h-1V446h-1V455h-1V460h-1V460h-1V463h-1V480h-1V462h-1V449h-1V436h-1V432h-1V390h-1V445h-1V473h-1V480h-1V407h-1V456h-1V453h-1V450h-1V458h-1V480h-1V464h-1V457h-1V474h-1V439h-1V384h-1V445h-1V456h-1V469h-1V460h-1V443h-1V436h-1V437h-1V450h-1V435h-1V434h-1V433h-1V448h-1V457h-1V432h-1V435h-1V446h-1V442h-1V451h-1V457h-1V471h-1V456h-1V447h-1V434h-1V450h-1V453h-1V448h-1V457h-1V403h-1V438h-1V426h-1V428h-1V425h-1V426h-1V438h-1V459h-1V461h-1V462h-1V443h-1V440h-1V438h-1V443h-1V455h-1V459h-1V451h-1V441h-1V437h-1V442h-1V448h-1V453h-1V447h-1V453h-1V406h-1V480h-1V416h-1V455h-1V453h-1V453h-1V452h-1V457h-1V447h-1V395h-1V458h-1V448h-1V392h-1V385h-1V452h-1V443h-1V443h-1V450h-1V384h-1V469h-1V435h-1V441h-1V452h-1V453h-1V462h-1V447h-1V433h-1V426h-1V437h-1V462h-1V444h-1V452h-1V464h-1V476h-1V418h-1V454h-1V443h-1V457h-1V456h-1V457h-1V467h-1V469h-1V471h-1V459h-1V442h-1V445h-1V470h-1V460h-1V453h-1V460h-1V445h-1V468h-1V416h-1V409h-1V444h-1V442h-1V470h-1V445h-1V379h-1V468h-1V393h-1V451h-1V451h-1V458h-1V392h-1V399h-1V455h-1V458h-1V450h-1V458h-1V450h-1V456h-1V464h-1V458h-1V446h-1V451h-1V461h-1V451h-1V445h-1V455h-1V419h-1V450h-1V438h-1V456h-1V471h-1V468h-1V448h-1V457h-1V475h-1V480h-1V474h-1V377h-1V439h-1V435h-1V438h-1V452h-1V453h-1V411h-1V426h-1V423h-1V431h-1V441h-1V445h-1V454h-1V454h-1V447h-1V444h-1V470h-1V465h-1V459h-1V468h-1V456h-1V447h-1V433h-1V440h-1V444h-1V471h-1V480h-1V458h-1V451h-1V449h-1V450h-1V474h-1V450h-1V449h-1V465h-1V456h-1V464h-1V457h-1V438h-1V434h-1V435h-1V443h-1V436h-1V451h-1V452h-1V429h-1V410h-1V447h-1V443h-1V452h-1V446h-1V427h-1V430h-1V466h-1V451h-1V450h-1V456h-1V461h-1V445h-1V464h-1V391h-1V462h-1V452h-1V445h-1V443h-1V406h-1V452h-1V392h-1V432h-1V445h-1V449h-1V406h-1V449h-1V457h-1V448h-1V438h-1V458h-1V461h-1V473h-1V417h-1V467h-1V443h-1V443h-1V448h-1V454h-1V463h-1V430h-1V433h-1V437h-1V455h-1V450h-1V456h-1V444h-1V467h-1V443h-1V447h-1V439h-1V423h-1V423h-1V432h-1V454h-1V438h-1V455h-1V414h-1V447h-1V447h-1V443h-1V434h-1V380h-1V416h-1V422h-1V448h-1V433h-1V435h-1V454h-1V438h-1V435h-1V438h-1V437h-1V436h-1V388h-1V454h-1V460h-1V473h-1V429h-1V427h-1V436h-1V418h-1V427h-1V429h-1V432h-1V434h-1V455h-1V449h-1V461h-1V443h-1V436h-1V441h-1V441h-1V446h-1V476h-1V408h-1V447h-1V446h-1V399h-1V455h-1V439h-1V466h-1V377h-1V440h-1V442h-1V435h-1V434h-1V441h-1V443h-1V465h-1V454h-1V452h-1V396h-1V441h-1V448h-1V440h-1V437h-1V441h-1V430h-1V427h-1V431h-1V431h-1V407h-1V446h-1V444h-1V476h-1V458h-1V476h-1V449h-1V443h-1V453h-1V462h-1V441h-1V455h-1V448h-1V479h-1V454h-1V447h-1V440h-1V464h-1V461h-1V463h-1V448h-1V459h-1V447h-1V453h-1V442h-1V444h-1V446h-1V434h-1V436h-1V447h-1V444h-1V437h-1V456h-1V436h-1V437h-1V434h-1V434h-1V442h-1V458h-1V455h-1V441h-1V437h-1V440h-1V413h-1V452h-1V388h-1V444h-1V434h-1V441h-1V474h-1V440h-1V435h-1V437h-1V451h-1V480h-1V458h-1V406h-1V431h-1V426h-1V423h-1V455h-1V444h-1V451h-1V449h-1V406h-1V466h-1V469h-1V429h-1V429h-1V381h-1V460h-1V472h-1V456h-1V442h-1V451h-1V382h-1V409h-1V480h-1V475h-1V448h-1V462h-1V397h-1V452h-1V451h-1V460h-1V429h-1V435h-1V439h-1V412h-1V447h-1V420h-1V451h-1V389h-1V436h-1V409h-1V462h-1V457h-1V449h-1V461h-1V382h-1V441h-1V465h-1V473h-1V450h-1V439h-1V429h-1V451h-1V436h-1V462h-1V438h-1V399h-1V454h-1V449h-1V408h-1V450h-1V456h-1V480h-1V418h-1V457h-1V472h-1V451h-1V385h-1V378h-1V406h-1V353h-1V351h-1V352h-1V352h-1V355h-1V358h-1V356h-1V352h-1V352h-1V352h-1V356h-1V360h-1V356h-1V358h-1V359h-1V364h-1V360h-1V358h-1V352h-1V351h-1V352h-1V359h-1V361h-1V357h-1V360h-1V364h-1V366h-1V364h-1V361h-1V357h-1V351h-1V351h-1V353h-1V352h-1V357h-1V360h-1V357h-1V361h-1V364h-1V360h-1V358h-1V351h-1V351h-1V352h-1V351h-1V352h-1V352h-1V355h-1V353h-1V352h-1V352h-1V356h-1V360h-1V357h-1V361h-1V365h-1V363h-1V358h-1V354h-1V352h-1V352h-1V352h-1V351h-1V352h-1V353h-1V351h-1V352h-1V351h-1V352h-1V352h-1V352h-1V351h-1V352h-1V351h-1V352h-1V351h-1V351h-1V351h-1V351h-1V352h-1V352h-1V353h-1V352h-1V351h-1V351h-1V352h-1V351h-1V352h-1V351h-1V352h-1V352h-1V351h-1V351h-1V351h-1V351h-1V351h-1V352h-1V352h-1V352h-1V352h-1V352h-1V352h-1V354h-1V354h-1V351h-1V353h-1V352h-1V352h-1V351h-1V352h-1V354h-1V352h-1V353h-1V352h-1V351h-1V352h-1V351h-1V351h-1V352h-1V352h-1V352h-1V352h-1V352h-1V351h-1V351h-1V352h-1Z" fill="#45db97"/>
<path d="M311 685V683h1V682h1V682h1V682h1V681h1V682h1V681h1V680h1V681h1V681h1V682h1V682h1V682h1V681h1V683h1V681h1V681h1V681h1V681h1V680h1V681h1V682h1V682h1V682h1V682h1V680h1V681h1V681h1V681h1V681h1V683h1V683h1V681h1V681h1V681h1V683h1V682h1V683h1V682h1V681h1V683h1V682h1V683h1V683h1V681h1V682h1V682h1V682h1V682h1V680h1V680h1V681h1V683h1V683h1V681h1V680h1V682h1V681h1V682h1V682h1V683h1V682h1V681h1V682h1V682h1V675h1V681h1V681h1V676h1V673h1V667h1V671h1V672h1V673h1V677h1V681h1V682h1V682h1V682h1V683h1V683h1V682h1V683h1V680h1V682h1V676h1V672h1V668h1V672h1V676h1V673h1V676h1V682h1V676h1V681h1V680h1V676h1V672h1V668h1V665h1V669h1V673h1V674h1V672h1V676h1V681h1V682h1V682h1V675h1V674h1V670h1V674h1V675h1V678h1V673h1V677h1V678h1V683h1V682h1V679h1V676h1V679h1V680h1V676h1V682h1V682h1V617h1V605h1V577h1V552h1V572h1V561h1V560h1V569h1V555h1V569h1V579h1V567h1V553h1V573h1V562h1V556h1V564h1V568h1V570h1V561h1V574h1V565h1V567h1V563h1V573h1V569h1V552h1V552h1V554h1V566h1V572h1V565h1V552h1V552h1V569h1V552h1V567h1V567h1V565h1V558h1V555h1V572h1V575h1V552h1V567h1V564h1V571h1V552h1V571h1V580h1V555h1V557h1V552h1V558h1V579h1V576h1V565h1V580h1V569h1V578h1V578h1V579h1V567h1V572h1V564h1V571h1V570h1V552h1V564h1V582h1V562h1V583h1V576h1V576h1V583h1V574h1V579h1V560h1V552h1V570h1V572h1V571h1V581h1V575h1V571h1V574h1V565h1V574h1V570h1V573h1V556h1V564h1V566h1V563h1V567h1V558h1V570h1V573h1V572h1V582h1V552h1V561h1V580h1V552h1V569h1V569h1V554h1V563h1V552h1V579h1V565h1V567h1V568h1V557h1V552h1V575h1V579h1V576h1V556h1V570h1V588h1V580h1V572h1V577h1V575h1V566h1V574h1V575h1V570h1V583h1V580h1V578h1V571h1V554h1V577h1V569h1V579h1V580h1V573h1V552h1V567h1V566h1V569h1V552h1V573h1V571h1V552h1V571h1V579h1V574h1V578h1V572h1V569h1V562h1V577h1V574h1V558h1V552h1V579h1V567h1V556h1V566h1V566h1V563h1V571h1V578h1V574h1V572h1V579h1V568h1V575h1V561h1V577h1V572h1V572h1V567h1V552h1V576h1V585h1V575h1V566h1V572h1V573h1V572h1V559h1V578h1V562h1V569h1V567h1V581h1V569h1V581h1V574h1V552h1V568h1V582h1V559h1V576h1V573h1V564h1V578h1V579h1V573h1V573h1V571h1V571h1V578h1V574h1V573h1V573h1V578h1V584h1V578h1V555h1V552h1V565h1V564h1V573h1V570h1V563h1V585h1V552h1V573h1V568h1V566h1V578h1V585h1V569h1V573h1V574h1V581h1V576h1V561h1V572h1V583h1V578h1V580h1V576h1V573h1V571h1V577h1V563h1V566h1V574h1V552h1V573h1V574h1V577h1V566h1V580h1V579h1V578h1V578h1V579h1V571h1V552h1V578h1V572h1V571h1V571h1V579h1V574h1V553h1V577h1V578h1V585h1V585h1V578h1V581h1V585h1V576h1V574h1V583h1V574h1V572h1V572h1V580h1V573h1V571h1V573h1V565h1V582h1V579h1V577h1V552h1V574h1V578h1V576h1V578h1V584h1V579h1V580h1V580h1V587h1V552h1V574h1V579h1V577h1V585h1V581h1V582h1V572h1V581h1V586h1V578h1V581h1V577h1V578h1V578h1V567h1V579h1V578h1V563h1V576h1V573h1V581h1V569h1V560h1V552h1V567h1V577h1V565h1V592h1V582h1V579h1V577h1V578h1V577h1V564h1V577h1V582h1V588h1V567h1V591h1V580h1V569h1V583h1V575h1V573h1V579h1V570h1V567h1V574h1V568h1V580h1V573h1V578h1V581h1V572h1V576h1V564h1V556h1V580h1V566h1V552h1V580h1V580h1V581h1V575h1V576h1V552h1V568h1V573h1V579h1V578h1V571h1V571h1V573h1V571h1V577h1V565h1V577h1V578h1V579h1V573h1V575h1V581h1V592h1V579h1V563h1V574h1V552h1V582h1V586h1V552h1V568h1V581h1V577h1V575h1V584h1V590h1V570h1V572h1V552h1V573h1V576h1V581h1V579h1V573h1V581h1V577h1V580h1V580h1V572h1V572h1V552h1V552h1V571h1V575h1V579h1V575h1V582h1V552h1V582h1V579h1V583h1V568h1V567h1V570h1V567h1V579h1V584h1V582h1V570h1V576h1V579h1V573h1V574h1V566h1V574h1V578h1V563h1V565h1V576h1V583h1V577h1V578h1V571h1V552h1V577h1V572h1V582h1V576h1V556h1V560h1V569h1V554h1V579h1V581h1V576h1V581h1V553h1V552h1V566h1V575h1V559h1V566h1V574h1V553h1V577h1V567h1V566h1V557h1V572h1V573h1V569h1V582h1V583h1V574h1V574h1V570h1V575h1V574h1V552h1V571h1V573h1V572h1V552h1V567h1V582h1V575h1V568h1V578h1V575h1V557h1V567h1V559h1V565h1V578h1V568h1V587h1V571h1V575h1V568h1V552h1V553h1V572h1V557h1V575h1V580h1V582h1V577h1V570h1V571h1V570h1V581h1V577h1V579h1V569h1V574h1V566h1V564h1V566h1V570h1V573h1V563h1V552h1V568h1V552h1V560h1V552h1V552h1V563h1V573h1V570h1V574h1V566h1V552h1V582h1V564h1V564h1V552h1V559h1V563h1V578h1V588h1V571h1V564h1V569h1V569h1V581h1V566h1V574h1V556h1V577h1V562h1V552h1V570h1V567h1V565h1V559h1V561h1V564h1V552h1V552h1V558h1V565h1V557h1V560h1V574h1V564h1V577h1V565h1V566h1V559h1V567h1V569h1V554h1V570h1V556h1V563h1V566h1V573h1V572h1V574h1V581h1V579h1V557h1V566h1V567h1V582h1V566h1V570h1V578h1V565h1V574h1V579h1V573h1V563h1V578h1V564h1V575h1V569h1V568h1V573h1V561h1V576h1V563h1V574h1V552h1V552h1V581h1V578h1V574h1V581h1V576h1V570h1V571h1V577h1V568h1V582h1V574h1V574h1V568h1V584h1V572h1V575h1V556h1V577h1V581h1V579h1V574h1V575h1V552h1V571h1V563h1V574h1V575h1V569h1V570h1V573h1V574h1V578h1V567h1V571h1V572h1V557h1V574h1V558h1V552h1V570h1V576h1V571h1V564h1V575h1V571h1V573h1V579h1V566h1V577h1V577h1V555h1V585h1V554h1V567h1V569h1V552h1V552h1V569h1V567h1V574h1V552h1V567h1V563h1V582h1V564h1V557h1V579h1V578h1V569h1V552h1V560h1V564h1V573h1V568h1V562h1V571h1V586h1V586h1V583h1V577h1V552h1V569h1V567h1V578h1V567h1V572h1V576h1V562h1V552h1V578h1V566h1V552h1V567h1V575h1V581h1V578h1V571h1V572h1V577h1V580h1V567h1V567h1V561h1V552h1V574h1V580h1V565h1V579h1V565h1V578h1V574h1V578h1V578h1V555h1V582h1V573h1V568h1V568h1V579h1V566h1V569h1V583h1V571h1V572h1V570h1V552h1V572h1V573h1V552h1V560h1V578h1V575h1V579h1V578h1V585h1V576h1V576h1V566h1V578h1V584h1V579h1V579h1V561h1V567h1V568h1V582h1V576h1V573h1V580h1V569h1V577h1V572h1V577h1V562h1V588h1V572h1V570h1V552h1V573h1V575h1V580h1V572h1V571h1V575h1V571h1V573h1V569h1V567h1V566h1V569h1V578h1V573h1V569h1V573h1V579h1V584h1V575h1V576h1V559h1V553h1V577h1V574h1V580h1V562h1V572h1V563h1V578h1V564h1V557h1V566h1V582h1V570h1V563h1V573h1V579h1V556h1V564h1V571h1V565h1V572h1V560h1V569h1V572h1V559h1V552h1V552h1V561h1V573h1V565h1V552h1V557h1V586h1V559h1V578h1V577h1V573h1V578h1V561h1V552h1V565h1V571h1V552h1V552h1V565h1V579h1V567h1V576h1V557h1V569h1V568h1V568h1V574h1V572h1V576h1V576h1V557h1V569h1V571h1V579h1V569h1V577h1V580h1V563h1V571h1V564h1V575h1V566h1V572h1V575h1V576h1V552h1V576h1V579h1V559h1V568h1V581h1V559h1V562h1V574h1V572h1V572h1V567h1V568h1V573h1V577h1V576h1V567h1V552h1V574h1V570h1V568h1V570h1V575h1V573h1V579h1V570h1V573h1V578h1V562h1V571h1V575h1V571h1V552h1V552h1V556h1V566h1V554h1V552h1V562h1V572h1V563h1V562h1V552h1V552h1V552h1V562h1V559h1V571h1V571h1V552h1V563h1V573h1V569h1V578h1V579h1V588h1V570h1V552h1V569h1V565h1V573h1V568h1V575h1V588h1V570h1V562h1V563h1V567h1V568h1V572h1V560h1V560h1V552h1V568h1V552h1V552h1V576h1V570h1V564h1V569h1V574h1V566h1V553h1V554h1V566h1V571h1V569h1V562h1V574h1V579h1V577h1V552h1V573h1V561h1V574h1V576h1V566h1V569h1V569h1V574h1V566h1V575h1V552h1V569h1V565h1V562h1V569h1V572h1V571h1V573h1V562h1V552h1V575h1V567h1V572h1V580h1V579h1V571h1V564h1V578h1V577h1V565h1V560h1V572h1V555h1V570h1V571h1V577h1V573h1V563h1V577h1V565h1V581h1V575h1V562h1V569h1V552h1V576h1V577h1V556h1V572h1V571h1V568h1V567h1V556h1V588h1V552h1V552h1V565h1V566h1V572h1V572h1V556h1V579h1V577h1V557h1V574h1V575h1V574h1V575h1V564h1V575h1V576h1V575h1V558h1V571h1V582h1V566h1V577h1V580h1V574h1V581h1V583h1V571h1V573h1V568h1V574h1V574h1V567h1V568h1V576h1V552h1V565h1V555h1V580h1V577h1V552h1V576h1V572h1V569h1V577h1V585h1V570h1V568h1V552h1V569h1V573h1V574h1V569h1V576h1V571h1V568h1V575h1V582h1V570h1V561h1V561h1V576h1V566h1V570h1V571h1V567h1V577h1V552h1V559h1V578h1V586h1V552h1V580h1V552h1V563h1V573h1V578h1V581h1V572h1V581h1V580h1V575h1V571h1V574h1V553h1V577h1V574h1V552h1V570h1V552h1V563h1V553h1V577h1V575h1V552h1V564h1V555h1V552h1V574h1V571h1V567h1V566h1V563h1V552h1V565h1V552h1V565h1V552h1V555h1V575h1V569h1V570h1V552h1V566h1V562h1V573h1V563h1V575h1V569h1V574h1V566h1V552h1V559h1V552h1V552h1V562h1V571h1V555h1V685V813h-1V804h-1V795h-1V806h-1V803h-1V818h-1V805h-1V804h-1V811h-1V801h-1V805h-1V817h-1V818h-1V818h-1V799h-1V808h-1V818h-1V814h-1V804h-1V811h-1V803h-1V801h-1V809h-1V818h-1V818h-1V805h-1V806h-1V787h-1V805h-1V791h-1V796h-1V810h-1V804h-1V797h-1V806h-1V800h-1V814h-1V809h-1V818h-1V802h-1V801h-1V794h-1V809h-1V800h-1V794h-1V800h-1V798h-1V791h-1V792h-1V790h-1V787h-1V818h-1V807h-1V808h-1V797h-1V792h-1V810h-1V790h-1V789h-1V813h-1V809h-1V798h-1V793h-1V789h-1V799h-1V789h-1V796h-1V780h-1V803h-1V795h-1V787h-1V817h-1V798h-1V804h-1V789h-1V807h-1V790h-1V797h-1V794h-1V800h-1V789h-1V783h-1V793h-1V805h-1V792h-1V798h-1V782h-1V788h-1V781h-1V801h-1V806h-1V793h-1V785h-1V814h-1V801h-1V801h-1V798h-1V797h-1V801h-1V802h-1V811h-1V790h-1V818h-1V797h-1V793h-1V797h-1V808h-1V793h-1V786h-1V798h-1V799h-1V789h-1V797h-1V788h-1V801h-1V784h-1V799h-1V816h-1V805h-1V792h-1V818h-1V795h-1V818h-1V798h-1V805h-1V815h-1V800h-1V791h-1V797h-1V794h-1V794h-1V802h-1V799h-1V809h-1V793h-1V801h-1V797h-1V795h-1V795h-1V781h-1V792h-1V795h-1V793h-1V807h-1V791h-1V790h-1V803h-1V791h-1V792h-1V808h-1V793h-1V818h-1V806h-1V784h-1V792h-1V788h-1V794h-1V804h-1V798h-1V816h-1V791h-1V818h-1V797h-1V787h-1V818h-1V793h-1V799h-1V807h-1V807h-1V806h-1V797h-1V813h-1V797h-1V796h-1V795h-1V794h-1V799h-1V792h-1V805h-1V792h-1V812h-1V793h-1V796h-1V791h-1V801h-1V809h-1V794h-1V818h-1V800h-1V816h-1V795h-1V788h-1V818h-1V805h-1V798h-1V789h-1V797h-1V818h-1V818h-1V790h-1V813h-1V801h-1V807h-1V817h-1V798h-1V808h-1V796h-1V792h-1V792h-1V818h-1V814h-1V818h-1V797h-1V794h-1V800h-1V791h-1V807h-1V792h-1V805h-1V818h-1V796h-1V796h-1V804h-1V803h-1V799h-1V818h-1V818h-1V818h-1V810h-1V797h-1V799h-1V803h-1V797h-1V795h-1V805h-1V806h-1V803h-1V809h-1V791h-1V792h-1V798h-1V818h-1V810h-1V813h-1V796h-1V803h-1V801h-1V796h-1V804h-1V796h-1V790h-1V809h-1V795h-1V797h-1V799h-1V803h-1V818h-1V802h-1V784h-1V806h-1V802h-1V806h-1V818h-1V799h-1V791h-1V789h-1V802h-1V803h-1V794h-1V802h-1V796h-1V812h-1V801h-1V793h-1V794h-1V796h-1V791h-1V798h-1V795h-1V810h-1V803h-1V802h-1V795h-1V797h-1V810h-1V798h-1V795h-1V801h-1V794h-1V811h-1V789h-1V793h-1V799h-1V818h-1V809h-1V804h-1V791h-1V787h-1V810h-1V818h-1V807h-1V804h-1V796h-1V802h-1V792h-1V818h-1V818h-1V802h-1V815h-1V798h-1V813h-1V790h-1V811h-1V800h-1V793h-1V797h-1V818h-1V802h-1V788h-1V785h-1V793h-1V796h-1V792h-1V795h-1V818h-1V815h-1V804h-1V798h-1V797h-1V804h-1V818h-1V797h-1V786h-1V805h-1V816h-1V801h-1V802h-1V805h-1V803h-1V810h-1V803h-1V793h-1V801h-1V794h-1V799h-1V804h-1V795h-1V788h-1V788h-1V797h-1V808h-1V812h-1V795h-1V803h-1V793h-1V818h-1V812h-1V811h-1V794h-1V818h-1V804h-1V783h-1V798h-1V815h-1V797h-1V792h-1V803h-1V800h-1V792h-1V801h-1V797h-1V793h-1V793h-1V797h-1V792h-1V798h-1V786h-1V806h-1V784h-1V790h-1V792h-1V808h-1V787h-1V796h-1V796h-1V793h-1V800h-1V791h-1V818h-1V798h-1V818h-1V795h-1V785h-1V796h-1V798h-1V791h-1V802h-1V816h-1V790h-1V792h-1V796h-1V795h-1V815h-1V818h-1V818h-1V799h-1V807h-1V793h-1V800h-1V795h-1V786h-1V798h-1V799h-1V803h-1V793h-1V798h-1V816h-1V782h-1V791h-1V803h-1V794h-1V811h-1V800h-1V796h-1V794h-1V782h-1V799h-1V796h-1V793h-1V791h-1V798h-1V796h-1V812h-1V806h-1V804h-1V799h-1V809h-1V791h-1V810h-1V797h-1V795h-1V807h-1V795h-1V787h-1V798h-1V816h-1V807h-1V799h-1V796h-1V799h-1V799h-1V795h-1V799h-1V815h-1V800h-1V818h-1V798h-1V799h-1V796h-1V818h-1V806h-1V793h-1V796h-1V810h-1V803h-1V799h-1V786h-1V801h-1V798h-1V804h-1V810h-1V799h-1V802h-1V789h-1V803h-1V812h-1V791h-1V807h-1V799h-1V818h-1V816h-1V808h-1V805h-1V793h-1V799h-1V804h-1V798h-1V796h-1V805h-1V802h-1V794h-1V793h-1V793h-1V792h-1V797h-1V805h-1V818h-1V795h-1V818h-1V818h-1V818h-1V816h-1V788h-1V800h-1V795h-1V799h-1V797h-1V798h-1V801h-1V818h-1V818h-1V798h-1V802h-1V803h-1V800h-1V796h-1V791h-1V792h-1V818h-1V790h-1V797h-1V798h-1V800h-1V818h-1V799h-1V790h-1V789h-1V816h-1V799h-1V795h-1V799h-1V799h-1V795h-1V798h-1V794h-1V786h-1V818h-1V805h-1V818h-1V804h-1V806h-1V809h-1V818h-1V789h-1V807h-1V793h-1V796h-1V790h-1V797h-1V817h-1V805h-1V799h-1V794h-1V798h-1V805h-1V798h-1V797h-1V795h-1V792h-1V792h-1V797h-1V793h-1V789h-1V785h-1V803h-1V798h-1V803h-1V818h-1V801h-1V794h-1V806h-1V802h-1V797h-1V813h-1V806h-1V804h-1V805h-1V807h-1V792h-1V790h-1V798h-1V806h-1V818h-1V806h-1V815h-1V793h-1V818h-1V818h-1V818h-1V792h-1V802h-1V800h-1V801h-1V793h-1V799h-1V797h-1V799h-1V789h-1V806h-1V800h-1V814h-1V818h-1V811h-1V807h-1V815h-1V799h-1V790h-1V804h-1V806h-1V799h-1V817h-1V794h-1V798h-1V804h-1V800h-1V807h-1V816h-1V806h-1V815h-1V818h-1V799h-1V797h-1V802h-1V790h-1V804h-1V791h-1V818h-1V790h-1V791h-1V796h-1V818h-1V801h-1V794h-1V818h-1V795h-1V812h-1V806h-1V806h-1V803h-1V793h-1V818h-1V802h-1V797h-1V795h-1V793h-1V794h-1V802h-1V818h-1V800h-1V798h-1V810h-1V818h-1V801h-1V796h-1V807h-1V804h-1V795h-1V787h-1V809h-1V817h-1V802h-1V801h-1V797h-1V782h-1V789h-1V792h-1V800h-1V802h-1V798h-1V806h-1V793h-1V801h-1V799h-1V811h-1V797h-1V796h-1V797h-1V803h-1V814h-1V794h-1V801h-1V788h-1V800h-1V790h-1V794h-1V800h-1V804h-1V789h-1V792h-1V806h-1V792h-1V801h-1V793h-1V799h-1V795h-1V786h-1V787h-1V791h-1V791h-1V790h-1V794h-1V793h-1V805h-1V798h-1V811h-1V800h-1V788h-1V785h-1V806h-1V790h-1V788h-1V794h-1V788h-1V818h-1V809h-1V802h-1V785h-1V792h-1V794h-1V818h-1V781h-1V796h-1V801h-1V814h-1V794h-1V811h-1V802h-1V808h-1V800h-1V789h-1V797h-1V804h-1V786h-1V799h-1V787h-1V816h-1V792h-1V802h-1V795h-1V803h-1V797h-1V784h-1V797h-1V800h-1V806h-1V788h-1V818h-1V797h-1V798h-1V794h-1V787h-1V788h-1V800h-1V811h-1V801h-1V791h-1V795h-1V797h-1V818h-1V790h-1V790h-1V794h-1V799h-1V807h-1V799h-1V795h-1V786h-1V785h-1V794h-1V796h-1V813h-1V798h-1V793h-1V815h-1V793h-1V788h-1V796h-1V797h-1V788h-1V791h-1V818h-1V794h-1V794h-1V791h-1V789h-1V797h-1V793h-1V799h-1V798h-1V795h-1V796h-1V791h-1V803h-1V792h-1V788h-1V794h-1V785h-1V789h-1V794h-1V788h-1V797h-1V789h-1V797h-1V787h-1V794h-1V788h-1V788h-1V791h-1V793h-1V800h-1V798h-1V801h-1V784h-1V808h-1V795h-1V789h-1V792h-1V787h-1V786h-1V785h-1V793h-1V818h-1V789h-1V806h-1V788h-1V802h-1V785h-1V802h-1V796h-1V806h-1V783h-1V791h-1V782h-1V795h-1V791h-1V796h-1V789h-1V791h-1V801h-1V799h-1V795h-1V783h-1V793h-1V804h-1V788h-1V796h-1V793h-1V793h-1V801h-1V787h-1V803h-1V802h-1V801h-1V787h-1V787h-1V799h-1V799h-1V788h-1V795h-1V796h-1V792h-1V789h-1V805h-1V797h-1V801h-1V799h-1V808h-1V801h-1V795h-1V796h-1V793h-1V793h-1V804h-1V787h-1V792h-1V799h-1V802h-1V784h-1V807h-1V818h-1V795h-1V812h-1V792h-1V794h-1V799h-1V793h-1V797h-1V794h-1V792h-1V796h-1V794h-1V790h-1V792h-1V812h-1V797h-1V795h-1V788h-1V792h-1V801h-1V795h-1V818h-1V792h-1V800h-1V789h-1V790h-1V788h-1V797h-1V798h-1V801h-1V797h-1V795h-1V798h-1V818h-1V818h-1V796h-1V810h-1V785h-1V806h-1V798h-1V808h-1V806h-1V799h-1V795h-1V790h-1V817h-1V789h-1V818h-1V800h-1V797h-1V806h-1V792h-1V792h-1V791h-1V794h-1V798h-1V793h-1V807h-1V814h-1V808h-1V818h-1V797h-1V810h-1V803h-1V797h-1V818h-1V818h-1V818h-1V807h-1V784h-1V798h-1V796h-1V801h-1V818h-1V788h-1V791h-1V805h-1V792h-1V781h-1V816h-1V802h-1V801h-1V818h-1V818h-1V798h-1V808h-1V795h-1V791h-1V793h-1V806h-1V798h-1V792h-1V807h-1V789h-1V815h-1V809h-1V797h-1V813h-1V808h-1V798h-1V792h-1V789h-1V818h-1V816h-1V818h-1V805h-1V786h-1V818h-1V800h-1V796h-1V794h-1V818h-1V801h-1V795h-1V786h-1V800h-1V818h-1V798h-1V795h-1V789h-1V784h-1V793h-1V791h-1V804h-1V794h-1V818h-1V808h-1V818h-1V803h-1V795h-1V818h-1V798h-1V805h-1V801h-1V792h-1V791h-1V802h-1V803h-1V803h-1V798h-1V810h-1V800h-1V790h-1V791h-1V800h-1V798h-1V802h-1V800h-1V803h-1V818h-1V785h-1V808h-1V803h-1V818h-1V815h-1V805h-1V817h-1V818h-1V803h-1V804h-1V818h-1V814h-1V792h-1V813h-1V789h-1V797h-1V797h-1V794h-1V795h-1V813h-1V797h-1V798h-1V800h-1V795h-1V803h-1V788h-1V804h-1V818h-1V818h-1V801h-1V809h-1V797h-1V805h-1V794h-1V798h-1V817h-1V803h-1V793h-1V818h-1V802h-1V800h-1V800h-1V799h-1V803h-1V808h-1V797h-1V803h-1V800h-1V797h-1V818h-1V794h-1V809h-1V818h-1V799h-1V783h-1V797h-1V794h-1V805h-1V818h-1V812h-1V812h-1V795h-1V801h-1V818h-1V818h-1V818h-1V818h-1V818h-1V797h-1V807h-1V812h-1V818h-1V800h-1V793h-1V818h-1V817h-1V807h-1V806h-1V817h-1V794h-1V786h-1V812h-1V802h-1V795h-1V797h-1V794h-1V798h-1V783h-1V807h-1V818h-1V802h-1V794h-1V799h-1V789h-1V760h-1V754h-1V688h-1V688h-1V690h-1V689h-1V691h-1V696h-1V692h-1V688h-1V690h-1V688h-1V693h-1V696h-1V693h-1V694h-1V696h-1V701h-1V696h-1V693h-1V687h-1V689h-1V690h-1V694h-1V699h-1V695h-1V696h-1V700h-1V706h-1V700h-1V697h-1V695h-1V688h-1V689h-1V689h-1V688h-1V693h-1V698h-1V695h-1V697h-1V701h-1V698h-1V694h-1V689h-1V688h-1V688h-1V689h-1V688h-1V689h-1V688h-1V687h-1V688h-1V689h-1V693h-1V698h-1V694h-1V699h-1V703h-1V697h-1V695h-1V688h-1V688h-1V689h-1V689h-1V689h-1V691h-1V688h-1V689h-1V688h-1V687h-1V687h-1V688h-1V688h-1V689h-1V690h-1V689h-1V690h-1V689h-1V689h-1V688h-1V688h-1V688h-1V688h-1V688h-1V689h-1V689h-1V688h-1V688h-1V688h-1V688h-1V689h-1V688h-1V689h-1V689h-1V688h-1V689h-1V689h-1V688h-1V690h-1V688h-1V690h-1V689h-1V687h-1V691h-1V688h-1V689h-1V688h-1V688h-1V689h-1V689h-1V688h-1V689h-1V688h-1V689h-1V688h-1V688h-1V688h-1V688h-1V688h-1V688h-1V688h-1V689h-1V688h-1V688h-1V690h-1V688h-1V688h-1V689h-1Z" fill="#2a7d57"/>
<path d="M311 685V683h1V683h1V683h1V683h1V683h1V683h1V682h1V681h1V682h1V683h1V683h1V682h1V682h1V682h1V683h1V681h1V683h1V683h1V682h1V681h1V682h1V682h1V683h1V683h1V683h1V682h1V681h1V682h1V681h1V682h1V683h1V683h1V682h1V683h1V681h1V683h1V682h1V683h1V682h1V682h1V683h1V683h1V683h1V683h1V682h1V683h1V683h1V683h1V683h1V682h1V680h1V683h1V683h1V683h1V682h1V681h1V682h1V682h1V683h1V683h1V683h1V683h1V682h1V683h1V683h1V677h1V681h1V682h1V676h1V673h1V668h1V672h1V673h1V674h1V677h1V681h1V682h1V682h1V682h1V683h1V683h1V683h1V683h1V682h1V682h1V676h1V673h1V669h1V673h1V677h1V673h1V676h1V683h1V676h1V682h1V681h1V677h1V673h1V669h1V666h1V671h1V674h1V676h1V673h1V677h1V682h1V683h1V682h1V676h1V675h1V672h1V675h1V676h1V678h1V674h1V678h1V679h1V683h1V682h1V679h1V677h1V679h1V682h1V677h1V683h1V682h1V619h1V613h1V577h1V554h1V576h1V563h1V568h1V576h1V591h1V596h1V589h1V578h1V556h1V589h1V566h1V560h1V638h1V587h1V590h1V565h1V592h1V578h1V586h1V585h1V583h1V580h1V554h1V556h1V558h1V632h1V652h1V651h1V554h1V554h1V573h1V565h1V568h1V581h1V580h1V573h1V556h1V582h1V619h1V554h1V573h1V576h1V636h1V582h1V597h1V601h1V586h1V584h1V584h1V583h1V580h1V584h1V573h1V589h1V581h1V589h1V584h1V585h1V568h1V585h1V589h1V571h1V579h1V584h1V645h1V595h1V587h1V592h1V584h1V647h1V607h1V600h1V585h1V576h1V554h1V586h1V594h1V588h1V584h1V594h1V582h1V580h1V566h1V641h1V577h1V650h1V567h1V580h1V591h1V568h1V574h1V567h1V570h1V578h1V593h1V594h1V579h1V572h1V580h1V560h1V570h1V576h1V582h1V577h1V575h1V584h1V566h1V585h1V577h1V568h1V562h1V578h1V585h1V582h1V571h1V573h1V590h1V595h1V583h1V583h1V593h1V599h1V598h1V583h1V570h1V588h1V599h1V608h1V605h1V576h1V588h1V610h1V617h1V595h1V588h1V577h1V581h1V586h1V589h1V568h1V595h1V589h1V556h1V589h1V600h1V579h1V637h1V580h1V572h1V567h1V600h1V578h1V593h1V570h1V589h1V570h1V589h1V587h1V571h1V589h1V601h1V600h1V593h1V624h1V607h1V591h1V629h1V574h1V612h1V605h1V591h1V578h1V558h1V588h1V598h1V613h1V619h1V598h1V619h1V591h1V587h1V582h1V562h1V605h1V602h1V594h1V583h1V634h1V601h1V562h1V568h1V651h1V585h1V580h1V585h1V568h1V624h1V640h1V578h1V583h1V591h1V585h1V593h1V599h1V575h1V579h1V612h1V612h1V596h1V555h1V554h1V574h1V564h1V631h1V580h1V574h1V643h1V573h1V576h1V578h1V579h1V582h1V592h1V589h1V592h1V589h1V588h1V592h1V588h1V603h1V587h1V624h1V647h1V585h1V618h1V585h1V579h1V571h1V574h1V585h1V577h1V576h1V598h1V603h1V576h1V593h1V591h1V596h1V583h1V587h1V592h1V572h1V596h1V593h1V576h1V573h1V623h1V582h1V554h1V580h1V596h1V595h1V585h1V609h1V652h1V608h1V607h1V636h1V596h1V595h1V597h1V579h1V594h1V580h1V591h1V580h1V575h1V600h1V602h1V593h1V587h1V588h1V587h1V583h1V589h1V601h1V590h1V585h1V590h1V597h1V589h1V574h1V602h1V610h1V605h1V591h1V598h1V604h1V612h1V606h1V595h1V585h1V602h1V606h1V607h1V604h1V599h1V595h1V568h1V597h1V582h1V588h1V570h1V588h1V570h1V574h1V595h1V592h1V611h1V611h1V616h1V601h1V600h1V578h1V568h1V601h1V617h1V599h1V599h1V599h1V590h1V587h1V594h1V618h1V613h1V593h1V581h1V577h1V587h1V570h1V590h1V586h1V603h1V587h1V596h1V592h1V631h1V589h1V590h1V581h1V581h1V580h1V590h1V595h1V601h1V577h1V565h1V577h1V616h1V597h1V583h1V583h1V586h1V593h1V600h1V592h1V583h1V643h1V581h1V638h1V598h1V601h1V603h1V635h1V583h1V571h1V578h1V583h1V591h1V586h1V554h1V654h1V603h1V589h1V604h1V650h1V603h1V608h1V657h1V578h1V588h1V592h1V597h1V600h1V603h1V603h1V598h1V590h1V580h1V579h1V581h1V570h1V554h1V583h1V599h1V592h1V584h1V588h1V591h1V585h1V589h1V627h1V587h1V575h1V587h1V600h1V599h1V598h1V602h1V581h1V595h1V631h1V598h1V602h1V580h1V588h1V578h1V564h1V583h1V581h1V585h1V579h1V583h1V577h1V560h1V642h1V574h1V582h1V577h1V562h1V585h1V598h1V600h1V595h1V595h1V595h1V585h1V578h1V554h1V581h1V577h1V560h1V578h1V582h1V560h1V581h1V587h1V579h1V573h1V583h1V581h1V629h1V590h1V587h1V581h1V576h1V576h1V578h1V585h1V572h1V589h1V594h1V594h1V585h1V587h1V594h1V579h1V584h1V580h1V590h1V590h1V593h1V577h1V575h1V651h1V572h1V635h1V588h1V576h1V570h1V558h1V554h1V580h1V567h1V580h1V656h1V587h1V586h1V573h1V590h1V609h1V606h1V599h1V589h1V572h1V579h1V583h1V587h1V591h1V594h1V592h1V589h1V582h1V570h1V570h1V573h1V558h1V554h1V582h1V625h1V588h1V588h1V576h1V556h1V613h1V589h1V575h1V575h1V566h1V576h1V650h1V635h1V596h1V596h1V595h1V588h1V585h1V579h1V581h1V557h1V589h1V626h1V572h1V579h1V591h1V647h1V560h1V575h1V576h1V554h1V554h1V559h1V583h1V585h1V585h1V583h1V584h1V583h1V572h1V569h1V571h1V571h1V571h1V570h1V598h1V577h1V582h1V590h1V597h1V587h1V588h1V593h1V620h1V595h1V588h1V586h1V589h1V569h1V605h1V601h1V589h1V595h1V582h1V574h1V568h1V579h1V564h1V600h1V604h1V613h1V590h1V589h1V589h1V565h1V589h1V561h1V554h1V632h1V580h1V643h1V597h1V579h1V590h1V602h1V610h1V606h1V606h1V605h1V621h1V578h1V599h1V593h1V591h1V565h1V588h1V596h1V598h1V589h1V636h1V571h1V580h1V564h1V634h1V602h1V591h1V584h1V585h1V587h1V587h1V579h1V591h1V585h1V581h1V581h1V580h1V580h1V570h1V597h1V586h1V580h1V592h1V598h1V595h1V579h1V593h1V581h1V597h1V563h1V638h1V579h1V587h1V586h1V580h1V554h1V578h1V583h1V585h1V563h1V630h1V578h1V588h1V580h1V560h1V588h1V582h1V573h1V556h1V562h1V567h1V580h1V573h1V569h1V635h1V603h1V598h1V618h1V595h1V578h1V575h1V594h1V602h1V583h1V588h1V576h1V571h1V576h1V655h1V571h1V554h1V645h1V575h1V586h1V587h1V600h1V599h1V584h1V588h1V587h1V581h1V580h1V570h1V586h1V631h1V603h1V604h1V576h1V618h1V591h1V589h1V585h1V587h1V589h1V573h1V574h1V597h1V601h1V603h1V600h1V598h1V596h1V584h1V571h1V576h1V578h1V575h1V554h1V562h1V596h1V606h1V599h1V618h1V587h1V586h1V589h1V567h1V579h1V614h1V580h1V589h1V575h1V574h1V583h1V598h1V577h1V581h1V590h1V604h1V580h1V577h1V591h1V569h1V599h1V579h1V588h1V577h1V591h1V590h1V595h1V600h1V593h1V588h1V573h1V585h1V595h1V642h1V568h1V598h1V597h1V598h1V601h1V594h1V588h1V592h1V606h1V576h1V560h1V554h1V641h1V575h1V598h1V565h1V580h1V574h1V596h1V564h1V561h1V570h1V624h1V601h1V597h1V591h1V597h1V586h1V618h1V574h1V589h1V594h1V586h1V580h1V576h1V575h1V554h1V559h1V634h1V578h1V582h1V564h1V595h1V586h1V574h1V584h1V594h1V652h1V582h1V565h1V580h1V587h1V593h1V571h1V554h1V581h1V640h1V570h1V591h1V573h1V586h1V594h1V606h1V607h1V582h1V607h1V593h1V579h1V581h1V577h1V591h1V572h1V654h1V645h1V571h1V571h1V571h1V591h1V596h1V657h1V651h1V589h1V557h1V578h1V585h1V559h1V570h1V655h1V566h1V567h1V580h1V582h1V573h1V584h1V603h1V574h1V588h1V580h1V579h1V582h1V577h1V630h1V586h1V590h1V587h1V580h1V629h1V578h1V584h1V582h1V583h1V588h1V582h1V635h1V554h1V554h1V565h1V587h1V580h1V560h1V571h1V577h1V583h1V577h1V554h1V566h1V570h1V579h1V581h1V578h1V574h1V554h1V568h1V581h1V598h1V636h1V587h1V593h1V571h1V554h1V576h1V588h1V589h1V585h1V577h1V591h1V589h1V564h1V585h1V591h1V590h1V593h1V562h1V561h1V570h1V576h1V554h1V565h1V589h1V579h1V567h1V578h1V583h1V578h1V554h1V554h1V570h1V590h1V598h1V569h1V654h1V583h1V585h1V564h1V591h1V598h1V596h1V582h1V566h1V571h1V574h1V577h1V581h1V578h1V554h1V588h1V599h1V592h1V576h1V573h1V586h1V594h1V590h1V587h1V587h1V585h1V572h1V584h1V599h1V601h1V568h1V595h1V596h1V643h1V562h1V576h1V576h1V590h1V606h1V616h1V610h1V603h1V592h1V588h1V598h1V602h1V589h1V575h1V574h1V595h1V604h1V589h1V612h1V594h1V579h1V592h1V587h1V595h1V554h1V568h1V572h1V567h1V589h1V584h1V580h1V581h1V586h1V592h1V594h1V595h1V599h1V601h1V571h1V586h1V591h1V596h1V563h1V572h1V587h1V591h1V586h1V597h1V594h1V607h1V599h1V603h1V601h1V595h1V578h1V603h1V594h1V644h1V577h1V582h1V569h1V591h1V588h1V581h1V589h1V584h1V590h1V597h1V602h1V656h1V609h1V598h1V569h1V577h1V590h1V640h1V609h1V646h1V572h1V573h1V580h1V583h1V616h1V563h1V572h1V623h1V579h1V588h1V579h1V627h1V577h1V562h1V559h1V590h1V592h1V563h1V586h1V576h1V581h1V582h1V633h1V592h1V592h1V589h1V629h1V599h1V592h1V636h1V566h1V584h1V586h1V568h1V571h1V580h1V586h1V574h1V579h1V590h1V574h1V572h1V555h1V554h1V575h1V576h1V585h1V588h1V581h1V554h1V570h1V573h1V577h1V554h1V557h1V591h1V601h1V596h1V585h1V572h1V593h1V590h1V564h1V633h1V570h1V578h1V572h1V570h1V574h1V561h1V554h1V649h1V619h1V557h1V685V805h-1V800h-1V757h-1V803h-1V795h-1V812h-1V802h-1V801h-1V793h-1V798h-1V804h-1V816h-1V807h-1V808h-1V729h-1V806h-1V815h-1V811h-1V803h-1V796h-1V793h-1V798h-1V799h-1V805h-1V816h-1V791h-1V775h-1V783h-1V730h-1V748h-1V788h-1V800h-1V798h-1V729h-1V795h-1V799h-1V805h-1V801h-1V816h-1V794h-1V791h-1V726h-1V800h-1V797h-1V794h-1V785h-1V770h-1V765h-1V784h-1V754h-1V738h-1V816h-1V804h-1V800h-1V731h-1V785h-1V808h-1V784h-1V783h-1V806h-1V808h-1V783h-1V771h-1V773h-1V789h-1V786h-1V771h-1V767h-1V769h-1V774h-1V784h-1V810h-1V776h-1V774h-1V779h-1V801h-1V764h-1V774h-1V722h-1V774h-1V774h-1V768h-1V761h-1V774h-1V775h-1V771h-1V780h-1V785h-1V774h-1V801h-1V804h-1V786h-1V731h-1V795h-1V757h-1V785h-1V796h-1V796h-1V794h-1V771h-1V810h-1V786h-1V815h-1V783h-1V767h-1V767h-1V804h-1V786h-1V782h-1V780h-1V779h-1V784h-1V795h-1V733h-1V786h-1V782h-1V786h-1V813h-1V792h-1V792h-1V803h-1V793h-1V794h-1V786h-1V787h-1V815h-1V782h-1V778h-1V789h-1V778h-1V753h-1V790h-1V789h-1V788h-1V791h-1V792h-1V753h-1V786h-1V740h-1V777h-1V766h-1V776h-1V783h-1V784h-1V776h-1V771h-1V765h-1V766h-1V787h-1V801h-1V792h-1V792h-1V794h-1V737h-1V782h-1V726h-1V766h-1V771h-1V785h-1V800h-1V727h-1V790h-1V718h-1V778h-1V773h-1V771h-1V781h-1V801h-1V798h-1V785h-1V787h-1V785h-1V791h-1V787h-1V787h-1V783h-1V768h-1V764h-1V778h-1V737h-1V803h-1V781h-1V780h-1V788h-1V794h-1V788h-1V786h-1V812h-1V794h-1V814h-1V784h-1V746h-1V816h-1V800h-1V769h-1V774h-1V786h-1V810h-1V806h-1V751h-1V796h-1V780h-1V771h-1V784h-1V793h-1V782h-1V772h-1V766h-1V791h-1V816h-1V807h-1V815h-1V785h-1V721h-1V785h-1V786h-1V786h-1V786h-1V795h-1V811h-1V785h-1V784h-1V786h-1V784h-1V779h-1V785h-1V810h-1V816h-1V800h-1V796h-1V798h-1V799h-1V793h-1V781h-1V780h-1V782h-1V790h-1V809h-1V732h-1V790h-1V791h-1V790h-1V793h-1V791h-1V793h-1V775h-1V773h-1V745h-1V768h-1V776h-1V787h-1V794h-1V793h-1V726h-1V789h-1V792h-1V811h-1V770h-1V777h-1V772h-1V779h-1V803h-1V816h-1V784h-1V757h-1V767h-1V769h-1V791h-1V771h-1V788h-1V754h-1V808h-1V789h-1V741h-1V780h-1V780h-1V780h-1V781h-1V789h-1V789h-1V786h-1V781h-1V788h-1V789h-1V808h-1V733h-1V737h-1V792h-1V787h-1V809h-1V784h-1V785h-1V797h-1V808h-1V715h-1V773h-1V761h-1V777h-1V791h-1V816h-1V733h-1V801h-1V721h-1V788h-1V732h-1V816h-1V799h-1V796h-1V813h-1V719h-1V787h-1V773h-1V808h-1V787h-1V741h-1V789h-1V806h-1V800h-1V783h-1V781h-1V713h-1V780h-1V781h-1V790h-1V816h-1V795h-1V800h-1V794h-1V782h-1V786h-1V816h-1V788h-1V770h-1V797h-1V813h-1V793h-1V748h-1V795h-1V802h-1V803h-1V798h-1V788h-1V779h-1V788h-1V784h-1V780h-1V769h-1V764h-1V770h-1V773h-1V781h-1V781h-1V767h-1V780h-1V782h-1V816h-1V787h-1V791h-1V743h-1V789h-1V785h-1V756h-1V756h-1V789h-1V779h-1V754h-1V794h-1V794h-1V792h-1V789h-1V783h-1V776h-1V779h-1V782h-1V737h-1V750h-1V765h-1V783h-1V772h-1V774h-1V769h-1V777h-1V754h-1V790h-1V775h-1V766h-1V771h-1V791h-1V816h-1V751h-1V816h-1V722h-1V772h-1V776h-1V787h-1V787h-1V777h-1V799h-1V788h-1V788h-1V782h-1V750h-1V795h-1V805h-1V816h-1V799h-1V777h-1V772h-1V789h-1V794h-1V769h-1V776h-1V797h-1V789h-1V756h-1V777h-1V801h-1V773h-1V787h-1V762h-1V773h-1V793h-1V792h-1V790h-1V784h-1V779h-1V772h-1V775h-1V754h-1V724h-1V786h-1V781h-1V811h-1V805h-1V795h-1V781h-1V782h-1V784h-1V785h-1V779h-1V794h-1V801h-1V775h-1V779h-1V793h-1V795h-1V784h-1V782h-1V789h-1V792h-1V791h-1V792h-1V796h-1V803h-1V798h-1V810h-1V788h-1V784h-1V787h-1V816h-1V782h-1V770h-1V771h-1V742h-1V716h-1V794h-1V721h-1V783h-1V794h-1V788h-1V734h-1V797h-1V779h-1V789h-1V773h-1V785h-1V782h-1V770h-1V774h-1V791h-1V804h-1V801h-1V790h-1V791h-1V794h-1V798h-1V792h-1V796h-1V796h-1V776h-1V785h-1V747h-1V785h-1V786h-1V786h-1V785h-1V793h-1V794h-1V793h-1V816h-1V801h-1V785h-1V787h-1V715h-1V794h-1V789h-1V793h-1V787h-1V791h-1V816h-1V816h-1V798h-1V781h-1V783h-1V780h-1V773h-1V777h-1V788h-1V814h-1V782h-1V797h-1V780h-1V793h-1V806h-1V777h-1V725h-1V734h-1V812h-1V783h-1V742h-1V775h-1V775h-1V770h-1V768h-1V770h-1V779h-1V798h-1V779h-1V790h-1V797h-1V798h-1V791h-1V805h-1V734h-1V799h-1V782h-1V753h-1V783h-1V796h-1V816h-1V787h-1V794h-1V783h-1V779h-1V774h-1V778h-1V761h-1V788h-1V779h-1V777h-1V783h-1V779h-1V777h-1V782h-1V788h-1V794h-1V787h-1V802h-1V779h-1V791h-1V803h-1V797h-1V786h-1V788h-1V788h-1V787h-1V785h-1V777h-1V728h-1V777h-1V796h-1V806h-1V815h-1V788h-1V812h-1V787h-1V816h-1V812h-1V801h-1V778h-1V772h-1V777h-1V780h-1V716h-1V786h-1V791h-1V778h-1V780h-1V776h-1V784h-1V809h-1V789h-1V800h-1V798h-1V794h-1V782h-1V789h-1V793h-1V788h-1V794h-1V816h-1V784h-1V773h-1V784h-1V798h-1V800h-1V798h-1V800h-1V806h-1V798h-1V797h-1V794h-1V734h-1V756h-1V794h-1V786h-1V783h-1V776h-1V779h-1V785h-1V775h-1V792h-1V784h-1V788h-1V794h-1V800h-1V786h-1V771h-1V794h-1V789h-1V815h-1V792h-1V789h-1V773h-1V786h-1V724h-1V800h-1V803h-1V787h-1V791h-1V723h-1V789h-1V778h-1V773h-1V786h-1V791h-1V717h-1V777h-1V795h-1V816h-1V799h-1V794h-1V776h-1V748h-1V724h-1V771h-1V787h-1V799h-1V753h-1V785h-1V788h-1V794h-1V784h-1V788h-1V792h-1V792h-1V751h-1V799h-1V812h-1V778h-1V791h-1V763h-1V796h-1V776h-1V784h-1V786h-1V801h-1V784h-1V776h-1V803h-1V779h-1V787h-1V734h-1V787h-1V774h-1V762h-1V764h-1V776h-1V790h-1V778h-1V775h-1V778h-1V801h-1V790h-1V784h-1V748h-1V783h-1V775h-1V783h-1V776h-1V767h-1V749h-1V738h-1V813h-1V781h-1V780h-1V779h-1V778h-1V786h-1V791h-1V740h-1V779h-1V799h-1V782h-1V785h-1V801h-1V794h-1V795h-1V800h-1V786h-1V772h-1V779h-1V785h-1V782h-1V769h-1V785h-1V784h-1V800h-1V785h-1V801h-1V785h-1V766h-1V757h-1V756h-1V778h-1V786h-1V786h-1V750h-1V777h-1V790h-1V781h-1V745h-1V781h-1V808h-1V795h-1V784h-1V781h-1V783h-1V788h-1V751h-1V780h-1V719h-1V789h-1V803h-1V791h-1V785h-1V769h-1V771h-1V769h-1V779h-1V804h-1V774h-1V772h-1V800h-1V781h-1V779h-1V789h-1V792h-1V773h-1V777h-1V805h-1V781h-1V790h-1V776h-1V788h-1V779h-1V780h-1V795h-1V792h-1V779h-1V777h-1V783h-1V780h-1V773h-1V769h-1V773h-1V714h-1V756h-1V749h-1V760h-1V776h-1V781h-1V715h-1V785h-1V763h-1V780h-1V766h-1V779h-1V786h-1V775h-1V772h-1V783h-1V762h-1V779h-1V769h-1V759h-1V757h-1V761h-1V781h-1V770h-1V787h-1V787h-1V779h-1V783h-1V783h-1V775h-1V767h-1V798h-1V776h-1V792h-1V715h-1V777h-1V778h-1V744h-1V781h-1V780h-1V780h-1V784h-1V797h-1V796h-1V786h-1V779h-1V773h-1V776h-1V766h-1V732h-1V771h-1V777h-1V800h-1V746h-1V801h-1V796h-1V714h-1V785h-1V782h-1V775h-1V768h-1V767h-1V782h-1V791h-1V787h-1V745h-1V798h-1V794h-1V775h-1V774h-1V776h-1V774h-1V777h-1V778h-1V786h-1V788h-1V779h-1V765h-1V732h-1V790h-1V790h-1V783h-1V800h-1V791h-1V794h-1V788h-1V768h-1V765h-1V770h-1V768h-1V771h-1V762h-1V764h-1V783h-1V781h-1V771h-1V784h-1V811h-1V782h-1V768h-1V771h-1V723h-1V790h-1V749h-1V794h-1V792h-1V790h-1V780h-1V773h-1V778h-1V795h-1V797h-1V795h-1V714h-1V749h-1V721h-1V786h-1V807h-1V786h-1V806h-1V785h-1V786h-1V790h-1V807h-1V776h-1V797h-1V783h-1V786h-1V803h-1V783h-1V810h-1V798h-1V783h-1V726h-1V778h-1V782h-1V776h-1V782h-1V781h-1V729h-1V781h-1V811h-1V805h-1V781h-1V777h-1V810h-1V802h-1V783h-1V792h-1V804h-1V802h-1V788h-1V777h-1V778h-1V785h-1V798h-1V814h-1V787h-1V754h-1V785h-1V778h-1V728h-1V815h-1V801h-1V791h-1V816h-1V816h-1V783h-1V799h-1V781h-1V744h-1V789h-1V802h-1V796h-1V782h-1V803h-1V785h-1V788h-1V802h-1V782h-1V809h-1V789h-1V787h-1V791h-1V771h-1V794h-1V805h-1V803h-1V796h-1V786h-1V788h-1V785h-1V774h-1V777h-1V803h-1V796h-1V717h-1V756h-1V788h-1V774h-1V776h-1V776h-1V767h-1V757h-1V778h-1V719h-1V779h-1V780h-1V816h-1V805h-1V797h-1V802h-1V719h-1V797h-1V792h-1V798h-1V791h-1V781h-1V783h-1V791h-1V795h-1V801h-1V786h-1V799h-1V797h-1V772h-1V770h-1V796h-1V792h-1V794h-1V784h-1V803h-1V792h-1V739h-1V735h-1V784h-1V816h-1V810h-1V803h-1V816h-1V798h-1V796h-1V798h-1V816h-1V806h-1V791h-1V786h-1V782h-1V778h-1V789h-1V779h-1V783h-1V800h-1V783h-1V777h-1V725h-1V787h-1V802h-1V786h-1V792h-1V816h-1V805h-1V783h-1V785h-1V790h-1V800h-1V725h-1V795h-1V807h-1V781h-1V784h-1V795h-1V802h-1V785h-1V794h-1V798h-1V794h-1V806h-1V787h-1V779h-1V776h-1V720h-1V801h-1V787h-1V780h-1V804h-1V786h-1V780h-1V792h-1V774h-1V797h-1V816h-1V798h-1V780h-1V780h-1V800h-1V802h-1V815h-1V813h-1V807h-1V799h-1V795h-1V798h-1V800h-1V816h-1V794h-1V788h-1V813h-1V816h-1V796h-1V801h-1V795h-1V780h-1V775h-1V802h-1V771h-1V773h-1V789h-1V783h-1V777h-1V780h-1V785h-1V798h-1V775h-1V794h-1V782h-1V771h-1V731h-1V744h-1V687h-1V687h-1V689h-1V687h-1V691h-1V696h-1V691h-1V688h-1V689h-1V687h-1V692h-1V695h-1V693h-1V694h-1V695h-1V700h-1V695h-1V692h-1V687h-1V688h-1V689h-1V693h-1V697h-1V694h-1V695h-1V698h-1V706h-1V699h-1V697h-1V694h-1V687h-1V688h-1V688h-1V687h-1V693h-1V698h-1V694h-1V697h-1V701h-1V697h-1V693h-1V688h-1V688h-1V687h-1V687h-1V687h-1V689h-1V687h-1V687h-1V687h-1V687h-1V693h-1V697h-1V693h-1V698h-1V702h-1V697h-1V694h-1V688h-1V687h-1V688h-1V687h-1V688h-1V690h-1V687h-1V689h-1V688h-1V687h-1V687h-1V687h-1V687h-1V688h-1V689h-1V688h-1V689h-1V688h-1V687h-1V687h-1V687h-1V687h-1V687h-1V687h-1V688h-1V688h-1V687h-1V688h-1V687h-1V688h-1V688h-1V687h-1V689h-1V688h-1V687h-1V688h-1V688h-1V687h-1V689h-1V687h-1V688h-1V688h-1V687h-1V691h-1V687h-1V687h-1V687h-1V688h-1V688h-1V688h-1V687h-1V688h-1V687h-1V688h-1V687h-1V687h-1V687h-1V688h-1V687h-1V687h-1V687h-1V688h-1V688h-1V688h-1V688h-1V688h-1V687h-1V688h-1Z" fill="#45db97"/>
<path d="M806 181V852" stroke="#8e1410" stroke-width="1.6"/>
</svg>
<div class="ab" style="left:323px;top:184px;width:12px;height:12px;background:#6a6a6a;border:1px solid #8a8a8a"></div>
<svg style="left:323px;top:184px" width="12" height="12"><path d="M12 0L0 12H12Z" fill="#4a4a4a"/></svg>
<div class="ab" style="left:875px;top:204px;width:123px;height:26px;background:#262626;opacity:0.9"></div>
<div class="ab" style="left:875px;top:204px;width:9px;height:26px;background:#3a3a3a;"></div>
<svg style="left:877px;top:212px" width="5" height="11"><path d="M1 0V11M3.5 0V11" stroke="#8a8a8a" stroke-width="1.2" stroke-dasharray="1.2 1.6"/></svg>
<svg style="left:886px;top:208px" width="16" height="15"><path d="M1 14V12.5M3 14V11.5M5 14V10.5M7 14V9.5M9 14V8M11 14V6.5M13 14V4.5M15 14V1" stroke="#8a8a8a" stroke-width="1"/></svg>
<svg style="left:905px;top:207px" width="20" height="20"><circle cx="9.8" cy="9.6" r="7.9" fill="none" stroke="#9a9a9a" stroke-width="1.8"/><path d="M9.8 1V8.5" stroke="#9a9a9a" stroke-width="1.8"/></svg>
<div class="t" style="left:928px;top:210px;font-size:12px;line-height:13.80px;color:#2b8ff2;transform:scaleX(0.9502);transform-origin:0 0;-webkit-text-stroke:0.25px #2b8ff2;">+0</div>
<div class="t" style="left:944px;top:210px;font-size:12px;line-height:13.80px;color:#9a9a9a;transform:scaleX(0.8175);transform-origin:0 0;-webkit-text-stroke:0.25px #9a9a9a;">dB</div>
<div class="ab" style="left:979px;top:208px;width:1px;height:18px;background:#555;"></div>
<svg style="left:984px;top:212px" width="10" height="10"><path d="M6 0.5L9.5 4L8 4.8L6 7L5 6L1 10L0 9L4 5L3 4L5.2 2Z" fill="#8a8a8a"/></svg>
<div class="ab" style="left:1562px;top:181px;width:72px;height:671px;background:#232323;border-right:1px solid #141414;border-top:1px solid #141414"></div>
<div class="ab" style="left:1562px;top:516px;width:72px;height:1px;background:#141414;"></div>
<div class="t" style="left:1569px;top:184px;font-size:11.5px;line-height:13.22px;color:#a0a0a0;transform:scaleX(0.9597);transform-origin:0 0;-webkit-text-stroke:0.25px #a0a0a0;">dB</div>
<div class="t" style="left:1570px;top:225px;font-size:11px;line-height:12.65px;color:#a0a0a0;transform:scaleX(0.9201);transform-origin:0 0;-webkit-text-stroke:0.25px #a0a0a0;">-3</div>
<div class="ab" style="left:1562px;top:230px;width:4px;height:1px;background:#9a9a9a;"></div>
<div class="t" style="left:1570px;top:261px;font-size:11px;line-height:12.65px;color:#a0a0a0;transform:scaleX(0.9201);transform-origin:0 0;-webkit-text-stroke:0.25px #a0a0a0;">-6</div>
<div class="ab" style="left:1562px;top:266px;width:4px;height:1px;background:#9a9a9a;"></div>
<div class="t" style="left:1570px;top:285px;font-size:11px;line-height:12.65px;color:#a0a0a0;transform:scaleX(0.9201);transform-origin:0 0;-webkit-text-stroke:0.25px #a0a0a0;">-9</div>
<div class="ab" style="left:1562px;top:290px;width:4px;height:1px;background:#9a9a9a;"></div>
<div class="t" style="left:1570px;top:314px;font-size:11px;line-height:12.65px;color:#a0a0a0;transform:scaleX(1.0692);transform-origin:0 0;-webkit-text-stroke:0.25px #a0a0a0;">-15</div>
<div class="ab" style="left:1562px;top:319px;width:4px;height:1px;background:#9a9a9a;"></div>
<div class="t" style="left:1570px;top:330px;font-size:11px;line-height:12.65px;color:#a0a0a0;transform:scaleX(1.0692);transform-origin:0 0;-webkit-text-stroke:0.25px #a0a0a0;">-21</div>
<div class="ab" style="left:1562px;top:335px;width:4px;height:1px;background:#9a9a9a;"></div>
<div class="t" style="left:1570px;top:344px;font-size:11px;line-height:12.65px;color:#a0a0a0;transform:scaleX(1.1299);transform-origin:0 0;-webkit-text-stroke:0.25px #a0a0a0;">-∞</div>
<div class="ab" style="left:1562px;top:349px;width:4px;height:1px;background:#9a9a9a;"></div>
<div class="t" style="left:1570px;top:359px;font-size:11px;line-height:12.65px;color:#a0a0a0;transform:scaleX(1.0692);transform-origin:0 0;-webkit-text-stroke:0.25px #a0a0a0;">-21</div>
<div class="ab" style="left:1562px;top:364px;width:4px;height:1px;background:#9a9a9a;"></div>
<div class="t" style="left:1570px;top:373px;font-size:11px;line-height:12.65px;color:#a0a0a0;transform:scaleX(1.0692);transform-origin:0 0;-webkit-text-stroke:0.25px #a0a0a0;">-15</div>
<div class="ab" style="left:1562px;top:378px;width:4px;height:1px;background:#9a9a9a;"></div>
<div class="t" style="left:1570px;top:403px;font-size:11px;line-height:12.65px;color:#a0a0a0;transform:scaleX(0.9201);transform-origin:0 0;-webkit-text-stroke:0.25px #a0a0a0;">-9</div>
<div class="ab" style="left:1562px;top:408px;width:4px;height:1px;background:#9a9a9a;"></div>
<div class="t" style="left:1570px;top:428px;font-size:11px;line-height:12.65px;color:#a0a0a0;transform:scaleX(0.9201);transform-origin:0 0;-webkit-text-stroke:0.25px #a0a0a0;">-6</div>
<div class="ab" style="left:1562px;top:433px;width:4px;height:1px;background:#9a9a9a;"></div>
<div class="t" style="left:1570px;top:463px;font-size:11px;line-height:12.65px;color:#a0a0a0;transform:scaleX(0.9201);transform-origin:0 0;-webkit-text-stroke:0.25px #a0a0a0;">-3</div>
<div class="ab" style="left:1562px;top:468px;width:4px;height:1px;background:#9a9a9a;"></div>
<div class="ab" style="left:1562px;top:199px;width:2px;height:1px;background:#777;"></div>
<div class="ab" style="left:1562px;top:214px;width:2px;height:1px;background:#777;"></div>
<div class="ab" style="left:1562px;top:249px;width:2px;height:1px;background:#777;"></div>
<div class="ab" style="left:1562px;top:304px;width:2px;height:1px;background:#777;"></div>
<div class="ab" style="left:1562px;top:327px;width:2px;height:1px;background:#777;"></div>
<div class="ab" style="left:1562px;top:341px;width:2px;height:1px;background:#777;"></div>
<div class="ab" style="left:1562px;top:357px;width:2px;height:1px;background:#777;"></div>
<div class="ab" style="left:1562px;top:371px;width:2px;height:1px;background:#777;"></div>
<div class="ab" style="left:1562px;top:394px;width:2px;height:1px;background:#777;"></div>
<div class="ab" style="left:1562px;top:449px;width:2px;height:1px;background:#777;"></div>
<div class="ab" style="left:1562px;top:484px;width:2px;height:1px;background:#777;"></div>
<div class="ab" style="left:1562px;top:499px;width:2px;height:1px;background:#777;"></div>
<div class="ab" style="left:1610px;top:342px;width:21px;height:15px;background:#1a1a1a;border:1px solid #2e2e2e;border-radius:2px"></div>
<div class="t" style="left:1617px;top:345px;font-size:10px;line-height:11.50px;color:#2b8ff2;transform:scaleX(1.0788);transform-origin:0 0;-webkit-text-stroke:0.25px #2b8ff2;">1</div>
<div class="t" style="left:1569px;top:520px;font-size:11.5px;line-height:13.22px;color:#a0a0a0;transform:scaleX(0.9597);transform-origin:0 0;-webkit-text-stroke:0.25px #a0a0a0;">dB</div>
<div class="t" style="left:1570px;top:561px;font-size:11px;line-height:12.65px;color:#a0a0a0;transform:scaleX(0.9201);transform-origin:0 0;-webkit-text-stroke:0.25px #a0a0a0;">-3</div>
<div class="ab" style="left:1562px;top:566px;width:4px;height:1px;background:#9a9a9a;"></div>
<div class="t" style="left:1570px;top:597px;font-size:11px;line-height:12.65px;color:#a0a0a0;transform:scaleX(0.9201);transform-origin:0 0;-webkit-text-stroke:0.25px #a0a0a0;">-6</div>
<div class="ab" style="left:1562px;top:602px;width:4px;height:1px;background:#9a9a9a;"></div>
<div class="t" style="left:1570px;top:621px;font-size:11px;line-height:12.65px;color:#a0a0a0;transform:scaleX(0.9201);transform-origin:0 0;-webkit-text-stroke:0.25px #a0a0a0;">-9</div>
<div class="ab" style="left:1562px;top:626px;width:4px;height:1px;background:#9a9a9a;"></div>
<div class="t" style="left:1570px;top:650px;font-size:11px;line-height:12.65px;color:#a0a0a0;transform:scaleX(1.0692);transform-origin:0 0;-webkit-text-stroke:0.25px #a0a0a0;">-15</div>
<div class="ab" style="left:1562px;top:655px;width:4px;height:1px;background:#9a9a9a;"></div>
<div class="t" style="left:1570px;top:666px;font-size:11px;line-height:12.65px;color:#a0a0a0;transform:scaleX(1.0692);transform-origin:0 0;-webkit-text-stroke:0.25px #a0a0a0;">-21</div>
<div class="ab" style="left:1562px;top:671px;width:4px;height:1px;background:#9a9a9a;"></div>
<div class="t" style="left:1570px;top:680px;font-size:11px;line-height:12.65px;color:#a0a0a0;transform:scaleX(1.1299);transform-origin:0 0;-webkit-text-stroke:0.25px #a0a0a0;">-∞</div>
<div class="ab" style="left:1562px;top:685px;width:4px;height:1px;background:#9a9a9a;"></div>
<div class="t" style="left:1570px;top:695px;font-size:11px;line-height:12.65px;color:#a0a0a0;transform:scaleX(1.0692);transform-origin:0 0;-webkit-text-stroke:0.25px #a0a0a0;">-21</div>
<div class="ab" style="left:1562px;top:700px;width:4px;height:1px;background:#9a9a9a;"></div>
<div class="t" style="left:1570px;top:709px;font-size:11px;line-height:12.65px;color:#a0a0a0;transform:scaleX(1.0692);transform-origin:0 0;-webkit-text-stroke:0.25px #a0a0a0;">-15</div>
<div class="ab" style="left:1562px;top:714px;width:4px;height:1px;background:#9a9a9a;"></div>
<div class="t" style="left:1570px;top:739px;font-size:11px;line-height:12.65px;color:#a0a0a0;transform:scaleX(0.9201);transform-origin:0 0;-webkit-text-stroke:0.25px #a0a0a0;">-9</div>
<div class="ab" style="left:1562px;top:744px;width:4px;height:1px;background:#9a9a9a;"></div>
<div class="t" style="left:1570px;top:764px;font-size:11px;line-height:12.65px;color:#a0a0a0;transform:scaleX(0.9201);transform-origin:0 0;-webkit-text-stroke:0.25px #a0a0a0;">-6</div>
<div class="ab" style="left:1562px;top:769px;width:4px;height:1px;background:#9a9a9a;"></div>
<div class="t" style="left:1570px;top:799px;font-size:11px;line-height:12.65px;color:#a0a0a0;transform:scaleX(0.9201);transform-origin:0 0;-webkit-text-stroke:0.25px #a0a0a0;">-3</div>
<div class="ab" style="left:1562px;top:804px;width:4px;height:1px;background:#9a9a9a;"></div>
<div class="ab" style="left:1562px;top:535px;width:2px;height:1px;background:#777;"></div>
<div class="ab" style="left:1562px;top:550px;width:2px;height:1px;background:#777;"></div>
<div class="ab" style="left:1562px;top:585px;width:2px;height:1px;background:#777;"></div>
<div class="ab" style="left:1562px;top:640px;width:2px;height:1px;background:#777;"></div>
<div class="ab" style="left:1562px;top:663px;width:2px;height:1px;background:#777;"></div>
<div class="ab" style="left:1562px;top:677px;width:2px;height:1px;background:#777;"></div>
<div class="ab" style="left:1562px;top:693px;width:2px;height:1px;background:#777;"></div>
<div class="ab" style="left:1562px;top:707px;width:2px;height:1px;background:#777;"></div>
<div class="ab" style="left:1562px;top:730px;width:2px;height:1px;background:#777;"></div>
<div class="ab" style="left:1562px;top:785px;width:2px;height:1px;background:#777;"></div>
<div class="ab" style="left:1562px;top:820px;width:2px;height:1px;background:#777;"></div>
<div class="ab" style="left:1562px;top:835px;width:2px;height:1px;background:#777;"></div>
<div class="ab" style="left:1610px;top:678px;width:21px;height:15px;background:#1a1a1a;border:1px solid #2e2e2e;border-radius:2px"></div>
<div class="t" style="left:1617px;top:681px;font-size:10px;line-height:11.50px;color:#2b8ff2;transform:scaleX(1.0788);transform-origin:0 0;-webkit-text-stroke:0.25px #2b8ff2;">2</div>
<div class="ab" style="left:311px;top:852px;width:1323px;height:10px;background:#333333;"></div>
<div class="ab" style="left:311px;top:862px;width:1323px;height:1px;background:#121212;"></div>
<svg style="left:1609px;top:855px" width="8" height="5"><path d="M0 5L4 1L8 5Z" fill="#888"/></svg>
<div class="t" style="left:315px;top:875px;font-size:16px;line-height:18.40px;color:#2b8ff2;transform:scaleX(0.9714);transform-origin:0 0;-webkit-text-stroke:0.25px #2b8ff2;">5:20.944</div>
<div class="ab" style="left:762px;top:876px;width:10px;height:9px;background:#454545;"></div>
<svg style="left:790px;top:875px" width="10" height="11"><path d="M0 0L10 5.5L0 11Z" fill="#a0a0a0"/></svg>
<div class="ab" style="left:820px;top:876px;width:3px;height:9px;background:#454545;"></div>
<div class="ab" style="left:826px;top:876px;width:3px;height:9px;background:#454545;"></div>
<svg style="left:847px;top:875px" width="13" height="11"><rect x="0" y="0" width="2" height="11" fill="#a0a0a0"/><path d="M12 0L3 5.5L12 11Z" fill="#a0a0a0"/></svg>
<svg style="left:875px;top:876px" width="15" height="9"><path d="M7 0L0 4.5L7 9ZM15 0L8 4.5L15 9Z" fill="#a0a0a0"/></svg>
<svg style="left:903px;top:876px" width="15" height="9"><path d="M0 0L7 4.5L0 9ZM8 0L15 4.5L8 9Z" fill="#a0a0a0"/></svg>
<svg style="left:934px;top:875px" width="13" height="11"><path d="M0 0L9 5.5L0 11Z" fill="#a0a0a0"/><rect x="10" y="0" width="2" height="11" fill="#a0a0a0"/></svg>
<svg style="left:963px;top:875px" width="11" height="11"><circle cx="5.5" cy="5.5" r="5.2" fill="#ee3333"/></svg>
<svg style="left:990px;top:874px" width="15" height="13"><path d="M1 5V12H14V8" stroke="#a0a0a0" stroke-width="1.8" fill="none"/><path d="M3 9Q4 4 10 4V1L14 4.5L10 8V6Q6 6 3 9Z" fill="#a0a0a0"/></svg>
<svg style="left:1018px;top:874px" width="18" height="13"><path d="M4 1L1 6.5L4 12M7 1L4.5 6.5L7 12" stroke="#a0a0a0" stroke-width="1.3" fill="none"/><path d="M8 6.5H13M11 2L17 6.5L11 11Z" stroke="#a0a0a0" stroke-width="1.2" fill="#a0a0a0"/></svg>
<svg style="left:0;top:0" width="1683" height="1020"><circle cx="1353" cy="880" r="4.8" fill="none" stroke="#a0a0a0" stroke-width="1.4"/><path d="M1356.5 883.5L1360.5 887.5" stroke="#a0a0a0" stroke-width="1.8"/><path d="M1350.5 880H1355.5" stroke="#a0a0a0" stroke-width="1.2"/><path d="M1353 877.5V882.5" stroke="#a0a0a0" stroke-width="1.2"/><path d="M1344 872V889M1342 874L1344 871.5L1346 874M1342 887L1344 889.5L1346 887" stroke="#a0a0a0" stroke-width="1.1" fill="none"/><circle cx="1382" cy="880" r="4.8" fill="none" stroke="#a0a0a0" stroke-width="1.4"/><path d="M1385.5 883.5L1389.5 887.5" stroke="#a0a0a0" stroke-width="1.8"/><path d="M1379.5 880H1384.5" stroke="#a0a0a0" stroke-width="1.2"/><path d="M1373 872V889M1371 874L1373 871.5L1375 874M1371 887L1373 889.5L1375 887" stroke="#a0a0a0" stroke-width="1.1" fill="none"/><circle cx="1409" cy="881" r="4.8" fill="none" stroke="#a0a0a0" stroke-width="1.4"/><path d="M1412.5 884.5L1416.5 888.5" stroke="#a0a0a0" stroke-width="1.8"/><path d="M1406.5 881H1411.5" stroke="#a0a0a0" stroke-width="1.2"/><path d="M1409 878.5V883.5" stroke="#a0a0a0" stroke-width="1.2"/><path d="M1401 872H1418M1403 870L1400.5 872L1403 874M1416 870L1418.5 872L1416 874" stroke="#a0a0a0" stroke-width="1.1" fill="none"/><circle cx="1438" cy="881" r="4.8" fill="none" stroke="#a0a0a0" stroke-width="1.4"/><path d="M1441.5 884.5L1445.5 888.5" stroke="#a0a0a0" stroke-width="1.8"/><path d="M1435.5 881H1440.5" stroke="#a0a0a0" stroke-width="1.2"/><path d="M1430 872H1447M1432 870L1429.5 872L1432 874M1445 870L1447.5 872L1445 874" stroke="#a0a0a0" stroke-width="1.1" fill="none"/><circle cx="1467" cy="880" r="4.8" fill="none" stroke="#a0a0a0" stroke-width="1.4"/><path d="M1470.5 883.5L1474.5 887.5" stroke="#a0a0a0" stroke-width="1.8"/><path d="M1464.5 880H1469.5" stroke="#a0a0a0" stroke-width="1.2"/><path d="M1467 871L1465 873H1469ZM1467 889L1465 887H1469ZM1458 880L1460 878V882Z" fill="#a0a0a0"/><circle cx="1498" cy="881" r="4.8" fill="none" stroke="#a0a0a0" stroke-width="1.4"/><path d="M1501.5 884.5L1505.5 888.5" stroke="#a0a0a0" stroke-width="1.8"/><path d="M1490 874L1488 880L1490 886" stroke="#a0a0a0" stroke-width="1.2" fill="none"/><circle cx="1527" cy="881" r="4.8" fill="none" stroke="#a0a0a0" stroke-width="1.4"/><path d="M1530.5 884.5L1534.5 888.5" stroke="#a0a0a0" stroke-width="1.8"/><path d="M1518 874L1520 880L1518 886" stroke="#a0a0a0" stroke-width="1.2" fill="none"/><circle cx="1556" cy="881" r="4.8" fill="none" stroke="#a0a0a0" stroke-width="1.4"/><path d="M1559.5 884.5L1563.5 888.5" stroke="#a0a0a0" stroke-width="1.8"/><path d="M1546 874L1544 880L1546 886M1548 874L1550 880L1548 886" stroke="#a0a0a0" stroke-width="1.2" fill="none"/><circle cx="1582" cy="882" r="6" fill="none" stroke="#a0a0a0" stroke-width="1.5"/><path d="M1582 882V876A6 6 0 0 1 1587 885Z" fill="#a0a0a0"/><path d="M1579 872H1585M1582 872V875M1576 875L1578 873" stroke="#a0a0a0" stroke-width="1.4"/><circle cx="1612" cy="881" r="4.8" fill="none" stroke="#4a4a4a" stroke-width="1.4"/><path d="M1615.5 884.5L1619.5 888.5" stroke="#4a4a4a" stroke-width="1.8"/><path d="M1609.5 881H1614.5" stroke="#4a4a4a" stroke-width="1.2"/><path d="M1612 878.5V883.5" stroke="#4a4a4a" stroke-width="1.2"/><path d="M1604 872V889" stroke="#4a4a4a" stroke-width="1.1"/></svg>
<div class="ab" style="left:1645px;top:76px;width:35px;height:810px;background:#232323;"></div>
<div class="ab" style="left:1646px;top:105px;width:34px;height:1px;background:#2e2e2e;"></div>
<div class="ab" style="left:1646px;top:134px;width:34px;height:1px;background:#2e2e2e;"></div>
<div class="ab" style="left:1646px;top:170px;width:34px;height:1px;background:#2e2e2e;"></div>
<div class="ab" style="left:1646px;top:200px;width:34px;height:1px;background:#2e2e2e;"></div>
<div class="ab" style="left:1660px;top:80px;width:1px;height:21px;background:#2c2c2c;"></div>
<div class="t" style="left:1657px;top:86px;font-size:10px;line-height:11.50px;color:#cfcfcf;transform:scaleX(0.9008);transform-origin:0 0;-webkit-text-stroke:0.25px #cfcfcf;">(</div>
<div class="t" style="left:1655.5px;top:116px;font-size:11.5px;line-height:13.22px;color:#a0a0a0;font-style:italic;transform:scaleX(0.9058);transform-origin:0 0;-webkit-text-stroke:0.25px #a0a0a0;clip-path:inset(0 0 0 0);">Ниче</div>
<div class="t" style="left:1655.5px;top:146px;font-size:11.5px;line-height:13.22px;color:#505050;transform:scaleX(0.9174);transform-origin:0 0;-webkit-text-stroke:0.25px #505050;">Стил</div>
<div class="ab" style="left:1645px;top:886px;width:35px;height:13px;background:#1f1f1f;"></div>
<div class="t" style="left:315px;top:911px;font-size:12px;line-height:13.80px;color:#d0d0d0;transform:scaleX(0.9343);transform-origin:0 0;-webkit-text-stroke:0.25px #d0d0d0;">Уровни</div>
<svg style="left:363px;top:913px" width="8" height="8"><path d="M0 0.5H8M0 4H8M0 7.5H8" stroke="#9a9a9a" stroke-width="1"/></svg>
<div class="ab" style="left:304px;top:930px;width:1048px;height:2px;background:#141414;"></div>
<div class="ab" style="left:310px;top:934px;width:1036px;height:44px;background:#1e1e1e;border:1px solid #121212"></div>
<div class="ab" style="left:311px;top:937px;width:2px;height:39px;background:#c8b400;"></div>
<div class="ab" style="left:311px;top:955px;width:2px;height:1px;background:#333;"></div>
<div class="ab" style="left:1336px;top:935px;width:10px;height:42px;background:#1e1e1e;border:1px solid #121212"></div>
<div class="ab" style="left:1337px;top:955px;width:8px;height:1px;background:#121212;"></div>
<div class="ab" style="left:1334px;top:978px;width:1px;height:3px;background:#8a8a8a;"></div>
<div class="ab" style="left:1317px;top:979px;width:1px;height:2px;background:#666;"></div>
<div class="ab" style="left:1300px;top:979px;width:1px;height:2px;background:#666;"></div>
<div class="t" style="left:1331.0px;top:984px;font-size:10.5px;line-height:12.07px;color:#a0a0a0;transform:scaleX(1.0274);transform-origin:0 0;-webkit-text-stroke:0.25px #a0a0a0;">0</div>
<div class="ab" style="left:1283px;top:978px;width:1px;height:3px;background:#8a8a8a;"></div>
<div class="ab" style="left:1266px;top:979px;width:1px;height:2px;background:#666;"></div>
<div class="ab" style="left:1249px;top:979px;width:1px;height:2px;background:#666;"></div>
<div class="t" style="left:1278.87px;top:984px;font-size:10.5px;line-height:12.07px;color:#a0a0a0;transform:scaleX(0.8568);transform-origin:0 0;-webkit-text-stroke:0.25px #a0a0a0;">-3</div>
<div class="ab" style="left:1232px;top:978px;width:1px;height:3px;background:#8a8a8a;"></div>
<div class="ab" style="left:1215px;top:979px;width:1px;height:2px;background:#666;"></div>
<div class="ab" style="left:1198px;top:979px;width:1px;height:2px;background:#666;"></div>
<div class="t" style="left:1227.74px;top:984px;font-size:10.5px;line-height:12.07px;color:#a0a0a0;transform:scaleX(0.8568);transform-origin:0 0;-webkit-text-stroke:0.25px #a0a0a0;">-6</div>
<div class="ab" style="left:1181px;top:978px;width:1px;height:3px;background:#8a8a8a;"></div>
<div class="ab" style="left:1164px;top:979px;width:1px;height:2px;background:#666;"></div>
<div class="ab" style="left:1147px;top:979px;width:1px;height:2px;background:#666;"></div>
<div class="t" style="left:1176.61px;top:984px;font-size:10.5px;line-height:12.07px;color:#a0a0a0;transform:scaleX(0.8568);transform-origin:0 0;-webkit-text-stroke:0.25px #a0a0a0;">-9</div>
<div class="ab" style="left:1129px;top:978px;width:1px;height:3px;background:#8a8a8a;"></div>
<div class="ab" style="left:1112px;top:979px;width:1px;height:2px;background:#666;"></div>
<div class="ab" style="left:1095px;top:979px;width:1px;height:2px;background:#666;"></div>
<div class="t" style="left:1122.98px;top:984px;font-size:10.5px;line-height:12.07px;color:#a0a0a0;transform:scaleX(0.8566);transform-origin:0 0;-webkit-text-stroke:0.25px #a0a0a0;">-12</div>
<div class="ab" style="left:1078px;top:978px;width:1px;height:3px;background:#8a8a8a;"></div>
<div class="ab" style="left:1061px;top:979px;width:1px;height:2px;background:#666;"></div>
<div class="ab" style="left:1044px;top:979px;width:1px;height:2px;background:#666;"></div>
<div class="t" style="left:1071.85px;top:984px;font-size:10.5px;line-height:12.07px;color:#a0a0a0;transform:scaleX(0.8566);transform-origin:0 0;-webkit-text-stroke:0.25px #a0a0a0;">-15</div>
<div class="ab" style="left:1027px;top:978px;width:1px;height:3px;background:#8a8a8a;"></div>
<div class="ab" style="left:1010px;top:979px;width:1px;height:2px;background:#666;"></div>
<div class="ab" style="left:993px;top:979px;width:1px;height:2px;background:#666;"></div>
<div class="t" style="left:1020.72px;top:984px;font-size:10.5px;line-height:12.07px;color:#a0a0a0;transform:scaleX(0.8566);transform-origin:0 0;-webkit-text-stroke:0.25px #a0a0a0;">-18</div>
<div class="ab" style="left:976px;top:978px;width:1px;height:3px;background:#8a8a8a;"></div>
<div class="ab" style="left:959px;top:979px;width:1px;height:2px;background:#666;"></div>
<div class="ab" style="left:942px;top:979px;width:1px;height:2px;background:#666;"></div>
<div class="t" style="left:969.5899999999999px;top:984px;font-size:10.5px;line-height:12.07px;color:#a0a0a0;transform:scaleX(0.8566);transform-origin:0 0;-webkit-text-stroke:0.25px #a0a0a0;">-21</div>
<div class="ab" style="left:925px;top:978px;width:1px;height:3px;background:#8a8a8a;"></div>
<div class="ab" style="left:908px;top:979px;width:1px;height:2px;background:#666;"></div>
<div class="ab" style="left:891px;top:979px;width:1px;height:2px;background:#666;"></div>
<div class="t" style="left:918.46px;top:984px;font-size:10.5px;line-height:12.07px;color:#a0a0a0;transform:scaleX(0.8566);transform-origin:0 0;-webkit-text-stroke:0.25px #a0a0a0;">-24</div>
<div class="ab" style="left:874px;top:978px;width:1px;height:3px;background:#8a8a8a;"></div>
<div class="ab" style="left:857px;top:979px;width:1px;height:2px;background:#666;"></div>
<div class="ab" style="left:840px;top:979px;width:1px;height:2px;background:#666;"></div>
<div class="t" style="left:867.3299999999999px;top:984px;font-size:10.5px;line-height:12.07px;color:#a0a0a0;transform:scaleX(0.8566);transform-origin:0 0;-webkit-text-stroke:0.25px #a0a0a0;">-27</div>
<div class="ab" style="left:823px;top:978px;width:1px;height:3px;background:#8a8a8a;"></div>
<div class="ab" style="left:806px;top:979px;width:1px;height:2px;background:#666;"></div>
<div class="ab" style="left:789px;top:979px;width:1px;height:2px;background:#666;"></div>
<div class="t" style="left:816.2px;top:984px;font-size:10.5px;line-height:12.07px;color:#a0a0a0;transform:scaleX(0.8566);transform-origin:0 0;-webkit-text-stroke:0.25px #a0a0a0;">-30</div>
<div class="ab" style="left:772px;top:978px;width:1px;height:3px;background:#8a8a8a;"></div>
<div class="ab" style="left:755px;top:979px;width:1px;height:2px;background:#666;"></div>
<div class="ab" style="left:737px;top:979px;width:1px;height:2px;background:#666;"></div>
<div class="t" style="left:765.0699999999999px;top:984px;font-size:10.5px;line-height:12.07px;color:#a0a0a0;transform:scaleX(0.8566);transform-origin:0 0;-webkit-text-stroke:0.25px #a0a0a0;">-33</div>
<div class="ab" style="left:720px;top:978px;width:1px;height:3px;background:#8a8a8a;"></div>
<div class="ab" style="left:703px;top:979px;width:1px;height:2px;background:#666;"></div>
<div class="ab" style="left:686px;top:979px;width:1px;height:2px;background:#666;"></div>
<div class="t" style="left:713.9399999999999px;top:984px;font-size:10.5px;line-height:12.07px;color:#a0a0a0;transform:scaleX(0.8566);transform-origin:0 0;-webkit-text-stroke:0.25px #a0a0a0;">-36</div>
<div class="ab" style="left:669px;top:978px;width:1px;height:3px;background:#8a8a8a;"></div>
<div class="ab" style="left:652px;top:979px;width:1px;height:2px;background:#666;"></div>
<div class="ab" style="left:635px;top:979px;width:1px;height:2px;background:#666;"></div>
<div class="t" style="left:662.81px;top:984px;font-size:10.5px;line-height:12.07px;color:#a0a0a0;transform:scaleX(0.8566);transform-origin:0 0;-webkit-text-stroke:0.25px #a0a0a0;">-39</div>
<div class="ab" style="left:618px;top:978px;width:1px;height:3px;background:#8a8a8a;"></div>
<div class="ab" style="left:601px;top:979px;width:1px;height:2px;background:#666;"></div>
<div class="ab" style="left:584px;top:979px;width:1px;height:2px;background:#666;"></div>
<div class="t" style="left:611.68px;top:984px;font-size:10.5px;line-height:12.07px;color:#a0a0a0;transform:scaleX(0.8566);transform-origin:0 0;-webkit-text-stroke:0.25px #a0a0a0;">-42</div>
<div class="ab" style="left:567px;top:978px;width:1px;height:3px;background:#8a8a8a;"></div>
<div class="ab" style="left:550px;top:979px;width:1px;height:2px;background:#666;"></div>
<div class="ab" style="left:533px;top:979px;width:1px;height:2px;background:#666;"></div>
<div class="t" style="left:560.55px;top:984px;font-size:10.5px;line-height:12.07px;color:#a0a0a0;transform:scaleX(0.8566);transform-origin:0 0;-webkit-text-stroke:0.25px #a0a0a0;">-45</div>
<div class="ab" style="left:516px;top:978px;width:1px;height:3px;background:#8a8a8a;"></div>
<div class="ab" style="left:499px;top:979px;width:1px;height:2px;background:#666;"></div>
<div class="ab" style="left:482px;top:979px;width:1px;height:2px;background:#666;"></div>
<div class="t" style="left:509.41999999999996px;top:984px;font-size:10.5px;line-height:12.07px;color:#a0a0a0;transform:scaleX(0.8566);transform-origin:0 0;-webkit-text-stroke:0.25px #a0a0a0;">-48</div>
<div class="ab" style="left:465px;top:978px;width:1px;height:3px;background:#8a8a8a;"></div>
<div class="ab" style="left:448px;top:979px;width:1px;height:2px;background:#666;"></div>
<div class="ab" style="left:431px;top:979px;width:1px;height:2px;background:#666;"></div>
<div class="t" style="left:458.28999999999996px;top:984px;font-size:10.5px;line-height:12.07px;color:#a0a0a0;transform:scaleX(0.8566);transform-origin:0 0;-webkit-text-stroke:0.25px #a0a0a0;">-51</div>
<div class="ab" style="left:414px;top:978px;width:1px;height:3px;background:#8a8a8a;"></div>
<div class="ab" style="left:397px;top:979px;width:1px;height:2px;background:#666;"></div>
<div class="ab" style="left:380px;top:979px;width:1px;height:2px;background:#666;"></div>
<div class="t" style="left:407.15999999999997px;top:984px;font-size:10.5px;line-height:12.07px;color:#a0a0a0;transform:scaleX(0.8566);transform-origin:0 0;-webkit-text-stroke:0.25px #a0a0a0;">-54</div>
<div class="ab" style="left:363px;top:978px;width:1px;height:3px;background:#8a8a8a;"></div>
<div class="ab" style="left:345px;top:979px;width:1px;height:2px;background:#666;"></div>
<div class="ab" style="left:328px;top:979px;width:1px;height:2px;background:#666;"></div>
<div class="t" style="left:356.03px;top:984px;font-size:10.5px;line-height:12.07px;color:#a0a0a0;transform:scaleX(0.8566);transform-origin:0 0;-webkit-text-stroke:0.25px #a0a0a0;">-57</div>
<div class="t" style="left:310px;top:984px;font-size:10.5px;line-height:12.07px;color:#a0a0a0;transform:scaleX(0.7786);transform-origin:0 0;-webkit-text-stroke:0.25px #a0a0a0;">dB</div>
<div class="ab" style="left:304px;top:997px;width:1048px;height:2px;background:#161616;"></div>
<div class="t" style="left:1368px;top:911px;font-size:12px;line-height:13.80px;color:#d8d8d8;transform:scaleX(0.9202);transform-origin:0 0;-webkit-text-stroke:0.25px #d8d8d8;">Выбор/Видимое</div>
<svg style="left:1461px;top:913px" width="8" height="8"><path d="M0 0.5H8M0 4H8M0 7.5H8" stroke="#9a9a9a" stroke-width="1"/></svg>
<div class="t" style="left:1429.5px;top:936px;font-size:12px;line-height:13.80px;color:#a8a8a8;transform:scaleX(0.8729);transform-origin:0 0;-webkit-text-stroke:0.25px #a8a8a8;">Начало</div>
<div class="t" style="left:1500px;top:936px;font-size:12px;line-height:13.80px;color:#a8a8a8;transform:scaleX(0.9161);transform-origin:0 0;-webkit-text-stroke:0.25px #a8a8a8;">Конец</div>
<div class="t" style="left:1570px;top:936px;font-size:12px;line-height:13.80px;color:#a8a8a8;transform:scaleX(0.9087);transform-origin:0 0;-webkit-text-stroke:0.25px #a8a8a8;">Продолжительность</div>
<div class="t" style="left:1367.5px;top:955px;font-size:12px;line-height:13.80px;color:#a8a8a8;transform:scaleX(0.8807);transform-origin:0 0;-webkit-text-stroke:0.25px #a8a8a8;">Выделение</div>
<div class="t" style="left:1431px;top:955px;font-size:12px;line-height:13.80px;color:#2b8ff2;transform:scaleX(0.8777);transform-origin:0 0;-webkit-text-stroke:0.25px #2b8ff2;">5:20.944</div>
<div class="t" style="left:1502px;top:955px;font-size:12px;line-height:13.80px;color:#2b8ff2;transform:scaleX(0.8777);transform-origin:0 0;-webkit-text-stroke:0.25px #2b8ff2;">5:20.944</div>
<div class="t" style="left:1571px;top:955px;font-size:12px;line-height:13.80px;color:#2b8ff2;transform:scaleX(0.8777);transform-origin:0 0;-webkit-text-stroke:0.25px #2b8ff2;">0:00.000</div>
<div class="t" style="left:1367.5px;top:976px;font-size:12px;line-height:13.80px;color:#a8a8a8;transform:scaleX(0.8982);transform-origin:0 0;-webkit-text-stroke:0.25px #a8a8a8;">Вид</div>
<div class="t" style="left:1431px;top:976px;font-size:12px;line-height:13.80px;color:#2b8ff2;transform:scaleX(0.8777);transform-origin:0 0;-webkit-text-stroke:0.25px #2b8ff2;">0:00.000</div>
<div class="t" style="left:1502px;top:976px;font-size:12px;line-height:13.80px;color:#2b8ff2;transform:scaleX(0.8804);transform-origin:0 0;-webkit-text-stroke:0.25px #2b8ff2;">13:31.397</div>
<div class="t" style="left:1571.5px;top:976px;font-size:12px;line-height:13.80px;color:#2b8ff2;transform:scaleX(0.8710);transform-origin:0 0;-webkit-text-stroke:0.25px #2b8ff2;">13:31.397</div>
<div class="ab" style="left:1384px;top:1002px;width:1px;height:14px;background:#333;"></div>
<div class="ab" style="left:1452px;top:1002px;width:1px;height:14px;background:#333;"></div>
<div class="ab" style="left:1521px;top:1002px;width:1px;height:14px;background:#333;"></div>
<div class="ab" style="left:1634px;top:1002px;width:1px;height:14px;background:#333;"></div>
<div class="ab" style="left:943px;top:1002px;width:1px;height:14px;background:#333;"></div>
<div class="ab" style="left:982px;top:1002px;width:1px;height:14px;background:#333;"></div>
<div class="ab" style="left:1112px;top:1002px;width:1px;height:14px;background:#333;"></div>
<div class="t" style="left:1120px;top:1004px;font-size:12px;line-height:13.80px;color:#a8a8a8;transform:scaleX(0.9075);transform-origin:0 0;-webkit-text-stroke:0.25px #a8a8a8;">48000 Гц ● 32-бит (с плавающей точкой) ● 2 Канал</div>
<div class="t" style="left:1393px;top:1004px;font-size:12px;line-height:13.80px;color:#a8a8a8;transform:scaleX(0.8634);transform-origin:0 0;-webkit-text-stroke:0.25px #a8a8a8;">359,51 МБ</div>
<div class="t" style="left:1469px;top:1004px;font-size:12px;line-height:13.80px;color:#a8a8a8;transform:scaleX(0.8617);transform-origin:0 0;-webkit-text-stroke:0.25px #a8a8a8;">16:21.713</div>
<div class="t" style="left:1530px;top:1004px;font-size:12px;line-height:13.80px;color:#a8a8a8;transform:scaleX(0.8971);transform-origin:0 0;-webkit-text-stroke:0.25px #a8a8a8;">487,93 Гб свободно</div>
<div class="ab" style="left:966px;top:283px;width:396px;height:578px;border-radius:6px;box-shadow:0 2px 5px rgba(0,0,0,0.45)"></div>
<div class="ab" style="left:968px;top:284px;width:392px;height:574px;background:#f9f9f9;border-radius:4px"></div>
<div class="t" style="left:1004.5px;top:292px;font-size:12.5px;line-height:14.37px;color:#1a1a1a;transform:scaleX(0.9313);transform-origin:0 0;">Выделить Все</div>
<div class="t" style="left:1300.5px;top:292px;font-size:12.5px;line-height:14.37px;color:#1a1a1a;transform:scaleX(1.0263);transform-origin:0 0;">Ctrl+A</div>
<div class="t" style="left:1004.5px;top:316px;font-size:12.5px;line-height:14.37px;color:#a8a8a8;transform:scaleX(0.9808);transform-origin:0 0;">Отменить выбор всех</div>
<div class="t" style="left:1267.5px;top:316px;font-size:12.5px;line-height:14.37px;color:#a8a8a8;transform:scaleX(1.0239);transform-origin:0 0;">Ctrl+Shift+A</div>
<div class="t" style="left:1004.5px;top:338px;font-size:12.5px;line-height:14.37px;color:#1a1a1a;transform:scaleX(0.9802);transform-origin:0 0;">Выбор текущего представления времени</div>
<div class="t" style="left:1004.5px;top:362px;font-size:12.5px;line-height:14.37px;color:#a8a8a8;transform:scaleX(0.9836);transform-origin:0 0;">Инвертировать выделение</div>
<div class="ab" style="left:977px;top:382px;width:374px;height:1px;background:#dcdcdc;"></div>
<div class="t" style="left:1004.5px;top:391px;font-size:12.5px;line-height:14.37px;color:#a8a8a8;transform:scaleX(0.9589);transform-origin:0 0;">Сохранить выделение Как...</div>
<div class="t" style="left:1278.5px;top:391px;font-size:12.5px;line-height:14.37px;color:#a8a8a8;transform:scaleX(1.0182);transform-origin:0 0;">Ctrl+Alt+S</div>
<div class="ab" style="left:977px;top:411px;width:374px;height:1px;background:#dcdcdc;"></div>
<div class="t" style="left:1004.5px;top:421px;font-size:12.5px;line-height:14.37px;color:#1a1a1a;transform:scaleX(0.9833);transform-origin:0 0;">Вставить в Мультитрек</div>
<svg style="left:1340px;top:422px" width="5" height="9"><path d="M0.5 0.5L4.5 4.5L0.5 8.5" stroke="#333" stroke-width="1.1" fill="none"/></svg>
<div class="t" style="left:1004.5px;top:444px;font-size:12.5px;line-height:14.37px;color:#1a1a1a;transform:scaleX(0.9480);transform-origin:0 0;">Вставить весь файл в макет CD</div>
<svg style="left:1340px;top:445px" width="5" height="9"><path d="M0.5 0.5L4.5 4.5L0.5 8.5" stroke="#333" stroke-width="1.1" fill="none"/></svg>
<div class="ab" style="left:977px;top:464px;width:374px;height:1px;background:#dcdcdc;"></div>
<div class="t" style="left:1004.5px;top:474px;font-size:12.5px;line-height:14.37px;color:#a8a8a8;transform:scaleX(0.9643);transform-origin:0 0;">Захват образца шума</div>
<div class="t" style="left:1296.0px;top:474px;font-size:12.5px;line-height:14.37px;color:#a8a8a8;">Shift+P</div>
<div class="t" style="left:1004.5px;top:497px;font-size:12.5px;line-height:14.37px;color:#a8a8a8;transform:scaleX(0.9820);transform-origin:0 0;">Узнать звуковую модель</div>
<div class="ab" style="left:977px;top:517px;width:374px;height:1px;background:#dcdcdc;"></div>
<div class="t" style="left:1004.5px;top:527px;font-size:12.5px;line-height:14.37px;color:#1a1a1a;transform:scaleX(0.9684);transform-origin:0 0;">Задать текущий буфер обмена</div>
<svg style="left:1340px;top:527px" width="5" height="9"><path d="M0.5 0.5L4.5 4.5L0.5 8.5" stroke="#333" stroke-width="1.1" fill="none"/></svg>
<div class="t" style="left:1004.5px;top:550px;font-size:12.5px;line-height:14.37px;color:#a8a8a8;transform:scaleX(0.9532);transform-origin:0 0;">Вырезать</div>
<div class="t" style="left:1301.0px;top:550px;font-size:12.5px;line-height:14.37px;color:#a8a8a8;transform:scaleX(1.0120);transform-origin:0 0;">Ctrl+X</div>
<div class="t" style="left:1004.5px;top:573px;font-size:12.5px;line-height:14.37px;color:#1a1a1a;transform:scaleX(1.0103);transform-origin:0 0;">Копировать</div>
<div class="t" style="left:1300.5px;top:573px;font-size:12.5px;line-height:14.37px;color:#1a1a1a;transform:scaleX(1.0065);transform-origin:0 0;">Ctrl+C</div>
<div class="t" style="left:1004.5px;top:596px;font-size:12.5px;line-height:14.37px;color:#1a1a1a;">Копировать в Новый</div>
<div class="t" style="left:1271.8px;top:596px;font-size:12.5px;line-height:14.37px;color:#1a1a1a;transform:scaleX(1.0233);transform-origin:0 0;">Alt+Shift+C</div>
<div class="t" style="left:1004.5px;top:619px;font-size:12.5px;line-height:14.37px;color:#a8a8a8;transform:scaleX(0.9436);transform-origin:0 0;">Вставить</div>
<div class="t" style="left:1300.5px;top:619px;font-size:12.5px;line-height:14.37px;color:#a8a8a8;transform:scaleX(1.0263);transform-origin:0 0;">Ctrl+V</div>
<div class="t" style="left:1004.5px;top:642px;font-size:12.5px;line-height:14.37px;color:#1a1a1a;transform:scaleX(0.9444);transform-origin:0 0;">Вставить микш...</div>
<div class="t" style="left:1267.5px;top:642px;font-size:12.5px;line-height:14.37px;color:#1a1a1a;transform:scaleX(1.0239);transform-origin:0 0;">Ctrl+Shift+V</div>
<div class="t" style="left:1004.5px;top:665px;font-size:12.5px;line-height:14.37px;color:#a8a8a8;transform:scaleX(0.9429);transform-origin:0 0;">Удалить</div>
<div class="t" style="left:1301.0px;top:665px;font-size:12.5px;line-height:14.37px;color:#a8a8a8;transform:scaleX(0.9825);transform-origin:0 0;">Delete</div>
<div class="ab" style="left:977px;top:685px;width:374px;height:1px;background:#dcdcdc;"></div>
<div class="t" style="left:1004.5px;top:694px;font-size:12.5px;line-height:14.37px;color:#a8a8a8;transform:scaleX(0.9609);transform-origin:0 0;">Обрезать</div>
<div class="t" style="left:1302.0px;top:694px;font-size:12.5px;line-height:14.37px;color:#a8a8a8;">Ctrl+T</div>
<div class="t" style="left:1004.5px;top:718px;font-size:12.5px;line-height:14.37px;color:#a8a8a8;transform:scaleX(0.9792);transform-origin:0 0;">Тишина</div>
<div class="t" style="left:1004.5px;top:740px;font-size:12.5px;line-height:14.37px;color:#a8a8a8;transform:scaleX(0.9770);transform-origin:0 0;">Автоисправление выделения</div>
<div class="t" style="left:1299.5px;top:740px;font-size:12.5px;line-height:14.37px;color:#a8a8a8;transform:scaleX(1.0345);transform-origin:0 0;">Ctrl+U</div>
<div class="ab" style="left:977px;top:760px;width:374px;height:1px;background:#dcdcdc;"></div>
<div class="t" style="left:1004.5px;top:770px;font-size:12.5px;line-height:14.37px;color:#1a1a1a;transform:scaleX(1.0120);transform-origin:0 0;">Маркер</div>
<svg style="left:1340px;top:771px" width="5" height="9"><path d="M0.5 0.5L4.5 4.5L0.5 8.5" stroke="#333" stroke-width="1.1" fill="none"/></svg>
<div class="t" style="left:1004.5px;top:793px;font-size:12.5px;line-height:14.37px;color:#1a1a1a;transform:scaleX(0.9782);transform-origin:0 0;">Преобразовать тип образца...</div>
<div class="t" style="left:1296.5px;top:793px;font-size:12.5px;line-height:14.37px;color:#1a1a1a;">Shift+T</div>
<div class="t" style="left:1004.5px;top:816px;font-size:12.5px;line-height:14.37px;color:#1a1a1a;transform:scaleX(0.9669);transform-origin:0 0;">Извлечь каналы для моно файлов</div>
<div class="t" style="left:1004.5px;top:839px;font-size:12.5px;line-height:14.37px;color:#1a1a1a;transform:scaleX(0.9730);transform-origin:0 0;">Делитель диапазона частот...</div>
<svg style="left:800px;top:167px" width="13" height="14"><path d="M1 1H12V8L6.5 13L1 8Z" fill="#2b8ff2"/></svg>

<div class="ab" style="left:0;top:0;width:1683px;height:1020px;border-radius:7px;border:2px solid #0a7fe8;border-top-color:#0078d4;box-shadow:0 0 0 12px #e6e6e6;pointer-events:none"></div>
</body></html>
